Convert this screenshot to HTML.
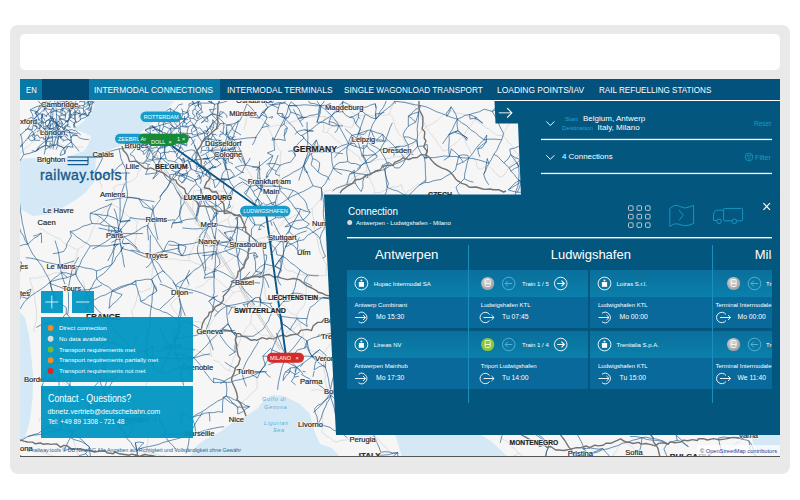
<!DOCTYPE html>
<html><head><meta charset="utf-8">
<style>
*{margin:0;padding:0;box-sizing:border-box}
html,body{width:800px;height:500px;overflow:hidden;background:#fff;font-family:"Liberation Sans",sans-serif}
.a{position:absolute}
.frame{left:10px;top:25px;width:780px;height:449px;background:#e9e9ea;border-radius:8px}
.topbox{left:20px;top:34px;width:760px;height:36px;background:#fff;border-radius:5px}
.map{left:20px;top:79px;width:760px;height:378px;overflow:hidden;background:#f6f6f5}
.pg{position:absolute;left:-20px;top:-79px;width:800px;height:500px}
.nv{position:absolute;top:79px;height:21px;color:#fff;font-size:9.9px;line-height:22.6px;white-space:nowrap}
.nv span{display:inline-block;transform-origin:0 50%;transform:scaleX(.855)}
.t{position:absolute;white-space:nowrap;line-height:1}
.sx{display:inline-block;transform-origin:0 50%}
</style></head><body>
<div class="a frame"></div>
<div class="a topbox"></div>
<div class="a map"><div class="pg">
<svg class="a" style="left:0;top:0" width="800" height="500" viewBox="0 0 800 500">
<rect x="20" y="79" width="760" height="378" fill="#f6f6f6"/>
<path d="M95 79L95 100L92 112L84 121L74 129L82 132L91 136L88 145L84 151L67 157L48 161.6L34 158L20 159L20 209L33 216L53 214L64 207L75 200.6L86 192L94.8 181L96 156.6L100.7 153L121 145.6L140 133L155 120L168 108L175 100L180 79Z" fill="#d4e9f5"/>
<path d="M20 312L25 318L29 335L31 352L33 375L32.6 398L30 420L25 438L20 442Z" fill="#d4e9f5"/>
<path d="M190 457L196 446L206 439L220 432L232 423L246 416L258 408L264 400L272 395L284 396L300 404L310 414L314 430L320 444L332 448L340 457Z" fill="#d4e9f5"/>
<path d="M395 434L480 434L492 442L508 457L402 457Z" fill="#d4e9f5"/>
<path d="M750 434L780 434L780 457L758 457Z" fill="#d4e9f5"/>
<path d="M394.7 100.1L393.5 103.6L391.9 106.9L390.6 110.4L389.6 113.9M394.7 100.1L397.9 101.3L401.4 100.8L404.6 102.0L407.9 102.9L411.4 102.0M411.4 102.0L413.1 104.7L415.2 107.2L417.1 109.8L419.1 112.4L420.1 115.5L421.2 118.5L423.1 121.1L424.8 123.8L426.0 126.8M34.4 108.3L35.4 111.3L36.5 114.3L37.2 117.4L38.7 120.3L39.5 123.4L39.4 126.7M250.1 110.1L249.2 113.4L247.4 116.4L246.1 119.5L245.9 123.0L244.5 126.2L244.2 129.7M250.1 110.1L252.8 112.3L255.0 115.0L258.2 116.5L261.1 118.5L263.7 120.7L266.0 123.3M448.8 110.5L446.8 113.0L443.9 114.4L441.5 116.4L439.1 118.5L437.0 120.7L434.3 122.4L431.7 124.1L428.7 125.3L426.0 126.8M448.8 110.5L451.8 111.1L454.6 112.4L457.5 113.3L460.6 113.6L463.6 114.2L466.4 115.5L469.2 116.7L471.8 118.6L474.8 119.3M351.3 111.7L354.2 114.1L357.7 115.4M389.6 113.9L386.5 114.9L383.3 115.4L380.1 114.9L376.9 115.5L373.7 115.7L370.5 115.3L367.2 114.8L364.1 115.9L360.9 115.7L357.7 115.4M389.6 113.9L392.0 116.8L393.6 120.0L394.5 123.6M324.7 116.5L321.6 116.5L318.5 116.5L315.4 117.4L312.2 116.4L309.2 117.4L306.1 117.1L303.0 117.3M324.7 116.5L328.1 118.2L331.6 119.3L335.2 120.4L338.6 122.1M324.7 116.5L324.2 119.6L323.5 122.6L323.6 125.8L323.8 129.0L322.6 131.9M357.7 115.4L355.6 118.0L353.9 120.7L353.6 124.1L352.6 127.1M303.0 117.3L300.0 118.2L297.3 119.7L294.5 121.1L291.6 122.2L288.7 123.3L285.5 123.3L282.5 124.0L279.8 125.5L276.5 125.2L273.6 126.2L270.5 126.8L267.7 128.0M474.8 119.3L472.9 122.3L470.9 125.2L468.8 128.0L466.4 130.5L464.9 133.8L462.7 136.5M474.8 119.3L477.3 121.7L480.3 123.5L483.2 125.4L485.7 127.8M512.7 119.4L510.6 121.9L509.0 124.8L506.8 127.2L505.4 130.2L503.1 132.6L501.7 135.6M168.8 123.0L169.7 126.8L171.2 130.4L172.7 134.0M214.9 122.6L213.9 125.8L212.4 128.8L210.9 131.8L209.9 135.0L208.3 138.0M214.9 122.6L217.8 123.7L220.5 125.1L223.4 126.3L225.7 128.5L228.4 129.9L231.1 131.4L233.6 133.1M338.6 122.1L336.1 124.0L333.7 125.9L331.0 127.5L328.4 129.3L327.3 132.6M338.6 122.1L341.0 124.2L343.6 125.7L346.4 126.9L349.6 127.2M266.0 123.3L267.7 128.0M394.5 123.6L395.1 126.8L396.6 129.4L398.0 132.2L399.6 134.8L401.8 137.2L403.8 139.6L405.0 142.4L405.1 145.8M39.4 126.7L38.2 130.0L37.1 133.4L36.3 136.9M267.7 128.0L269.7 130.3L270.9 133.1L272.1 136.0L274.4 138.2L275.1 141.3L276.1 144.3L277.5 147.0L278.9 149.8L281.3 151.9M349.6 127.2L352.6 127.1M426.0 126.8L423.9 129.1L421.5 131.0L419.7 133.5L417.9 135.9L416.4 138.6L415.1 141.5L413.5 144.2L411.1 146.1L408.4 147.8M426.0 126.8L427.9 129.4L429.2 132.5L431.8 134.7L433.5 137.4L436.0 139.6L437.2 142.7L439.1 145.4L441.4 147.7L442.8 150.7M485.7 127.8L489.1 129.0L491.8 131.5L494.7 133.7L497.8 135.4L501.7 135.6M322.6 131.9L327.3 132.6M172.7 134.0L169.0 134.3L165.8 135.8L162.5 137.5L159.0 138.0M172.7 134.0L173.9 136.9L175.1 139.9L177.3 142.4L178.8 145.3L180.6 147.9L181.6 151.1L183.6 153.6L185.1 156.5L185.8 159.7L187.3 162.5M233.6 133.1L235.0 136.0L235.8 139.0L235.7 142.1L235.5 145.2M327.3 132.6L330.0 134.1L332.3 136.2L334.1 138.8M36.3 136.9L34.4 139.6L32.5 142.2L30.2 144.5L27.7 146.5L24.8 148.1L22.9 150.8L20.3 152.8L17.8 154.8L15.8 157.4L12.7 158.8M159.0 138.0L158.4 140.1M208.3 138.0L208.8 141.1L209.4 144.2L208.9 147.3L208.7 150.5M462.7 136.5L460.4 138.6L458.3 140.8L456.1 143.0L453.6 144.8L450.8 146.1L448.7 148.4L446.5 150.5L442.8 150.7M462.7 136.5L464.7 139.1L465.5 142.4L466.8 145.4L468.8 148.0L470.0 151.0L471.3 154.0L472.6 157.0L474.5 159.7L476.6 162.3L476.9 165.8L478.3 168.7M501.7 135.6L504.5 137.4L506.7 139.7L508.3 142.6L510.9 144.6L512.9 147.1L514.5 150.1L516.2 152.9L519.3 154.4M48.2 138.3L44.7 140.5L41.0 142.2M48.2 138.3L51.4 138.7L54.5 139.4L57.0 141.7L59.6 143.6L62.3 145.3L65.2 146.4L68.4 147.0L71.4 148.1M158.4 140.1L156.9 142.9L155.7 145.9L153.1 148.1L151.1 150.5L148.8 152.9L148.0 156.1L146.5 158.9L144.5 161.4L143.3 164.4L141.4 167.0L140.0 169.8L138.0 172.3L137.2 175.5L135.5 178.2M334.1 138.8L336.6 140.6L339.3 142.1L341.5 144.2L343.6 146.5L346.5 147.8L349.0 149.4L351.7 151.0L353.6 153.5L356.4 154.8L358.9 156.5L360.1 159.9M235.5 145.2L232.7 146.7L229.8 147.6L226.8 148.0L223.7 148.0L220.8 149.1L217.7 148.7L214.7 149.4L211.9 150.8L208.7 150.5M235.5 145.2L237.2 147.9L239.1 150.4L240.2 153.4L241.4 156.3L242.5 159.2L243.6 162.2L244.4 165.3L246.8 167.6L247.8 170.6L249.5 173.2L251.3 175.8L252.7 178.6M405.1 145.8L408.4 147.8M71.4 148.1L74.5 147.2L77.6 147.6L80.7 147.0L83.9 147.1M408.4 147.8L407.7 152.1L405.3 155.7M208.7 150.5L208.2 153.6L208.3 156.6L208.1 159.7L209.4 162.6L210.0 165.6L210.6 168.6L211.2 171.7L211.5 174.7L211.4 177.8M281.3 151.9L280.4 155.1L280.2 158.4L280.4 161.8L280.4 165.1L279.9 168.4L278.8 171.7L279.6 175.1L279.9 178.5L279.0 181.7M405.3 155.7L402.2 156.0L399.2 156.6L396.0 156.4L393.0 157.3L390.0 158.1L387.0 158.5L384.0 159.2L380.8 159.3L377.7 159.6L374.8 160.5L371.8 161.5L368.8 162.0L366.0 163.9M519.3 154.4L517.2 156.9L515.3 159.6L513.5 162.4L511.2 164.8L508.9 167.2L507.2 170.1L505.4 173.0L503.5 175.7L500.1 177.1M12.7 158.8L13.0 161.8L12.8 164.9L13.0 167.9L14.0 170.9L14.3 173.9L14.5 176.9L13.9 180.0L14.7 183.0L14.9 186.0L15.4 189.0L14.9 192.1L16.3 195.0L15.8 198.1L16.4 201.1L16.8 204.2L17.3 207.2M360.1 159.9L362.9 162.2L366.0 163.9M366.0 163.9L366.5 167.5L366.8 171.1M487.1 165.3L484.5 167.2L481.7 168.9L478.3 168.7M487.1 165.3L490.1 167.2L492.8 169.5L494.7 172.5L497.4 174.8L500.1 177.1M99.1 173.3L100.3 176.2L100.2 179.3L100.1 182.4L101.6 185.2L101.7 188.3M366.8 171.1L363.6 172.3L360.6 174.0L357.7 175.6L354.6 176.9L351.9 179.0L349.6 181.8L346.5 183.1L343.7 185.1M366.8 171.1L368.0 174.2L369.4 177.2L370.2 180.4L371.9 183.4L373.4 186.4L374.7 189.4L373.6 193.2M135.5 178.2L132.6 180.2L129.6 181.9L126.1 182.4L123.2 184.2L119.6 184.6L116.3 185.6L113.4 187.5M211.4 177.8L210.6 181.7L209.0 185.4L208.9 189.4M252.7 178.6L250.6 180.9L248.0 182.5L245.2 183.8L242.2 184.7L239.4 186.1L237.1 188.1L234.4 189.6L231.6 190.8L229.9 193.8M279.0 181.7L278.0 184.8L277.3 187.8L276.8 190.9L277.7 194.1L277.6 197.2L277.2 200.3L277.2 203.4L276.7 206.5M343.7 185.1L340.6 185.8L337.8 187.1L335.2 189.2L332.1 189.8L328.9 190.2L326.0 191.3L323.4 193.2M401.5 184.6L398.6 186.3L395.4 187.0L392.0 187.0L389.2 188.8L386.1 189.8L383.1 191.1L380.2 192.6L376.8 192.5L373.6 193.2M401.5 184.6L402.1 188.0L404.1 190.8L405.6 193.9M418.4 183.0L416.3 185.7L413.3 187.4L410.8 189.6L407.7 191.1L405.6 193.9M113.4 187.5L114.7 191.7M114.7 191.7L115.0 196.1M193.9 190.7L193.1 194.0L193.1 197.2L193.1 200.4L192.9 203.7L193.0 206.9L192.6 210.1L194.1 213.3L194.6 216.5L195.4 219.7L195.0 223.0M193.9 190.7L196.9 190.7L199.9 190.3L202.9 189.5L205.9 188.9L208.9 189.4M208.9 189.4L211.9 190.3L214.9 190.6L218.1 190.6L221.1 191.1L224.2 191.3L227.0 192.7L229.9 193.8M323.4 193.2L322.3 196.2L321.1 199.2L318.6 201.2L316.9 203.8L314.5 205.9L312.5 208.3M115.0 196.1L113.4 200.2L110.6 203.6M110.6 203.6L108.1 205.7L106.2 208.3L104.2 210.9L102.3 213.5L100.4 216.1L98.2 218.5M110.6 203.6L113.5 204.7L116.0 206.4L118.8 207.7L120.6 210.4L123.5 211.5L125.6 213.7L127.7 216.1L130.5 217.4L132.9 219.2L135.6 220.6L138.2 222.1M233.8 205.0L231.9 208.2L231.3 212.0L230.2 215.6L227.9 218.6M276.7 206.5L278.4 209.3L281.1 211.2L283.3 213.6L284.4 216.8L286.6 219.2M312.5 208.3L309.6 209.3L306.5 210.1L303.6 211.3L300.6 212.2L298.2 214.5L295.2 215.4L292.5 217.0L289.7 218.6L286.6 219.2M312.5 208.3L312.2 211.7L312.8 214.9L313.4 218.2L313.9 221.5L314.9 224.7L314.3 228.1M98.2 218.5L97.7 221.9L95.6 224.5L93.8 227.3L92.3 230.2L91.1 233.3L90.3 236.5L88.8 239.4L87.0 242.2M227.9 218.6L225.3 220.4L222.2 221.2L219.6 222.9L216.7 224.0L213.7 225.0L210.9 226.3L208.4 228.3L205.4 229.0L202.4 230.0M227.9 218.6L228.3 222.0L230.1 225.1L230.7 228.5L231.6 231.8L232.5 235.1L232.4 238.6L234.1 241.7M286.6 219.2L283.5 220.6L281.9 223.6L279.8 226.1L277.5 228.4L274.9 230.4L272.4 232.3L270.4 235.0L267.1 236.2M138.2 222.1L136.6 225.0M195.0 223.0L197.7 225.0L200.8 226.8L202.4 230.0M136.6 225.0L136.1 228.1L136.9 231.3L136.4 234.4L136.3 237.6L135.4 240.7L134.8 243.8L136.0 247.0L136.3 250.1M39.4 228.5L42.5 229.3L45.2 231.0L47.4 233.4L50.6 234.3L53.2 236.0L55.9 237.6L59.1 238.4L61.5 240.5L63.8 242.9L66.2 245.1L69.5 245.6L72.2 247.2L74.9 248.8L77.9 249.9M202.4 230.0L201.6 233.0L199.8 235.5L197.7 237.9L196.2 240.5L195.1 243.3L193.9 246.1L192.6 248.9L191.0 251.5L189.4 254.1L188.9 257.1L189.0 260.5M314.3 228.1L314.5 231.4L315.5 234.4L317.2 237.2L317.3 240.5L318.3 243.6L318.5 246.8L319.4 249.9L320.4 252.9L322.3 255.7L323.4 258.7L324.4 261.8L326.2 264.5L326.4 267.8M267.1 236.2L264.3 237.8L261.2 238.0L258.3 239.2L255.4 240.5L252.5 241.7L249.0 240.9M87.0 242.2L84.8 244.2L82.8 246.5L80.0 247.8L77.9 249.9M234.1 241.7L237.1 242.2L240.0 241.4L243.1 241.6L246.1 241.7L249.0 240.9M77.9 249.9L77.1 253.0L76.6 256.1L75.5 258.9L73.1 261.3L71.7 264.0L70.5 266.8M136.3 250.1L139.0 251.9L142.2 252.5L145.1 253.9M145.1 253.9L148.3 256.1L152.0 257.4M152.0 257.4L152.2 260.6L153.2 263.8L153.0 267.1L152.8 270.3L152.1 273.6L151.9 276.9L152.7 280.1M152.0 257.4L155.0 258.5L158.1 258.2L161.2 259.2L164.3 259.2L167.4 258.7L170.5 259.0L173.6 258.8L176.7 259.2L179.7 260.2L182.8 260.4L185.9 260.5L189.0 260.5M236.4 255.4L233.7 256.9L231.5 259.3L228.9 261.0L226.5 263.1L224.3 265.3L221.4 266.6L218.6 268.1L216.0 269.8L213.3 271.3M236.4 255.4L237.8 258.3L237.8 261.5L237.9 264.6L239.1 267.5L239.5 270.6L239.3 273.8L239.1 277.0L239.9 280.0L241.2 283.0M189.0 260.5L192.2 261.6L195.0 263.4L198.4 264.1L201.6 265.0L204.3 267.1L207.6 267.7L210.4 269.5L213.3 271.3M282.3 261.1L279.5 262.6L277.0 264.8L274.4 266.8L271.2 267.8L268.4 269.6L266.0 271.9L263.1 273.3M282.3 261.1L283.2 264.0L284.6 266.7L285.7 269.4M70.5 266.8L68.1 269.0L65.0 270.1L62.2 271.4L59.3 272.8M70.5 266.8L72.1 269.7L74.1 272.3L76.2 275.0L78.2 277.5M285.7 269.4L288.7 271.1L292.3 271.1L295.3 272.7L298.2 274.4L301.8 274.5L304.9 275.6L308.0 276.9M326.4 267.8L325.8 271.6L327.0 275.3M59.3 272.8L56.3 272.8L53.3 273.3L50.4 274.6L47.6 275.5L44.6 276.2L41.7 276.9L38.7 277.3L35.8 278.4L32.6 277.8L29.6 278.2M213.3 271.3L213.7 276.4M263.1 273.3L260.0 274.8L256.5 275.2L253.5 277.0L250.1 277.8L247.0 279.1L243.9 280.6L241.2 283.0M263.1 273.3L263.2 276.6L263.3 279.9L264.1 283.1L264.3 286.3L265.2 289.5L264.9 292.9L265.5 296.1L266.6 299.2M327.0 275.3L323.8 275.3L320.7 275.9L317.4 275.2L314.2 275.0L311.1 274.9L308.0 276.9M29.6 278.2L30.5 281.3L31.3 284.3L32.6 287.3L32.8 290.5L33.6 293.5L34.7 296.5L34.7 299.7L35.2 302.9L36.0 305.9L36.2 309.1L36.6 312.2M213.7 276.4L211.3 278.4L208.3 279.6L206.2 282.2L203.9 284.5L201.0 285.9L198.1 287.1L195.2 288.6M213.7 276.4L215.8 278.9L218.6 280.5L220.9 282.8L223.4 284.8L225.7 287.1L228.5 288.8L231.5 290.2L233.4 293.0M308.0 276.9L307.4 280.1L306.3 283.2L306.5 286.5L306.1 289.7L306.2 293.0L305.9 296.3L305.8 299.6L304.9 302.7L304.0 305.9M82.3 280.3L83.9 283.0L84.6 286.0L84.5 289.2M152.7 280.1L151.8 283.1L151.8 286.3L150.0 289.0M190.3 284.9L187.0 287.1L184.4 290.1L182.3 293.5M241.2 283.0L241.7 286.9L241.0 290.8M84.5 289.2L87.2 291.8L88.3 295.4L89.6 298.9L92.4 301.3M150.0 289.0L147.0 289.5L144.2 291.0L141.2 292.0L138.0 291.7M241.0 290.8L237.0 291.4L233.4 293.0M241.0 290.8L242.4 293.8L244.1 296.5L245.6 299.4L247.2 302.2L248.7 305.1L251.4 307.2L253.8 309.4M138.0 291.7L137.7 294.7L136.9 297.8L136.5 300.8M182.3 293.5L179.6 295.3L177.6 297.8L174.7 299.4L172.8 302.0L170.8 304.6M233.4 293.0L231.1 295.2L229.6 297.9L227.2 300.0L225.5 302.6L223.5 305.0L222.0 307.7M266.6 299.2L263.8 301.0L261.3 303.2L259.3 305.9L256.0 307.1L253.8 309.4M266.6 299.2L271.5 299.1M271.5 299.1L274.3 300.3L276.9 301.7L279.6 303.1L281.9 305.1L284.8 306.2L286.9 308.4L288.8 311.0L290.9 313.3L293.9 314.1L296.4 315.9M92.4 301.3L91.6 304.4L91.5 307.6L91.2 310.7L90.5 313.8L89.2 316.8L89.3 320.0L88.1 322.9M136.5 300.8L135.3 304.0L134.3 307.4L131.6 309.7M170.8 304.6L172.1 307.5L173.8 310.1L175.5 312.7L177.6 315.0L179.1 317.7L181.6 319.8L183.8 322.0M304.0 305.9L301.5 307.9L299.7 310.5L297.7 312.9L296.4 315.9M222.0 307.7L220.1 310.5L218.1 313.1L215.5 315.3L214.2 318.5L212.1 321.0L210.3 323.8L208.7 326.8M131.6 309.7L132.4 313.7L133.2 317.6L131.9 321.6M253.8 309.4L252.9 312.8L251.5 316.0M36.6 312.2L36.3 315.5L36.5 318.9L36.1 322.2L34.8 325.4L33.7 328.7L34.6 332.1M251.5 316.0L251.1 319.5L250.4 323.0M296.4 315.9L297.4 318.9L298.0 322.1L300.4 324.5M88.1 322.9L84.9 323.2L82.2 325.2L79.3 326.3L76.1 326.8L73.2 328.0L70.2 328.9L67.0 329.2L63.9 329.8L60.9 331.0L58.0 332.1L54.9 332.8L52.2 334.7L49.5 336.5L46.2 336.5L43.2 337.7M131.9 321.6L133.5 324.9L133.8 328.6L134.7 332.1M183.8 322.0L181.4 324.4L178.6 325.8L175.4 326.7L172.6 328.2M183.8 322.0L187.0 321.3L190.3 321.8L193.5 321.9L196.8 321.3L200.1 322.3L203.3 321.9M203.3 321.9L205.9 324.5L208.7 326.8M250.4 323.0L248.3 325.7L246.1 328.2L244.7 331.2L243.1 334.1L241.4 336.9L240.3 340.1L239.2 343.2L238.1 346.4M250.4 323.0L253.0 325.2L255.1 328.0L257.0 331.0L259.2 333.5L262.4 335.3M208.7 326.8L209.5 329.7L210.3 332.7L209.8 335.7L209.5 338.8L209.6 341.8L210.3 344.8L209.9 347.8L210.5 350.8L211.1 353.8L211.8 356.7M300.4 324.5L297.2 325.4L295.1 328.0L292.2 329.3L289.1 330.5L286.6 332.3L284.4 334.8L281.3 335.9L278.7 337.6M300.4 324.5L300.5 327.7L302.0 330.5L303.3 333.4L302.9 336.6L303.9 339.6L304.6 342.6L305.8 345.5L305.2 348.8M172.6 328.2L169.4 327.7L166.3 328.6L163.1 328.4L160.0 329.4L156.9 330.4L153.7 330.5L150.5 331.0L147.3 330.8L144.2 331.7L141.1 332.8L137.9 332.8L134.7 332.1M172.6 328.2L174.7 330.7L176.2 333.6L176.6 336.9L177.4 340.0L179.3 342.6L180.3 345.7M134.7 332.1L134.7 335.2L133.8 338.3M104.7 334.9L107.0 337.2L110.0 338.5L112.9 340.1L115.9 341.3L118.0 344.0L120.3 346.4L123.6 347.4L126.3 349.2M262.4 335.3L265.8 334.9L268.9 336.2L272.2 336.1L275.4 337.5L278.7 337.6M43.2 337.7L43.6 341.0L44.1 344.2L44.9 347.3M133.8 338.3L131.6 340.8L129.7 343.5L128.0 346.4L126.3 349.2M330.4 343.4L328.7 346.4L326.5 349.2L324.6 352.1L322.0 354.5M44.9 347.3L46.4 350.4L46.6 353.8L46.7 357.3L47.4 360.6L49.3 363.5L50.5 366.7L51.6 369.9L52.3 373.2M180.3 345.7L177.3 346.9L174.4 348.3L172.2 350.6L170.0 353.1L167.6 355.2L165.3 357.5L162.1 358.4L159.0 359.4L156.9 361.9L153.7 362.8L151.6 365.4L148.5 366.5M180.3 345.7L183.2 346.6L186.4 346.7L189.1 348.2L192.2 348.6L195.1 349.3L197.7 351.0L200.4 352.5L203.2 353.9L206.1 354.6L209.2 354.9L211.8 356.7M238.1 346.4L237.0 349.4L235.9 352.4L235.3 355.6L233.5 358.4L232.3 361.4L231.7 364.6L230.0 367.5L228.7 370.4M305.2 348.8L308.6 350.0L311.9 351.0L315.3 352.1L318.9 352.4L322.0 354.5M322.0 354.5L322.7 357.5L323.2 360.5L323.5 363.6L323.3 366.8L324.2 369.8L324.4 372.9L325.5 375.8L325.1 379.0L325.0 382.2L326.2 385.1L327.2 388.1L328.2 391.0M212.9 359.9L216.0 360.9L219.0 362.1L221.1 364.7L223.4 366.9L225.6 369.3L228.7 370.4M141.8 366.8L145.1 365.8L148.5 366.5M148.5 366.5L148.2 370.4L149.4 374.2L150.1 378.1M228.7 370.4L231.6 371.4L234.7 370.9L237.8 370.3L240.7 371.6L243.7 371.3L246.7 372.3L249.8 371.8L252.8 372.1L255.7 372.9M17.7 373.4L20.0 378.0M52.3 373.2L50.6 376.3L48.3 378.7L45.3 380.7M52.3 373.2L54.7 375.6L57.2 377.8L59.7 380.1L62.4 382.0L65.1 384.1L67.8 386.1L70.6 388.0M255.7 372.9L256.5 376.6L257.1 380.2L257.2 383.9L257.2 387.6M20.0 378.0L17.7 380.1L15.0 381.7L11.8 382.3L9.1 383.6L6.7 385.6M150.1 378.1L148.0 380.7L146.3 383.6L145.7 387.1L143.9 389.9L142.2 392.8M70.6 388.0L74.5 388.7L78.4 387.7M78.4 387.7L79.2 390.6L79.6 393.7L80.6 396.6L82.7 399.0L83.7 401.9M132.0 389.4L135.3 390.7L138.6 392.2L142.2 392.8M257.2 387.6L255.2 390.3L252.8 392.4L250.3 394.6L248.5 397.4L245.7 399.3L243.1 401.3L240.8 403.6L239.2 406.6L236.2 408.2M142.2 392.8L139.9 395.2L137.5 397.7L136.1 400.8L134.3 403.6L132.5 406.5M310.8 390.5L314.3 390.0L317.8 389.5L321.2 390.6L324.7 389.9L328.2 391.0M328.2 391.0L327.4 394.2L327.1 397.4L326.0 400.4L326.4 403.8L325.2 406.8L324.1 409.9L323.1 413.0L322.7 416.2L322.5 419.4L322.9 422.7L322.9 426.0L322.4 429.1L321.6 432.3M83.7 401.9L81.1 403.9L78.0 405.0L74.6 405.5L72.2 407.9L69.5 409.9L66.2 410.6L63.2 411.9M83.7 401.9L87.0 401.7L90.4 401.6L93.7 401.1L96.8 399.5M96.8 399.5L99.8 399.5L102.8 400.5L105.7 401.3L108.6 402.0L111.6 402.8L114.6 403.0L117.7 403.3L120.6 404.1L123.6 404.9L126.7 404.7L129.7 405.0L132.5 406.5M132.5 406.5L135.2 408.5L137.6 410.8L140.0 413.2L141.8 416.0L144.4 418.0L146.7 420.4L148.4 423.3L149.5 426.7M54.6 408.8L50.9 409.5L47.5 410.7L44.3 412.8L40.8 413.8M54.6 408.8L57.6 409.4L60.4 410.9L63.2 411.9M63.2 411.9L62.6 415.9L63.1 419.9L64.2 423.8M40.6 417.5L39.0 421.4M64.2 423.8L66.3 423.9M66.3 423.9L67.8 427.9M151.7 425.2L149.5 426.7M67.8 427.9L69.6 430.6L70.9 433.5L72.5 436.3L73.0 439.5L74.2 442.4L75.0 445.5L75.9 448.5L76.9 451.5L78.1 454.5M149.5 426.7L149.2 429.8L148.2 432.9L148.6 436.2L147.9 439.3L148.0 442.5L146.9 445.6L147.3 448.8L146.7 452.0M321.6 432.3L324.4 433.9L326.5 436.5L329.8 437.5L332.0 439.9L334.7 441.7M498.0 434.8L500.4 436.8L502.6 439.1L505.4 440.6L508.1 442.4L509.9 445.1L512.4 447.0L515.0 448.9L516.8 451.6L519.4 453.4M374.5 435.4L371.6 436.8L368.4 436.2L365.2 435.8L362.1 436.4L359.1 436.9L356.1 437.9L352.9 437.5L350.0 438.8L347.0 440.0L343.9 440.1L340.8 440.4L337.9 441.8L334.7 441.7M374.5 435.4L376.7 437.8L378.7 440.4L381.0 442.6L383.0 445.2L385.8 447.0L387.5 449.8L390.2 451.7L391.9 454.5L394.0 457.0L396.9 458.7L398.7 461.5L400.9 463.8M624.8 440.6L622.4 442.8L620.1 445.2L617.9 447.6L616.6 450.8L614.5 453.2L612.7 455.9M624.8 440.6L627.4 442.5L629.2 445.2L632.1 446.7L634.0 449.4L636.6 451.2L639.4 452.9L642.2 454.6L645.0 456.2L647.2 458.5L648.8 461.5M739.5 441.7L736.7 442.9L734.4 444.9L732.2 447.3L729.1 448.0M729.1 448.0L728.8 451.6L726.9 454.5L725.6 457.6M36.8 450.8L40.2 451.5L43.4 453.1L46.7 454.2L50.2 454.7L53.4 456.1L56.9 456.7M146.7 452.0L144.0 453.5L141.3 455.1L138.6 456.6L136.3 458.8L133.6 460.3L131.1 462.2L128.4 463.7L125.7 465.2L122.8 466.4L120.3 468.2L118.0 470.5M146.7 452.0L149.6 452.6L152.5 453.5L155.4 454.4L158.4 455.0L161.3 455.7L164.5 455.5L167.2 456.9L170.1 457.9L173.3 457.6L176.4 457.4L179.5 457.7L182.3 458.7L185.4 458.9L188.0 461.1M78.1 454.5L75.5 457.1L72.6 459.5L69.5 461.6L67.1 464.5M78.1 454.5L80.9 456.6L83.9 458.4L86.1 461.2M519.4 453.4L516.5 454.6L513.7 455.9L511.1 457.4L509.3 460.1L506.4 461.2L503.6 462.5L501.4 464.6L499.6 467.2L497.5 469.6L495.0 471.1M519.4 453.4L522.9 456.3M612.7 455.9L610.8 458.9L608.0 460.9L605.5 463.2L603.6 466.1L600.6 468.0L598.4 470.6L596.7 473.6M612.7 455.9L615.7 457.3L618.6 458.8L621.6 460.3L624.3 462.1L626.3 465.0L628.8 467.0L631.5 468.9L634.5 470.4L636.8 472.8L639.5 474.6M56.9 456.7L55.9 460.2L55.3 463.9L54.0 467.3L52.8 470.7M725.6 457.6L722.6 458.5L719.5 458.9L716.5 459.6L713.3 458.8L710.3 459.9L707.3 460.1L704.3 461.2L701.1 460.5L697.9 459.9L694.8 459.7L691.7 459.7L688.8 460.9L685.7 460.8L682.6 461.6L679.6 462.1L676.7 463.5L673.5 462.8L670.5 463.8L667.4 464.0M86.1 461.2L90.1 460.2M90.1 460.2L93.4 460.9L96.7 460.9L100.0 460.4L103.3 459.4L106.6 459.6L109.9 458.5L113.2 459.3M188.0 461.1L190.8 463.1L192.9 466.0L195.2 468.4L198.2 470.4L199.8 473.5M429.5 461.2L426.4 462.2L423.2 462.8L420.0 462.7L416.9 463.5L413.7 463.5L410.5 463.4L407.3 463.6L404.0 462.9L400.9 463.8M648.8 461.5L646.2 463.6L644.3 466.2L642.8 469.0L641.2 471.8L639.5 474.6M648.8 461.5L652.0 461.6L654.7 463.1L657.8 463.4L660.5 465.0M67.1 464.5L65.0 467.0L63.3 469.7L62.3 472.7L61.9 475.9M400.9 463.8L398.0 465.2L395.1 466.6L392.6 468.7L389.4 469.3L386.6 471.0L383.9 472.8L380.7 473.4L377.7 474.5M536.5 464.5L539.3 465.7L542.2 466.3L545.2 466.7L548.4 466.4L551.4 466.6L554.1 468.3L557.3 468.1L560.2 468.6L563.0 470.1L565.7 471.7L568.9 471.3L571.9 471.4L574.7 472.9M667.4 464.0L663.9 464.0L660.5 465.0M52.8 470.7L56.1 472.0L59.1 473.8L61.9 475.9M245.7 469.8L242.5 470.8L239.2 471.2L235.8 471.0L232.7 472.7L229.5 473.8L226.4 474.9L222.9 474.4L219.6 475.0M199.8 473.5L203.2 473.4L206.4 474.2L209.7 475.1L213.0 475.0L216.3 475.0L219.6 475.0M574.7 472.9L577.8 473.1L581.0 472.6L584.1 472.0L587.3 472.9L590.4 472.4L593.6 472.8L596.7 473.6" stroke="#d2d2d2" stroke-width=".7" fill="none"/>
<path d="M288.1 87.7L286.4 92.7L286.0 97.9L284.7 102.9M185.1 92.2L189.8 97.6L193.9 103.6M57.1 100.9L58.7 102.1M66.8 101.5L58.7 102.1M66.8 101.5L67.8 106.6M342.9 101.7L338.8 106.0L335.5 111.0L331.7 115.5M342.9 101.7L347.7 104.0L352.7 106.0L357.4 108.5L361.9 111.4L366.3 114.5L370.8 117.3L376.0 119.0M395.0 101.1L391.6 105.1L387.5 108.4L383.2 111.5L379.8 115.4L376.0 119.0M395.0 101.1L400.1 101.9L405.2 102.5L410.3 103.8L415.3 104.8L420.5 105.5M48.2 102.7L44.9 108.5M48.2 102.7L53.1 108.4M58.7 102.1L53.1 108.4M58.7 102.1L62.2 108.7M193.9 103.6L197.7 102.7M193.9 103.6L189.3 106.3M197.7 102.7L204.8 103.2L212.0 103.0M212.0 103.0L214.7 104.3M247.0 103.7L244.6 109.6L242.4 115.6L239.5 121.3M247.0 103.7L251.5 108.2L255.5 113.1L259.2 118.2M284.7 102.9L278.5 104.1L272.2 105.0M284.7 102.9L288.8 105.7M89.5 105.4L90.9 110.7M214.7 104.3L213.8 109.3L212.4 114.1M272.2 105.0L267.8 107.3M288.8 105.7L287.2 112.1L284.7 118.1M288.8 105.7L294.0 105.5L299.3 105.3L304.5 104.8L309.7 105.1L314.9 105.8L320.1 105.8M320.1 105.8L324.3 108.6L327.8 112.3L331.7 115.5M420.5 105.5L418.5 112.0M420.5 105.5L426.0 106.8L431.1 109.0L436.2 111.6L441.5 113.4L446.7 115.5L451.9 117.6L457.3 119.1M67.8 106.6L62.2 108.7M67.8 106.6L70.0 110.3M72.8 107.3L70.0 110.3M72.8 107.3L76.1 112.1M189.3 106.3L186.7 112.6M267.8 107.3L263.7 113.0L259.2 118.2M44.9 108.5L41.1 112.4L37.0 115.9L33.5 120.0M53.1 108.4L52.9 113.5L52.5 118.6M70.0 110.3L69.7 116.9M90.9 110.7L87.7 115.7M492.2 111.4L495.4 116.7L498.2 122.3L500.5 128.0L503.7 133.4M76.1 112.1L78.0 113.0M76.1 112.1L74.2 118.9M78.0 113.0L87.7 115.7M175.1 112.0L179.4 113.8M175.1 112.0L171.5 115.7L167.2 118.6M179.4 113.8L183.0 113.9M179.4 113.8L179.3 120.1L180.1 126.3M183.0 113.9L184.2 114.1M186.7 112.6L184.2 114.1M418.5 112.0L418.6 117.7L417.8 123.4L417.1 129.1L417.6 134.9L417.2 140.6L417.6 146.3M212.4 114.1L219.1 115.7M212.4 114.1L205.5 117.7M219.1 115.7L218.8 118.1M331.7 115.5L327.0 118.4L322.3 121.4L317.5 124.3L313.2 127.9L308.7 131.3M331.7 115.5L335.1 119.8L338.3 124.3L340.7 129.2L343.4 133.9L345.9 138.8L348.5 143.6M671.8 114.2L668.3 118.1L664.9 122.1L662.3 126.7L659.1 130.8L656.7 135.6L653.2 139.5L650.0 143.6L647.6 148.3L644.6 152.6M671.8 114.2L674.4 118.7L677.7 122.6L680.9 126.6L683.9 130.7L686.8 135.0L690.2 138.8M69.7 116.9L74.2 118.9M69.7 116.9L67.6 121.8M164.8 117.8L167.2 118.6M164.8 117.8L162.8 120.7M33.5 120.0L30.2 124.2L27.6 128.8M33.5 120.0L39.1 124.5L44.6 129.4M52.5 118.6L56.7 124.6M52.5 118.6L46.9 126.6M218.8 118.1L214.2 122.0M218.8 118.1L224.1 123.1M284.7 118.1L282.0 123.4L279.3 128.8L276.6 134.2L274.0 139.6M284.7 118.1L289.0 122.7L293.5 127.0L297.1 132.2M376.0 119.0L372.6 124.4L370.5 130.4M457.3 119.1L454.6 124.3L452.3 129.7L448.9 134.6M457.3 119.1L461.6 122.8L466.5 125.6L470.5 129.7L475.3 132.6L479.4 136.5L484.1 139.6M67.6 121.8L68.1 124.4M162.8 120.7L163.8 126.1M239.5 121.3L233.3 123.8L226.8 125.0M212.8 122.7L214.2 122.0M212.8 122.7L209.7 127.1L206.6 131.5M224.1 123.1L223.1 124.1M224.1 123.1L226.8 125.0M56.7 124.6L64.7 128.4M68.1 124.4L64.7 128.4M226.8 125.0L226.2 134.7M46.9 126.6L44.6 129.4M46.9 126.6L53.6 131.4M163.8 126.1L170.4 129.0M163.8 126.1L161.6 131.4M180.1 126.3L186.5 127.2M180.1 126.3L180.7 133.9M27.6 128.8L20.7 134.6M44.6 129.4L49.0 135.2M55.3 129.9L53.6 131.4M55.3 129.9L60.1 135.0M64.7 128.4L69.3 131.2M64.7 128.4L60.1 135.0M53.6 131.4L49.0 135.2M69.3 131.2L71.0 138.4M161.6 131.4L163.4 134.8M206.6 131.5L203.8 132.8M299.0 131.0L297.1 132.2M308.7 131.3L302.0 135.5M370.5 130.4L369.0 135.5L367.9 140.8L366.9 146.0M370.5 130.4L376.5 132.6L382.6 134.3M180.7 133.9L176.6 137.6L172.3 141.0M180.7 133.9L184.7 136.9M203.8 132.8L197.6 135.5L191.2 137.7M297.1 132.2L300.1 135.2M503.7 133.4L501.7 139.8M11.0 136.0L20.7 134.6M20.7 134.6L21.9 139.5L22.2 144.6L22.7 149.6L23.8 154.6M49.0 135.2L46.7 140.0L45.8 145.2M60.1 135.0L57.8 139.5L56.7 144.4M163.4 134.8L156.3 136.6M163.4 134.8L167.2 143.8M300.1 135.2L302.0 135.5M302.0 135.5L306.5 141.1L312.0 145.7M382.6 134.3L386.1 138.7L390.5 142.4L394.5 146.3L398.2 150.6L402.1 154.7L405.3 159.4M448.9 134.6L449.3 140.0L448.8 145.5L448.8 150.9L449.4 156.4M135.9 136.8L135.2 142.2L135.9 147.6M156.3 136.6L153.8 142.5M184.7 136.9L181.4 141.7L177.5 146.0M184.7 136.9L191.2 137.7M191.2 137.7L194.1 143.6L196.4 149.8M228.8 137.0L231.0 136.6M231.0 136.6L237.4 144.1M71.0 138.4L71.3 141.8M274.0 139.6L274.1 144.9L274.7 150.1M484.1 139.6L479.8 143.8L475.9 148.5L472.6 153.5L468.8 158.1M484.1 139.6L489.9 139.1L495.8 139.2L501.7 139.8M501.7 139.8L499.2 144.7L497.1 149.9L493.8 154.4M71.3 141.8L63.8 148.0M172.3 141.0L167.2 143.8M172.3 141.0L173.3 142.8M153.8 142.5L148.8 147.8M167.2 143.8L165.0 146.8M173.3 142.8L177.5 146.0M348.5 143.6L342.6 145.4L337.1 148.1L331.1 149.6M348.5 143.6L353.4 145.9L358.6 147.4L363.9 148.6M45.8 145.2L40.7 148.2L35.7 151.3M45.8 145.2L49.8 146.4M56.7 144.4L49.8 146.4M56.7 144.4L63.8 148.0M237.4 144.1L233.1 147.1L228.6 149.8M237.4 144.1L239.9 149.6L242.2 155.1M312.0 145.7L313.9 146.4M312.0 145.7L310.4 150.9L308.8 156.2L306.7 161.2L303.8 165.9M135.9 147.6L130.3 148.6L124.7 148.6L119.1 148.8M135.9 147.6L142.9 151.6M148.8 147.8L142.9 151.6M148.8 147.8L151.0 151.3M177.5 146.0L180.2 147.8M180.2 147.8L176.2 156.4M313.9 146.4L319.5 148.0L325.4 148.4L331.1 149.6M366.9 146.0L363.9 148.6M417.6 146.3L413.7 150.8L409.4 155.0L405.3 159.4M417.6 146.3L420.4 152.2L424.3 157.5M119.1 148.8L112.3 150.7L105.5 152.4M119.1 148.8L120.1 153.7L121.0 158.6L122.9 163.3M196.4 149.8L196.0 154.9L195.8 160.0M224.7 149.9L228.6 149.8M224.7 149.9L220.5 152.2M331.1 149.6L331.6 155.8L332.0 162.1L333.3 168.2M363.9 148.6L362.8 154.9M509.8 149.1L510.7 154.6M35.7 151.3L29.8 153.2L23.8 154.6M151.0 151.3L153.0 150.6M151.0 151.3L154.1 157.5M105.5 152.4L103.0 157.0L100.9 161.8L98.4 166.5L95.7 171.0M220.5 152.2L219.1 155.7M644.6 152.6L640.7 156.3L636.3 159.4L632.0 162.6L627.9 166.2L623.2 168.9L619.3 172.6L614.7 175.6L610.8 179.3L606.7 182.8L602.5 186.1L597.8 188.8M219.1 155.7L213.5 157.0L208.0 158.7M219.1 155.7L225.1 160.9M242.2 155.1L244.1 160.0L245.6 165.0M272.8 155.7L267.9 159.4L263.2 163.3L258.4 167.2M362.8 154.9L364.4 159.7L366.8 164.1L368.5 168.8L370.5 173.4M493.8 154.4L491.6 159.1L488.9 163.5M510.7 154.6L515.1 160.4L518.7 166.7M154.1 157.5L159.8 159.0M176.2 156.4L184.6 161.6M424.3 157.5L425.2 163.1L425.3 168.8L425.5 174.5L425.9 180.1M424.3 157.5L429.4 157.5L434.4 157.6L439.4 156.8L444.3 156.0L449.4 156.4M449.4 156.4L455.9 156.5L462.3 157.8L468.8 158.1M159.8 159.0L157.7 165.0M208.0 158.7L201.9 159.1L195.8 160.0M208.0 158.7L213.1 165.8M405.3 159.4L400.3 162.1L394.9 164.1L389.5 166.1L384.8 169.4M468.8 158.1L467.0 163.1L466.1 168.3L464.8 173.4L464.3 178.7M468.8 158.1L474.0 158.8L479.0 160.0L484.0 161.5L488.9 163.5M184.6 161.6L181.8 167.3L178.2 172.5M184.6 161.6L187.9 160.3M187.9 160.3L189.6 161.8M189.6 161.8L195.8 160.0M195.8 160.0L199.6 166.5L203.0 173.1M225.1 160.9L226.2 167.1L227.6 173.1L228.7 179.3M122.9 163.3L125.2 167.9L126.2 172.9M157.7 165.0L160.8 169.5M213.1 165.8L207.5 172.1M245.6 165.0L252.0 166.4L258.4 167.2M245.6 165.0L242.0 172.3M303.8 165.9L299.0 169.4L293.7 172.0L288.8 175.2L283.5 177.8L278.8 181.4M303.8 165.9L307.4 173.2M258.4 167.2L258.0 173.2L257.6 179.2L256.0 185.1M518.7 166.7L519.1 173.6L518.7 180.6M160.8 169.5L163.5 173.9L166.2 178.3L170.1 181.8M333.3 168.2L330.8 173.5L327.9 178.4L325.3 183.5L321.3 187.9M333.3 168.2L338.4 169.3L343.7 170.0L348.9 170.9L353.9 172.9M384.8 169.4L377.6 171.3L370.5 173.4M384.8 169.4L385.7 175.3L386.3 181.3L387.1 187.2M126.2 172.9L126.2 179.1L126.1 185.3L127.3 191.4L127.4 197.6M178.2 172.5L174.6 177.5L170.1 181.8M178.2 172.5L183.8 175.0L189.7 176.9L195.1 179.9M203.0 173.1L205.5 174.9M203.0 173.1L200.8 178.3M207.5 172.1L205.5 174.9M242.0 172.3L235.6 176.3L228.7 179.3M307.4 173.2L310.1 179.6L313.1 185.8M353.9 172.9L360.7 173.9L367.4 174.9M370.5 173.4L367.4 174.9M205.5 174.9L213.3 180.0M195.1 179.9L196.4 183.8M195.1 179.9L200.8 178.3M228.7 179.3L223.6 179.0L218.4 179.2L213.3 180.0M775.8 178.5L774.1 183.5L772.8 188.6L771.2 193.7L769.8 198.8L767.7 203.6L766.0 208.6L764.0 213.5L761.9 218.3L759.5 223.0M170.1 181.8L167.2 187.2L163.3 191.9L160.0 197.0M170.1 181.8L173.6 184.3M278.8 181.4L273.4 182.8M278.8 181.4L279.7 190.3M425.9 180.1L421.1 183.7L416.6 187.6L412.4 191.9L408.1 196.0M518.7 180.6L518.0 186.0L516.0 190.9L515.1 196.2L513.6 201.4L512.3 206.5L510.7 211.7L509.9 217.0L508.6 222.2L506.9 227.2M518.7 180.6L523.6 182.1L528.7 183.0L533.7 184.4L538.7 185.6L543.4 188.0L548.4 189.4L553.2 191.2L557.9 193.4L562.9 194.5L567.6 196.8L572.6 198.1L577.6 199.4M196.4 183.8L192.3 187.7L189.1 192.4M196.4 183.8L200.7 188.6M273.4 182.8L267.6 183.2L261.8 184.4L256.0 185.1M173.6 184.3L175.7 189.0L178.2 193.6L181.2 197.9M256.0 185.1L249.8 186.5M313.1 185.8L308.3 188.8L303.3 191.4L298.0 193.6L292.8 195.9L287.9 198.7M313.1 185.8L321.3 187.9M249.8 186.5L245.7 194.6M321.3 187.9L322.2 193.0L323.0 198.2L323.8 203.4L323.5 208.6L323.3 213.9L324.0 219.1L325.1 224.2M387.1 187.2L392.3 189.6L397.8 191.1L402.7 194.0L408.1 196.0M200.7 188.6L203.2 197.2M597.8 188.8L592.6 191.2L587.8 194.2L583.0 197.4L577.6 199.4M279.7 190.3L284.1 194.2L287.9 198.7M189.1 192.4L184.9 198.8M245.7 194.6L250.4 198.6L254.3 203.3L259.0 207.2M408.1 196.0L408.8 201.2M127.4 197.6L133.1 197.8L138.8 198.4M127.4 197.6L125.3 203.5L123.6 209.4L122.4 215.5L120.4 221.4M160.0 197.0L160.4 199.4M181.2 197.9L184.9 198.8M203.2 197.2L204.0 202.3L205.8 207.2L207.4 212.2L209.1 217.1L210.7 222.1L211.6 227.3M138.8 198.4L143.5 202.2L148.2 206.0L152.7 210.1M160.4 199.4L156.4 204.7L152.7 210.1M287.9 198.7L282.2 202.8L275.9 206.0M19.3 200.3L19.9 205.9L20.5 211.5L21.5 217.0L22.2 222.5L23.6 228.0L24.7 233.5L26.1 238.9L27.8 244.3M408.8 201.2L405.3 205.1L401.4 208.8L397.3 212.1L393.8 216.1L389.4 219.3L385.9 223.3L381.9 226.8L378.3 230.7M275.9 206.0L271.0 207.4L266.1 208.2L261.1 209.1M259.0 207.2L254.0 212.4M259.0 207.2L261.1 209.1M152.7 210.1L151.7 215.4L150.2 220.6L147.7 225.3M254.0 212.4L251.4 215.9M107.6 215.5L114.2 217.9L120.4 221.4M251.4 215.9L248.1 216.2M248.1 216.2L245.9 220.8L244.2 225.6L242.2 230.2M120.4 221.4L118.8 227.3L117.9 233.4M759.5 223.0L755.0 225.6L750.1 227.0L745.5 229.2L740.6 230.7L736.0 233.0L731.6 235.7L727.1 238.2L722.3 239.9L717.6 242.0L712.8 243.8L708.2 245.8M147.7 225.3L142.7 227.3L138.3 230.3L133.7 233.1L128.9 235.2L123.8 236.9M147.7 225.3L150.0 229.9L152.4 234.4L155.5 238.4L157.9 243.0L160.7 247.2L163.6 251.4M325.1 224.2L320.9 227.4L316.3 230.1L311.9 232.8L307.3 235.5L303.9 239.7M325.1 224.2L330.3 225.5L335.8 225.4L341.1 225.6L346.5 226.2L351.7 227.5L357.1 227.6L362.3 228.9L367.7 229.0L373.1 229.3L378.3 230.7M211.6 227.3L212.9 233.1L214.9 238.6L217.4 244.1M236.3 227.7L233.6 234.5L229.9 240.8M236.3 227.7L242.2 230.2M506.9 227.2L502.8 230.8L498.8 234.5L494.8 238.2L490.4 241.5L486.3 245.2L482.0 248.5L477.8 252.0L474.2 256.1L470.2 259.9L465.8 263.2M242.2 230.2L246.7 233.3L251.2 236.4M378.3 230.7L382.0 234.5L386.0 237.9L389.9 241.6L393.3 245.7L397.5 248.9L401.5 252.4L405.5 255.9L409.6 259.3L413.4 263.0L417.2 266.7L420.3 271.0L423.9 274.9L427.9 278.5M117.9 233.4L123.8 236.9M682.7 235.5L687.8 237.5L692.9 239.5L698.0 241.7L703.0 243.8L708.2 245.8M123.8 236.9L122.1 243.1M251.2 236.4L252.1 237.4M252.1 237.4L256.8 241.0L261.3 245.0M293.7 236.2L297.2 241.2M293.7 236.2L287.5 242.6M303.9 239.7L297.2 241.2M229.9 240.8L223.6 242.3L217.4 244.1M272.0 240.1L266.9 243.0L261.3 245.0M272.0 240.1L277.2 240.8L282.3 241.8L287.5 242.6M120.2 243.6L118.4 244.1M120.2 243.6L122.1 248.5M287.5 242.6L284.7 249.2L282.5 256.1M27.8 244.3L30.2 249.2L32.7 254.0L36.0 258.4L39.4 262.8L42.6 267.2L45.0 272.2L47.8 276.8L50.2 281.8M90.5 245.9L87.5 250.4L84.8 255.0L81.9 259.5L80.0 264.5L77.4 269.1L75.7 274.2M90.5 245.9L96.1 245.7L101.7 246.0L107.3 246.0L112.8 244.9L118.4 244.1M217.4 244.1L216.4 251.6M261.3 245.0L263.1 249.7L263.9 254.7M708.2 245.8L708.1 250.8L708.3 255.9L707.4 260.8L706.6 265.8L706.2 270.8L706.2 275.8L705.3 280.8L705.2 285.8L704.7 290.8L704.1 295.7L704.0 300.7L704.3 305.8M122.1 248.5L127.6 250.0L133.1 251.5L138.2 254.1L143.4 256.3L148.8 258.3L154.4 259.2M163.6 251.4L158.9 255.2L154.4 259.2M163.6 251.4L169.9 252.2L176.1 253.8L182.1 255.8M216.4 251.6L210.2 251.8L204.0 252.9L197.8 253.4M216.4 251.6L215.4 256.7L215.4 261.8L215.0 267.0L214.5 272.1L214.2 277.2L213.9 282.3L214.0 287.5L214.2 292.7L212.7 297.7M197.8 253.4L192.5 253.8L187.3 254.9L182.1 255.8M263.9 254.7L264.7 263.9M282.5 256.1L278.7 261.2L275.0 266.3M282.5 256.1L286.8 258.8L290.3 262.5L294.6 265.3M154.4 259.2L159.2 264.6L162.9 270.8M264.7 263.9L269.8 265.3L275.0 266.3M264.7 263.9L264.3 269.4L263.1 274.8L263.1 280.4L262.6 285.9L261.4 291.3L260.3 296.7L260.6 302.3M465.8 263.2L461.0 264.9L456.3 266.9L451.3 268.3L446.8 270.8L442.3 273.2L437.5 275.0L432.6 276.5L427.9 278.5M294.6 265.3L300.2 270.0M300.2 270.0L297.9 275.6L296.1 281.4L295.0 287.4L292.9 293.1M162.9 270.8L156.9 274.7L151.5 279.3M162.9 270.8L167.7 275.3L172.3 279.9L175.6 285.6M75.7 274.2L70.7 276.3L65.7 278.0L60.4 278.9L55.3 280.3L50.2 281.8M75.7 274.2L77.8 279.0L80.7 283.3L83.6 287.6L86.0 292.2L88.0 296.9L90.4 301.5M151.5 279.3L146.2 279.2L141.0 280.3L135.7 280.8M151.5 279.3L154.0 285.5M427.9 278.5L425.5 283.0L424.4 287.9L422.8 292.6L420.8 297.2M50.2 281.8L46.0 285.7L41.5 289.0L36.7 292.0L32.0 295.1L27.6 298.7M135.7 280.8L131.0 283.7L125.9 286.0L120.7 287.9L115.7 290.3L110.4 292.1L105.6 294.8L100.3 296.4L95.5 299.3L90.4 301.5M154.0 285.5L153.6 290.6L152.2 295.6L152.1 300.7L151.5 305.8L150.6 310.9L150.1 316.0L149.9 321.2L149.5 326.3L148.0 331.2L147.2 336.3L147.1 341.5L146.1 346.5L145.1 351.6M175.6 285.6L180.8 287.6L186.3 288.9L191.8 290.0L197.1 291.6L202.4 293.3L207.5 295.6L212.7 297.7M292.9 293.1L288.8 296.1L285.4 299.8L281.8 303.4L278.5 307.3L274.5 310.3M292.9 293.1L298.2 293.3L303.3 294.4L308.3 295.9L313.5 296.2L318.6 297.8L323.8 298.2L329.0 298.4L334.1 299.8M212.7 297.7L217.2 300.8L222.0 303.3L226.8 305.8M420.8 297.2L421.2 302.6L422.3 307.8M334.1 299.8L337.5 304.1L340.3 308.8L343.0 313.6L345.6 318.4L348.9 322.9L351.3 327.8M90.4 301.5L93.8 305.5L97.3 309.6L101.0 313.3L104.2 317.5L107.8 321.4L111.4 325.3L114.3 329.7L118.0 333.5L121.4 337.6L125.2 341.3L128.6 345.3L132.3 349.1M252.0 300.8L246.9 301.9L241.9 303.0L236.9 304.2L231.9 305.2L226.8 305.8M252.0 300.8L260.6 302.3M260.6 302.3L265.4 304.7L269.8 307.8L274.5 310.3M226.8 305.8L226.7 311.8L227.2 317.8L228.1 323.7M704.3 305.8L699.3 306.5L694.6 308.5L689.7 309.5L685.0 311.4L680.1 312.6L675.3 314.2L670.6 315.8L665.6 316.6L660.5 317.1L655.6 318.2L650.8 319.5M704.3 305.8L709.5 306.2L714.7 306.5L719.9 306.4L725.2 307.2L730.4 307.0L735.6 306.6L740.9 307.2L746.1 307.9L751.3 307.9L756.5 307.6L761.8 307.6L767.0 308.4M767.0 308.4L767.7 313.6L768.3 318.8L767.6 324.1L768.2 329.3L768.0 334.5L767.7 339.8L767.9 345.0L768.5 350.2M274.5 310.3L277.4 314.7L280.5 319.0L282.4 323.9M228.1 323.7L224.2 327.4L220.9 331.7L216.6 335.0L212.6 338.6L209.0 342.5L205.5 346.7L201.7 350.4L197.6 354.0L193.7 357.7M282.4 323.9L280.5 329.2L277.7 334.0L276.4 339.5L274.0 344.5L272.0 349.7M282.4 323.9L287.5 327.1L292.1 330.9L296.8 334.6L302.1 337.5L307.0 340.9M351.3 327.8L346.6 329.7L341.8 331.2L337.0 332.9L331.9 333.2L326.9 334.1L322.0 335.3L317.1 336.8M317.1 336.8L311.8 338.3L307.0 340.9M307.0 340.9L308.1 346.3L309.5 351.6L312.0 356.5M132.3 349.1L129.6 353.5L126.7 357.9L124.6 362.6L122.1 367.2L119.5 371.7L116.5 376.0L113.3 380.1L110.6 384.6L108.0 389.0L105.0 393.3L102.6 397.9L100.7 402.8L98.0 407.3M132.3 349.1L138.6 351.0L145.1 351.6M272.0 349.7L270.6 356.2M145.1 351.6L151.5 358.9M193.7 357.7L188.4 358.3L183.2 358.5L177.9 358.3L172.6 358.6L167.3 358.1L162.0 357.9L156.7 357.6L151.5 358.9M193.7 357.7L197.3 361.6L200.9 365.6L203.6 370.2L206.9 374.5L210.1 378.7L213.7 382.7M270.6 356.2L266.8 361.4L263.6 366.9L260.0 372.2M270.6 356.2L275.8 358.4L281.1 360.5L286.6 362.1L291.7 364.6L296.8 367.3M312.0 356.5L304.9 361.9M312.0 356.5L316.1 360.7L320.8 364.1L325.5 367.7M499.8 359.9L501.2 364.8L501.1 369.9L501.3 374.9L502.1 379.8L502.9 384.8L503.2 389.8L504.7 394.6L505.2 399.6L506.0 404.5L506.4 409.5L506.7 414.5L508.2 419.4M499.8 359.9L505.1 360.9L510.5 362.2L515.9 362.4L521.2 363.4L526.6 363.7L532.0 364.3L537.4 365.3L542.8 365.2L548.2 365.7L553.6 366.6M304.9 361.9L296.8 367.3M325.5 367.7L327.1 373.1L328.4 378.6L329.3 384.2L330.5 389.7L331.1 395.4M553.6 366.6L554.8 371.7L555.6 376.8L555.9 382.0L555.9 387.2L556.2 392.4L556.2 397.6L557.3 402.7M260.0 372.2L255.2 374.5L250.4 376.7L245.4 378.1L240.4 379.6L235.2 380.5L230.3 382.3M213.7 382.7L219.9 382.3L226.1 382.4M226.1 382.4L230.3 382.3M226.1 382.4L226.9 389.2L226.4 396.1M70.0 385.5L64.6 387.9L58.9 389.9M58.9 389.9L58.8 395.6L59.8 401.3L60.0 407.0L59.6 412.7L60.3 418.4L61.0 424.1L60.6 429.8M331.1 395.4L335.3 398.8L339.4 402.3L342.7 406.5L346.4 410.5L350.4 414.0L354.8 417.2L358.4 421.2L362.5 424.7L366.8 427.9L370.4 431.9M226.4 396.1L222.2 399.0L217.6 401.1L213.4 404.0L209.1 406.7L205.1 409.8L200.7 412.4L196.1 414.5L192.1 417.7M557.3 402.7L552.7 405.8L548.2 408.9L544.0 412.6L539.3 415.4L534.9 418.6L530.2 421.5L525.8 424.9L521.1 427.8M557.3 402.7L559.8 407.1L562.9 411.1L565.1 415.7L568.1 419.7L570.8 424.0L573.8 428.0L575.8 432.8L578.7 436.9L581.0 441.3L583.2 445.9L585.3 450.5L588.4 454.5M98.0 407.3L94.5 410.9L91.2 414.9L87.1 417.9L83.9 421.9L80.2 425.3L76.8 429.2L72.9 432.4M98.0 407.3L102.2 410.9L106.4 414.6L110.4 418.4L114.7 421.9L118.6 425.8M192.1 417.7L194.6 424.7L195.8 432.1M508.2 419.4L505.7 425.1L503.9 431.0L501.7 436.8L500.2 442.9M508.2 419.4L512.3 422.5L517.0 424.7L521.1 427.8M118.6 425.8L121.6 430.1L124.5 434.4L127.2 438.8L130.9 442.5L133.6 446.9L137.0 450.8M60.6 429.8L55.1 430.8L49.6 432.0L44.3 433.7L38.8 434.7L33.2 435.2L27.8 436.5M60.6 429.8L66.7 431.1L72.9 432.4M72.9 432.4L70.7 437.0L68.3 441.4L66.1 446.0L64.1 450.6M195.8 432.1L190.2 433.5L184.9 436.1L179.6 438.2L173.9 439.6L168.3 441.1M676.1 434.9L677.2 440.3M27.8 436.5L22.1 439.8L16.3 442.8L11.1 447.0M641.9 437.7L637.0 439.3L632.0 440.4L627.3 442.5L622.3 443.3L617.7 445.7L612.8 447.1L608.0 448.8L602.9 449.6L598.2 451.8L593.3 453.2L588.4 454.5M641.9 437.7L646.8 439.5L652.0 440.1L657.2 440.5L662.3 441.4L667.2 443.5M168.3 441.1L163.1 442.5L158.0 444.6L152.6 445.8L147.3 446.8L141.9 448.0L137.0 450.8M677.2 440.3L672.1 441.7L667.2 443.5M25.0 85.6L27.8 88.7L31.2 91.0L35.3 92.5L38.8 94.6L41.4 98.0L44.5 100.7L48.2 102.7M25.0 85.6L28.5 88.3L31.6 91.3L34.1 94.9L36.8 98.2L39.0 102.1L42.2 105.1L44.9 108.5M310.1 84.5L305.7 84.9L301.4 86.6L297.1 87.7L292.8 88.6L288.1 87.7M310.1 84.5L311.4 89.1L313.9 93.1L316.0 97.3L317.5 101.8L320.1 105.8M338.7 84.7L339.5 89.0L340.8 93.2L342.7 97.3L342.9 101.7M338.7 84.7L335.4 87.2L333.3 90.6L330.9 93.9L328.3 97.0L325.0 99.3L323.2 103.1L320.1 105.8M184.7 87.5L185.1 92.2M184.7 87.5L186.3 91.9L189.7 95.3L192.0 99.4L193.9 103.6M68.1 89.6L67.5 95.5L66.8 101.5M275.7 89.2L279.8 88.0L283.9 87.5L288.1 87.7M275.7 89.2L274.0 92.9L274.3 97.2L273.4 101.1L272.2 105.0M214.2 92.1L213.9 88.4M390.9 92.7L392.4 97.1L395.0 101.1M390.9 92.7L389.3 96.7L386.4 100.1L385.0 104.2L382.9 108.0L380.2 111.4L378.6 115.5L376.0 119.0M550.8 92.2L547.1 88.9L544.0 85.0M93.3 95.5L91.2 100.4L89.5 105.4M93.3 95.5L92.4 100.5L91.9 105.6L90.9 110.7M291.7 95.8L289.9 91.8L288.1 87.7M395.0 95.1L390.9 92.7M68.2 97.9L66.8 101.5M68.2 97.9L67.8 93.7L68.1 89.6M306.0 96.0L307.1 92.1L308.0 88.1L310.1 84.5M51.3 101.4L48.2 102.7M63.9 100.9L66.8 101.5M69.5 101.0L66.8 101.5M87.8 101.6L89.5 105.4M88.3 101.5L89.5 105.4M198.4 101.2L193.9 103.6M200.5 100.5L198.4 101.2M200.5 100.5L197.7 102.7M208.4 101.0L212.0 103.0M208.4 101.0L214.7 104.3M211.3 100.7L212.0 103.0M211.3 100.7L208.4 101.0M227.4 100.8L223.2 102.3L218.9 103.2L214.7 104.3M263.3 100.7L267.8 107.3M263.3 100.7L267.5 103.4L272.2 105.0M291.1 101.8L288.8 105.7M45.4 103.5L48.2 102.7M45.4 103.5L44.9 108.5M73.7 102.9L72.8 107.3M73.7 102.9L69.5 101.0M75.9 103.5L73.7 102.9M94.4 102.1L89.5 105.4M94.4 102.1L88.3 101.5M188.8 104.0L189.3 106.3M191.6 103.0L193.9 103.6M191.6 103.0L188.8 104.0M280.3 102.5L284.7 102.9M280.3 102.5L276.0 103.1L272.2 105.0M309.7 103.1L307.9 99.5L306.0 96.0M309.7 103.1L315.1 103.8L320.1 105.8M330.5 103.6L325.4 105.2L320.1 105.8M375.2 103.7L376.1 108.8L375.5 113.9L376.0 119.0M395.2 103.8L395.0 101.1M586.2 102.3L585.9 106.8L584.5 111.1M586.2 102.3L581.8 101.6L577.7 100.3L573.6 98.8L569.3 98.0L565.3 96.3L560.9 95.7L556.8 94.1L552.8 92.4M40.0 105.6L44.9 108.5M40.0 105.6L45.4 103.5M51.9 105.4L53.1 108.4M56.0 104.5L58.7 102.1M62.2 104.9L62.2 108.7M84.0 105.4L87.8 101.6M496.8 105.9L492.2 111.4M66.5 107.6L70.0 110.3M70.3 107.2L72.8 107.3M70.3 107.2L67.8 106.6M73.5 106.2L73.7 102.9M77.9 106.0L75.3 107.1M80.2 106.3L77.9 106.0M90.0 106.3L88.0 104.7M198.5 106.8L197.7 102.7M198.5 106.8L198.4 101.2M296.8 106.3L291.1 101.8M296.8 106.3L292.9 105.7L288.8 105.7M326.6 107.1L330.5 103.6M342.2 106.1L342.9 101.7M362.5 107.7L366.9 106.9L370.9 104.9L375.2 103.7M451.1 106.8L453.7 110.7L455.9 114.7L457.3 119.1M30.2 109.9L32.6 114.7L33.5 120.0M30.2 109.9L34.9 107.3L40.0 105.6M47.5 109.1L44.9 108.5M50.3 109.6L47.5 109.1M50.3 109.6L53.1 108.4M75.6 108.2L73.5 106.2M78.2 108.0L77.9 106.0M78.2 108.0L75.6 108.2M86.8 108.9L90.0 106.3M170.2 108.4L175.1 112.0M181.8 108.4L183.0 113.9M201.0 109.2L198.5 106.8M209.4 109.4L212.4 114.1M213.5 109.7L209.4 109.4M216.5 108.2L213.5 109.7M278.4 108.0L280.3 102.5M278.4 108.0L272.2 105.0M376.4 108.2L375.2 103.7M484.2 109.2L488.2 110.3L492.2 111.4M501.9 108.5L496.8 105.9M501.9 108.5L496.9 109.5L492.2 111.4M711.8 109.5L714.0 113.1L715.6 117.0L717.3 120.8L717.4 125.2M711.8 109.5L709.0 112.4L706.2 115.4L704.8 119.4L702.8 123.0L699.7 125.7L698.0 129.5L694.6 132.0L692.3 135.3L690.2 138.8M37.1 111.7L40.0 105.6M37.1 111.7L30.2 109.9M43.7 111.5L44.9 108.5M56.5 111.0L52.8 111.4M70.3 111.1L68.4 110.3M84.4 110.6L86.8 108.9M91.3 111.6L86.8 108.9M165.7 111.3L170.2 108.4M189.7 110.3L186.7 112.6M220.2 111.6L219.1 115.7M342.8 111.7L342.2 106.1M342.8 111.7L342.0 106.7L342.9 101.7M795.1 112.0L794.3 107.9L793.3 103.9L790.8 100.5M34.7 113.0L37.1 111.7M51.0 113.0L51.2 110.7M51.0 113.0L52.8 111.4M59.8 112.3L56.5 111.0M59.8 112.3L62.2 108.7M61.9 113.8L59.8 112.3M61.9 113.8L62.2 108.7M66.8 113.5L68.4 110.3M70.2 112.5L70.0 110.3M73.5 112.7L76.1 112.1M73.5 112.7L75.1 110.4M86.0 113.4L87.7 115.7M86.0 113.4L84.4 110.6M89.2 112.7L91.3 111.6M170.8 113.0L175.1 112.0M170.8 113.0L170.2 108.4M196.2 113.2L201.0 109.2M223.6 112.3L220.2 111.6M223.6 112.3L219.1 115.7M262.0 112.4L259.2 118.2M262.0 112.4L267.8 107.3M264.1 112.3L262.0 112.4M264.1 112.3L267.8 107.3M277.1 113.4L278.4 108.0M277.1 113.4L280.5 116.4L284.7 118.1M282.5 113.6L284.7 118.1M282.5 113.6L277.1 113.4M290.8 112.1L288.3 106.0M318.8 113.7L318.8 109.6L320.1 105.8M318.8 113.7L320.2 109.6L321.3 105.3M320.3 112.9L320.1 105.8M335.5 112.3L331.7 115.5M335.5 112.3L342.8 111.7M358.7 113.4L362.5 107.7M375.6 113.8L376.0 119.0M384.4 112.3L380.1 113.6L375.6 113.8M446.5 113.4L451.1 106.8M36.9 115.3L34.7 113.0M36.9 115.3L37.1 111.7M59.7 115.6L61.9 113.8M65.2 115.0L66.8 113.5M65.2 115.0L61.9 113.8M71.7 115.6L69.7 116.9M71.7 115.6L70.2 112.5M81.2 115.2L78.0 113.0M82.3 114.8L86.0 113.4M188.7 114.8L186.6 113.3M200.3 115.2L196.2 113.2M215.7 114.1L212.4 114.1M226.9 115.5L223.6 112.3M469.4 114.5L465.1 115.3L461.3 117.6L457.3 119.1M469.4 114.5L474.4 113.0L479.5 111.7L484.2 109.2M503.8 114.2L501.9 108.5M503.8 114.2L500.2 110.1L496.8 105.9M31.3 117.3L33.5 120.0M42.6 116.6L42.5 114.3M42.6 116.6L41.5 114.5M78.8 116.9L81.2 115.2M80.1 117.0L81.2 115.2M181.5 117.5L183.0 113.9M222.7 117.3L219.1 115.7M226.8 117.7L226.9 115.5M249.6 117.1L254.4 117.3L259.2 118.2M267.2 117.6L264.1 112.3M267.2 117.6L261.5 114.2M272.7 116.6L268.7 117.6M282.0 116.6L282.5 113.6M282.0 116.6L284.7 118.1M288.6 117.0L284.7 118.1M288.6 117.0L290.8 112.1M302.6 117.3L300.8 113.6L299.2 109.7L296.8 106.3M302.6 117.3L299.0 115.0L294.9 113.5L290.8 112.1M306.0 117.4L302.6 117.3M306.0 117.4L310.0 115.4L314.5 114.9L318.8 113.7M349.4 117.3L345.6 115.1L342.8 111.7M349.4 117.3L354.3 116.0L358.7 113.4M353.5 117.9L349.4 117.3M358.4 117.4L358.7 113.4M408.4 116.1L413.3 113.6L418.5 112.0M408.4 116.1L411.5 113.5L414.2 110.5L417.6 108.2L420.5 105.5M446.9 116.4L446.5 113.4M446.9 116.4L449.5 111.9L451.1 106.8M476.6 117.6L469.4 114.5M34.9 118.2L33.5 120.0M34.9 118.2L36.9 115.3M41.8 119.2L42.6 116.6M41.8 119.2L41.5 114.5M50.3 118.5L52.5 118.6M50.3 118.5L51.0 113.0M54.2 119.8L52.5 118.6M60.2 119.5L59.7 115.6M63.9 118.8L60.2 119.5M180.0 119.6L181.5 117.5M183.2 119.4L181.5 117.5M183.2 119.4L180.0 119.6M184.6 119.8L184.6 116.0M188.1 119.6L184.6 119.8M197.8 119.1L200.3 115.2M197.8 119.1L196.2 113.2M205.0 119.6L200.3 115.2M207.3 118.0L205.0 119.6M212.8 119.7L214.2 122.0M212.8 119.7L212.8 122.7M271.5 118.8L272.7 116.6M285.5 119.2L288.6 117.0M298.2 118.4L302.6 117.3M298.2 118.4L306.0 117.4M360.3 118.6L358.4 117.4M470.1 119.1L469.4 114.5M470.1 119.1L476.6 117.6M474.8 118.6L476.6 117.6M25.7 120.6L31.3 117.3M47.6 120.0L50.3 118.5M51.1 120.3L49.1 120.2M55.8 120.9L56.7 124.6M61.4 121.3L60.2 119.5M65.2 121.4L67.6 121.8M68.3 120.3L65.2 121.4M76.5 121.9L74.2 118.9M80.4 120.2L80.1 117.0M170.4 121.9L167.2 118.6M329.1 121.5L331.7 115.5M34.1 123.9L33.5 120.0M34.1 123.9L34.9 118.2M41.2 123.6L41.8 119.2M43.4 122.8L41.2 123.6M43.4 122.8L41.8 119.2M45.1 122.8L47.6 120.0M49.9 122.7L49.1 120.2M55.0 122.6L56.7 124.6M60.7 123.9L61.4 121.3M171.4 123.9L170.4 121.9M176.6 122.7L180.0 119.6M184.7 123.1L184.6 119.8M201.3 122.8L204.9 120.7M201.3 122.8L205.0 119.6M208.3 122.1L204.9 120.7M264.7 122.6L267.2 117.6M316.9 122.4L318.1 118.1L318.8 113.7M316.9 122.4L318.7 117.7L320.3 112.9M320.5 122.1L316.9 122.4M355.7 123.7L353.5 117.9M355.7 123.7L358.4 117.4M415.5 122.3L412.3 118.8L408.4 116.1M415.5 122.3L417.3 117.3L418.5 112.0M482.7 123.2L479.2 120.9L476.6 117.6M482.7 123.2L479.2 120.2L474.8 118.6M33.2 125.4L33.5 120.0M50.7 125.3L49.9 122.7M50.7 125.3L46.9 126.6M63.0 124.1L60.7 123.9M63.0 124.1L61.4 121.3M65.5 125.7L64.7 128.4M65.5 125.7L68.1 124.4M73.4 124.8L75.5 122.4M73.4 124.8L76.5 121.9M192.5 124.8L186.5 127.2M217.9 125.3L214.2 122.0M231.3 125.4L226.8 125.0M269.3 125.7L264.7 122.6M283.9 124.2L285.5 119.2M329.3 124.7L329.1 121.5M329.3 124.7L325.1 122.8L320.5 122.1M338.6 125.7L333.9 125.9L329.3 124.7M338.6 125.7L334.2 122.8L329.1 121.5M37.5 126.9L34.1 123.9M37.5 126.9L33.2 125.4M39.1 127.9L41.2 123.6M55.3 127.3L55.3 129.9M55.3 127.3L56.7 124.6M58.6 126.7L59.2 124.2M58.6 126.7L56.7 124.6M67.5 126.4L68.1 124.4M70.6 127.1L67.5 126.4M151.6 126.1L156.2 129.5L161.6 131.4M155.2 127.4L151.6 126.1M155.2 127.4L161.6 131.4M194.9 126.8L192.5 124.8M210.0 127.9L206.6 131.5M210.0 127.9L212.8 122.7M213.8 126.5L212.8 122.7M216.6 127.1L217.9 125.3M261.9 127.6L264.7 122.6M261.9 127.6L269.3 125.7M280.9 126.4L283.9 124.2M287.4 127.9L283.9 124.2M343.0 126.0L338.6 125.7M408.3 126.3L411.8 124.1L415.5 122.3M408.3 126.3L408.3 121.2L408.4 116.1M643.5 126.2L639.6 124.0L635.6 122.1L631.5 120.6L627.5 118.9L623.1 117.8M643.5 126.2L643.6 130.6L643.3 135.0L644.0 139.4L643.4 143.8L644.2 148.2L644.6 152.6M15.0 129.7L11.0 136.0M15.0 129.7L20.7 134.6M25.0 129.8L27.6 128.8M32.3 129.5L33.2 125.4M32.3 129.5L27.6 128.8M40.2 129.8L39.1 127.9M49.9 128.6L50.7 125.3M49.9 128.6L46.9 126.6M52.3 128.5L49.9 128.6M52.3 128.5L55.3 127.3M62.9 128.9L65.5 125.7M74.3 128.1L73.4 124.8M174.6 128.6L170.4 129.0M174.6 128.6L171.4 123.9M177.1 128.5L174.6 128.6M177.1 128.5L180.5 127.9M196.6 129.8L194.9 126.8M196.6 129.8L192.5 124.8M218.0 128.6L216.6 127.1M285.1 129.0L287.4 127.9M304.4 129.8L308.7 131.3M304.4 129.8L299.0 131.0M360.6 129.3L355.7 123.7M32.7 131.2L27.6 128.8M37.1 131.6L40.2 129.8M41.6 131.2L40.2 129.8M46.2 130.6L44.6 129.4M60.5 130.2L58.3 129.9M64.0 130.4L64.7 128.4M145.0 130.2L151.6 126.1M145.0 130.2L150.0 128.4L155.2 127.4M193.3 131.7L196.6 129.8M227.0 130.3L226.2 134.7M228.1 131.7L226.2 134.7M233.0 130.1L231.3 125.4M313.4 131.0L308.7 131.3M313.4 131.0L308.9 130.3L304.4 129.8M367.5 130.5L370.0 129.9M371.6 131.2L370.0 129.9M458.0 130.7L453.3 132.2L448.9 134.6M458.0 130.7L457.0 124.9L457.3 119.1M33.6 133.9L32.7 131.2M35.7 132.2L33.6 133.9M39.8 132.4L41.6 131.2M42.9 132.9L41.6 131.2M42.9 132.9L44.0 130.6M48.3 133.1L49.0 135.2M48.3 133.1L46.2 130.6M51.4 132.4L53.6 131.4M51.4 132.4L53.1 130.2M55.5 133.8L54.3 131.9M55.5 133.8L53.6 131.4M57.5 133.2L55.5 133.8M57.5 133.2L60.1 135.0M71.8 133.7L69.3 131.2M149.6 133.3L145.0 130.2M149.6 133.3L156.3 136.6M165.3 133.5L163.4 134.8M212.3 132.3L210.0 127.9M258.7 132.9L261.9 127.6M335.0 132.9L337.4 129.6L338.6 125.7M358.1 134.0L360.6 129.3M358.1 134.0L362.7 132.1L367.5 130.5M454.8 132.4L458.0 130.7M454.8 132.4L448.9 134.6M634.7 133.6L639.2 130.0L643.5 126.2M634.7 133.6L631.4 129.9L629.0 125.6L626.4 121.5L623.1 117.8M12.0 136.0L15.0 129.7M42.1 134.3L39.8 132.4M46.7 135.0L49.0 135.2M46.7 135.0L48.3 133.1M52.4 134.8L51.4 132.4M60.1 135.5L57.5 133.2M64.9 134.7L64.0 130.4M72.3 135.6L71.0 138.4M77.5 135.6L72.3 135.6M77.5 135.6L71.8 133.7M158.8 135.2L156.3 136.6M171.4 134.3L166.9 134.3M171.4 134.3L170.4 129.0M188.2 135.4L191.2 137.7M197.9 135.9L196.6 129.8M241.1 135.0L237.1 132.4L233.0 130.1M284.2 135.8L285.1 129.0M284.2 135.8L286.2 132.0L287.4 127.9M294.9 134.6L297.1 132.2M351.7 135.4L358.1 134.0M351.7 135.4L349.5 139.2L348.5 143.6M364.1 134.4L367.5 130.5M364.1 134.4L358.1 134.0M403.1 134.5L405.2 130.1L408.3 126.3M486.7 135.1L484.1 139.6M28.1 137.9L33.6 133.9M28.1 137.9L30.1 134.4L32.7 131.2M32.4 136.5L33.6 133.9M45.6 137.0L46.7 135.0M52.0 137.9L52.4 134.8M57.4 136.8L60.1 135.5M61.9 136.1L60.1 135.0M67.2 136.2L64.9 134.7M70.8 137.7L72.3 135.6M79.3 138.0L77.5 135.6M189.6 137.7L188.2 135.4M272.8 137.5L274.0 139.6M403.9 136.9L403.1 134.5M467.3 137.9L462.3 134.7L458.0 130.7M467.3 137.9L463.3 135.8L459.2 133.7L454.8 132.4M626.9 136.4L631.0 135.7L634.7 133.6M685.0 137.9L690.2 138.8M685.0 137.9L682.1 134.3L679.7 130.5L678.7 125.9L676.5 122.0L674.2 118.0L671.8 114.2M35.1 139.2L32.4 136.5M35.1 139.2L33.6 133.9M45.4 139.5L45.6 137.0M48.7 138.1L47.0 139.6M48.7 138.1L49.0 135.2M60.6 138.1L61.9 136.1M60.6 138.1L60.1 135.5M88.8 139.5L84.0 139.3L79.3 138.0M145.0 139.8L149.6 133.3M145.0 139.8L147.0 143.8L148.8 147.8M148.1 138.1L145.0 139.8M160.9 139.3L159.3 136.1M168.9 139.1L172.3 141.0M168.9 139.1L167.2 143.8M171.0 138.5L168.9 139.1M171.0 138.5L172.3 141.0M186.4 138.3L184.7 136.9M186.4 138.3L189.6 137.7M205.8 139.0L203.8 132.8M208.3 138.3L205.8 139.0M208.3 138.3L206.6 131.5M229.2 139.3L228.8 137.0M304.0 138.1L302.0 135.5M316.4 139.9L313.9 146.4M316.4 139.9L312.0 145.7M376.3 140.0L379.6 137.3L382.6 134.3M376.3 140.0L373.3 136.0L371.6 131.2M380.6 139.9L376.3 140.0M31.2 141.0L35.1 139.2M31.2 141.0L28.1 137.9M62.9 140.4L60.6 138.1M128.0 141.1L132.3 139.7L135.9 136.8M128.0 141.1L132.2 144.1L135.9 147.6M146.3 140.1L148.1 138.1M148.3 140.4L148.1 138.1M178.1 140.7L173.3 142.8M202.0 141.8L205.8 139.0M202.0 141.8L197.9 135.9M214.3 140.1L208.3 138.3M219.1 140.0L214.3 140.1M272.0 140.2L274.0 139.6M272.0 140.2L272.8 137.5M285.2 140.6L284.2 135.8M285.2 140.6L279.7 139.3L274.0 139.6M383.9 140.5L380.6 139.9M383.9 140.5L382.6 134.3M416.6 140.3L417.6 146.3M416.6 140.3L412.4 138.8L408.4 137.0L403.9 136.9M466.6 140.3L467.3 137.9M466.6 140.3L464.2 136.7L461.3 133.5L458.0 130.7M486.4 141.8L484.1 139.6M486.4 141.8L486.7 135.1M22.6 143.8L25.5 141.0L28.1 137.9M50.1 142.5L49.8 146.4M138.9 142.0L135.9 136.8M181.2 143.7L180.2 147.8M181.2 143.7L178.1 140.7M202.1 142.5L205.8 139.0M220.0 143.7L219.1 140.0M223.9 143.1L220.0 143.7M223.9 143.1L219.1 140.0M225.5 142.1L229.2 139.3M228.7 143.0L225.5 142.1M350.4 143.7L351.8 139.6L351.7 135.4M354.6 143.4L350.4 143.7M442.6 143.8L445.8 139.2L448.9 134.6M45.6 144.0L45.4 139.5M51.5 144.7L49.8 146.4M51.5 144.7L50.1 142.5M56.0 145.5L51.5 144.7M150.6 145.7L148.8 147.8M152.7 144.4L153.8 142.5M152.7 144.4L150.6 145.7M162.8 144.5L165.0 146.8M162.8 144.5L167.1 143.4M164.9 144.3L162.8 144.5M164.9 144.3L167.2 143.8M176.2 145.9L173.3 142.8M186.9 145.1L181.2 143.7M186.9 145.1L186.4 138.3M194.1 145.1L196.4 149.8M201.3 144.3L202.1 142.5M209.0 144.1L208.3 138.3M213.3 145.4L209.0 144.1M213.3 145.4L214.3 140.1M226.0 144.5L225.5 142.1M226.0 144.5L223.9 143.1M252.4 145.0L254.7 141.0L256.1 136.6L258.7 132.9M296.4 145.8L299.9 141.7L304.0 138.1M318.3 145.8L313.9 146.4M318.3 145.8L316.4 139.9M362.7 145.8L363.9 148.6M362.7 145.8L366.9 146.0M408.2 144.8L405.8 141.0L403.9 136.9M408.2 144.8L412.6 143.0L416.6 140.3M427.2 144.4L422.6 146.2L417.6 146.3M527.8 145.9L523.2 146.3L518.6 146.4L514.3 148.2L509.8 149.1M587.9 144.6L587.5 140.4L587.7 136.2L587.3 132.0L587.1 127.8L585.9 123.7L584.7 119.5L585.4 115.2L584.5 111.1M19.6 146.9L22.6 143.8M21.8 146.2L19.6 146.9M21.8 146.2L22.6 143.8M39.4 147.7L35.7 151.3M39.4 147.7L45.8 145.2M68.3 146.4L63.8 148.0M73.0 147.1L68.3 146.4M73.0 147.1L71.3 141.8M162.8 146.1L165.0 146.8M172.5 146.9L176.2 145.9M172.5 146.9L173.3 142.8M187.2 146.2L181.2 143.7M222.6 146.1L223.9 143.1M222.6 146.1L220.0 143.7M227.6 147.5L228.6 149.8M235.2 147.5L237.4 144.1M235.2 147.5L228.6 149.8M308.0 148.0L312.0 145.7M321.1 146.6L318.3 145.8M356.3 146.5L354.6 143.4M395.8 146.7L399.9 146.2L404.2 146.3L408.2 144.8M482.0 147.9L486.4 141.8M45.2 149.7L45.8 145.2M45.2 149.7L49.8 146.4M159.7 148.4L162.8 146.1M206.4 148.6L209.0 144.1M212.4 148.5L213.3 145.4M234.1 149.3L235.2 147.5M234.1 149.3L228.6 149.8M295.5 148.1L296.4 145.8M427.5 149.4L427.2 144.4M427.5 149.4L426.7 153.7L424.3 157.5M451.3 148.9L449.4 156.4M477.7 148.7L482.0 147.9M477.7 148.7L481.9 145.0L486.4 141.8M743.6 148.4L740.3 145.4L736.9 142.7L734.2 139.2L730.6 136.7L727.7 133.3L723.7 131.3L720.0 128.9L717.4 125.2M31.8 150.7L35.7 151.3M36.6 151.2L39.4 147.7M148.1 150.1L148.8 147.8M148.1 150.1L151.0 151.3M211.8 151.3L212.4 148.5M221.1 151.1L224.7 149.9M293.1 151.3L295.5 148.1M293.1 151.3L296.4 145.8M315.9 151.2L313.9 146.4M319.9 150.1L321.1 146.6M454.6 151.6L451.3 148.9M64.8 153.8L63.8 148.0M64.8 153.8L65.8 149.8L68.3 146.4M198.8 153.9L195.8 151.7M198.8 153.9L196.4 149.8M214.5 154.0L211.8 151.3M214.5 154.0L219.1 155.7M231.8 152.7L234.1 149.3M231.8 152.7L228.6 149.8M234.3 153.5L231.8 152.7M267.3 152.9L272.8 155.7M267.3 152.9L274.7 150.1M311.2 153.6L315.9 151.2M346.7 152.3L347.1 147.8L348.5 143.6M410.4 153.4L405.3 159.4M410.4 153.4L408.5 149.3L408.2 144.8M44.2 154.4L45.2 149.7M60.1 155.5L64.8 153.8M60.1 155.5L61.3 151.5L63.8 148.0M129.9 154.5L133.2 151.3L135.9 147.6M144.0 154.6L142.9 151.6M144.0 154.6L148.1 150.1M148.7 155.9L150.2 152.4M164.6 154.1L159.8 159.0M164.6 154.1L165.0 146.8M206.2 154.2L208.0 158.7M295.4 155.9L294.5 150.9M295.4 155.9L293.1 151.3M376.4 154.8L373.3 151.8L369.7 149.4L366.9 146.0M376.4 154.8L371.8 154.8L367.3 155.6L362.8 154.9M393.7 155.7L395.3 151.3L395.8 146.7M406.6 154.0L410.4 153.4M413.4 154.8L410.4 153.4M458.8 155.7L454.6 151.6M467.7 155.4L468.8 158.1M467.7 155.4L463.2 154.8L458.8 155.7M133.9 156.5L129.9 154.5M210.1 157.9L208.0 158.7M223.5 157.5L225.1 160.9M250.3 157.9L248.2 161.7L245.6 165.0M377.2 157.0L376.4 154.8M480.0 157.0L478.4 152.9L477.7 148.7M161.6 158.0L159.8 159.0M183.5 158.0L184.6 161.6M188.6 158.1L187.9 160.3M202.8 158.9L207.7 157.9M202.8 158.9L208.0 158.7M205.6 159.5L208.0 158.7M218.8 158.7L219.1 155.7M218.8 158.7L223.5 157.5M227.9 158.6L225.1 160.9M227.9 158.6L223.5 157.5M242.1 159.1L242.2 155.1M242.1 159.1L245.6 165.0M306.0 158.5L311.2 153.6M306.0 158.5L303.8 165.9M312.7 158.5L311.2 153.6M426.4 158.8L424.3 157.5M426.4 158.8L426.3 154.0L427.5 149.4M487.2 158.5L488.9 163.5M520.4 159.4L518.7 166.7M520.4 159.4L515.2 157.7L510.7 154.6M145.9 161.0L148.7 155.9M150.8 161.1L145.9 161.0M160.0 160.1L161.6 158.0M181.1 160.2L183.5 158.0M184.2 161.0L183.5 158.0M215.8 160.1L218.8 158.7M215.8 160.1L219.1 155.7M223.2 161.6L223.5 157.5M347.8 161.5L347.3 156.9L346.7 152.3M443.9 160.3L449.4 156.4M19.0 162.3L21.4 158.4L23.8 154.6M19.0 162.3L18.8 157.1L18.7 152.0L19.6 146.9M136.7 162.4L133.9 156.5M143.1 163.3L145.9 161.0M143.1 163.3L136.7 162.4M145.8 162.9L143.1 163.3M158.2 163.8L160.0 160.1M204.1 164.0L205.4 160.9M206.7 162.8L205.4 160.9M269.3 163.6L271.4 159.8L272.8 155.7M290.5 162.2L295.4 155.9M319.7 162.6L316.4 160.1L312.7 158.5M339.4 162.6L335.8 164.8L333.3 168.2M344.6 162.2L347.8 161.5M344.6 162.2L339.4 162.6M351.0 163.4L347.8 161.5M366.5 162.7L365.1 158.6L362.8 154.9M369.8 162.3L366.5 162.7M369.8 162.3L373.5 159.6L377.2 157.0M388.7 162.4L384.8 169.4M463.2 162.1L468.8 158.1M463.2 162.1L458.8 155.7M503.8 162.8L507.9 159.2L510.7 154.6M503.8 162.8L500.7 159.7L497.8 156.4L493.8 154.4M517.1 162.8L518.7 166.7M517.1 162.8L520.4 159.4M148.2 164.7L145.8 162.9M150.2 164.2L148.2 164.7M169.1 164.2L165.1 161.4L161.6 158.0M169.1 164.2L164.4 166.1L160.8 169.5M266.4 164.0L269.3 163.6M268.9 165.8L269.3 163.6M280.0 165.3L274.8 163.6L269.3 163.6M280.0 165.3L285.2 163.3L290.5 162.2M311.0 164.8L312.7 158.5M360.0 165.5L366.5 162.7M360.0 165.5L355.7 163.6L351.0 163.4M381.9 165.6L384.8 169.4M381.9 165.6L388.7 162.4M456.6 164.9L463.2 162.1M456.6 164.9L457.8 160.3L458.8 155.7M531.1 165.2L527.6 163.2L523.9 161.6L520.4 159.4M618.8 165.3L622.5 163.5L626.2 161.8L629.8 159.8L633.4 157.8L637.5 156.7L641.3 155.2L644.6 152.6M618.8 165.3L620.7 161.4L621.8 157.3L623.0 153.1L623.1 148.7L623.6 144.4L625.8 140.5L626.9 136.4M156.4 166.7L157.7 165.0M166.0 166.8L169.1 164.2M166.0 166.8L160.8 169.5M181.5 167.4L178.2 172.5M181.5 167.4L184.6 161.6M211.7 167.4L213.1 165.8M211.7 167.4L207.5 172.1M216.0 167.3L213.1 165.8M216.0 167.3L211.7 167.4M235.3 167.4L238.6 169.9L242.0 172.3M235.3 167.4L240.4 165.7L245.6 165.0M252.3 167.2L258.4 167.2M394.9 167.9L392.3 164.6L388.7 162.4M399.5 167.9L394.9 167.9M399.5 167.9L403.0 164.0L405.3 159.4M509.3 167.8L503.8 162.8M509.3 167.8L513.1 165.3L517.1 162.8M191.2 169.2L189.6 161.8M191.2 169.2L189.7 164.7L187.9 160.3M225.9 169.2L225.2 165.2L223.2 161.6M225.9 169.2L224.7 165.1L225.1 160.9M230.4 169.8L225.9 169.2M260.6 169.3L258.4 167.2M271.4 168.2L268.9 165.8M360.2 168.2L360.0 165.5M360.2 168.2L353.9 172.9M455.5 169.9L456.6 164.9M195.4 171.0L191.2 169.2M195.4 171.0L203.0 173.1M207.3 170.8L205.5 174.9M256.1 170.5L258.4 167.2M267.5 172.0L271.4 168.2M276.3 171.3L271.4 168.2M276.3 171.3L280.0 165.3M304.5 170.3L307.4 173.2M304.5 170.3L303.8 165.9M306.6 171.1L307.4 173.2M354.4 170.2L353.9 172.9M510.9 171.1L509.3 167.8M510.9 171.1L514.6 168.5L518.7 166.7M112.0 172.9L116.7 172.5L121.4 173.2L126.2 172.9M112.0 172.9L115.7 169.8L118.9 166.1L122.9 163.3M129.8 173.1L126.2 172.9M156.5 172.9L160.8 169.5M156.5 172.9L156.4 166.7M174.3 174.0L178.2 172.5M174.3 174.0L172.3 177.9L170.1 181.8M187.7 172.5L191.2 169.2M222.4 173.9L225.9 169.2M244.1 172.7L242.0 172.3M275.4 174.0L276.3 171.3M318.0 172.1L319.3 167.4L319.7 162.6M318.0 172.1L314.8 168.2L311.0 164.8M145.6 174.4L147.5 169.7L148.2 164.7M145.6 174.4L151.1 173.6L156.5 172.9M169.6 174.9L174.3 174.0M169.6 174.9L170.1 181.8M181.8 176.0L178.2 172.5M181.8 176.0L187.7 172.5M182.6 174.1L181.8 176.0M199.6 175.4L200.8 178.3M207.5 174.8L205.5 174.9M234.4 175.5L228.7 179.3M234.4 175.5L230.4 169.8M279.8 175.9L275.4 174.0M342.0 174.4L337.3 171.8L333.3 168.2M349.5 174.3L353.9 172.9M349.5 174.3L354.4 170.2M483.7 174.4L485.5 170.8L486.9 167.0L488.9 163.5M483.7 174.4L485.3 170.5L485.9 166.5L486.7 162.5L487.2 158.5M789.1 175.2L784.8 176.8L780.5 178.5L775.8 178.5M179.0 176.2L181.8 176.0M196.9 176.6L199.6 175.4M266.1 177.4L267.5 172.0M268.4 176.4L266.1 177.4M327.2 176.5L322.4 174.8L318.0 172.1M364.4 176.5L367.4 174.9M367.9 177.5L367.4 174.9M367.9 177.5L364.4 176.5M445.9 176.3L451.0 173.5L455.5 169.9M152.8 179.0L156.5 172.9M152.8 179.0L155.8 176.2L158.5 173.1M169.8 178.1L169.6 174.9M185.4 178.3L181.8 176.0M185.4 178.3L182.6 174.1M221.4 178.8L222.4 173.9M221.4 178.8L228.7 179.3M225.7 179.8L228.7 179.3M225.7 179.8L221.4 178.8M255.3 179.6L256.0 185.1M255.3 179.6L252.0 182.6L249.8 186.5M441.0 179.5L445.9 176.3M96.7 180.4L96.2 175.7L95.7 171.0M96.7 180.4L100.2 178.0L104.2 176.4L107.8 174.2L112.0 172.9M125.4 180.2L126.2 172.9M178.6 180.0L179.0 176.2M201.3 181.1L200.8 178.3M223.8 181.0L225.7 179.8M223.8 181.0L221.4 178.8M242.6 181.8L246.1 184.3L249.8 186.5M329.6 180.2L327.2 176.5M521.3 181.8L518.7 180.6M521.3 181.8L517.3 178.8L514.4 174.7L510.9 171.1M10.7 183.1L12.4 187.6L15.5 191.4L17.1 196.0L19.3 200.3M182.1 182.7L178.6 180.0M182.1 182.7L185.4 178.3M200.1 183.9L201.3 181.1M355.2 183.0L355.2 177.8L353.9 172.9M388.5 183.7L387.1 187.2M388.5 183.7L386.8 179.1L385.5 174.3L384.8 169.4M424.8 182.6L425.9 180.1M424.8 182.6L429.0 182.5L432.9 180.9L436.9 180.1L441.0 179.5M473.5 182.2L468.7 180.9L464.3 178.7M270.9 184.1L273.4 182.8M272.4 185.0L273.4 182.8M346.8 184.7L351.0 183.6L355.2 183.0M346.8 184.7L348.0 179.4L349.5 174.3M419.2 185.1L424.8 182.6M488.7 184.8L485.6 179.9L483.7 174.4M215.0 187.8L213.3 180.0M215.0 187.8L218.6 183.6L221.4 178.8M233.9 187.5L231.1 183.5L228.7 179.3M233.9 187.5L238.0 184.2L242.6 181.8M275.8 186.7L272.4 185.0M275.8 186.7L273.4 182.8M280.9 187.9L279.7 190.3M340.6 186.8L346.8 184.7M456.0 187.1L460.1 182.9L464.3 178.7M165.8 190.0L162.7 193.4L160.0 197.0M165.8 190.0L168.3 186.0L170.1 181.8M223.6 188.0L223.8 181.0M258.9 188.2L256.0 185.1M508.3 189.9L511.5 186.5L514.8 183.3L518.7 180.6M508.3 189.9L512.6 187.1L517.0 184.5L521.3 181.8M177.7 191.7L181.2 197.9M253.0 191.6L249.8 186.5M253.0 191.6L258.9 188.2M262.5 190.0L258.9 188.2M262.5 190.0L259.1 187.8L256.0 185.1M293.5 190.5L290.4 194.4L287.9 198.7M293.5 190.5L289.3 189.5L285.2 188.3L280.9 187.9M332.5 191.2L336.2 188.3L340.6 186.8M361.2 191.6L357.9 187.5L355.2 183.0M361.2 191.6L363.0 186.7L362.8 181.5L364.4 176.5M386.4 191.8L387.1 187.2M568.4 190.9L571.8 193.5L575.1 196.0L577.6 199.4M200.8 193.9L203.2 197.2M200.8 193.9L200.7 188.6M244.3 192.5L245.7 194.6M244.3 192.5L247.3 189.8L249.8 186.5M517.3 192.3L512.8 191.3L508.3 189.9M517.3 192.3L519.6 187.1L521.3 181.8M536.2 195.5L531.5 194.4L526.8 193.5L522.2 192.2L517.3 192.3M228.3 197.0L226.0 192.5L223.6 188.0M228.3 197.0L230.9 192.1L233.9 187.5M741.4 197.3L743.8 201.2L746.5 204.8L748.4 208.9L751.0 212.6L753.5 216.3L755.9 220.1L759.5 223.0M188.3 198.7L184.9 198.8M201.7 199.4L203.2 197.2M205.0 199.9L203.2 197.2M230.0 198.8L228.3 197.0M230.0 198.8L231.9 195.2L232.7 191.3L233.9 187.5M258.2 199.1L259.2 203.1L259.0 207.2M258.2 199.1L255.0 195.7L253.0 191.6M304.0 199.4L300.5 196.4L297.6 192.8L293.5 190.5M770.7 199.8L772.4 195.8L773.8 191.6L773.5 187.0L775.0 182.8L775.8 178.5M770.7 199.8L768.4 203.5L766.6 207.4L765.2 211.5L763.3 215.3L762.1 219.5L759.5 223.0M254.9 200.7L258.2 199.1M275.3 201.9L275.9 206.0M275.3 201.9L276.4 197.9L277.3 193.8L279.7 190.3M321.1 200.5L321.4 196.3L321.7 192.1L321.3 187.9M382.7 200.8L384.4 196.2L386.4 191.8M388.4 201.1L382.7 200.8M111.5 203.7L109.6 207.5L107.9 211.3L107.6 215.5M199.1 202.5L201.7 199.4M261.8 203.1L259.0 207.2M261.8 203.1L258.2 199.1M263.4 203.0L259.0 207.2M270.5 203.5L275.3 201.9M270.5 203.5L275.9 206.0M273.7 203.5L275.3 201.9M217.4 205.9L213.4 203.5L209.5 201.0L205.0 199.9M217.4 205.9L221.1 203.0L224.9 200.2L228.3 197.0M229.2 204.1L230.0 198.8M265.6 205.1L263.4 203.0M267.9 204.6L265.6 205.1M267.9 204.6L270.5 203.5M272.4 205.2L273.7 203.5M464.5 204.7L462.1 200.5L460.3 195.9L457.6 191.8L456.0 187.1M714.6 205.3L719.0 204.0L723.6 202.9L728.2 201.9L732.7 200.8L736.9 198.6L741.4 197.3M714.6 205.3L713.4 201.2L713.1 197.1L712.9 193.0L712.4 188.9L712.5 184.8L711.5 180.7L710.8 176.7L711.7 172.4M143.4 207.0L148.2 208.2L152.7 210.1M143.4 207.0L141.0 202.8L138.8 198.4M198.9 207.9L199.1 202.5M198.9 207.9L200.9 203.8L201.7 199.4M210.3 206.4L217.4 205.9M210.3 206.4L207.1 203.6L205.0 199.9M230.7 206.8L229.2 204.1M247.5 206.5L251.2 209.0L254.0 212.4M9.7 208.8L12.6 205.6L16.3 203.4L19.3 200.3M227.7 208.4L230.7 206.8M227.7 208.4L229.2 204.1M249.3 209.4L247.5 206.5M249.3 209.4L254.0 212.4M294.9 208.1L291.6 203.3L287.9 198.7M222.9 211.8L227.7 208.4M222.9 211.8L220.6 208.4L217.4 205.9M262.4 211.2L261.1 209.1M600.2 210.5L599.5 206.2L599.4 201.8L598.0 197.6L598.4 193.1L597.8 188.8M90.2 213.2L94.5 214.3L98.9 214.3L103.2 215.3L107.6 215.5M90.2 213.2L94.6 211.5L98.7 209.3L103.0 207.5L107.4 205.9L111.5 203.7M214.6 212.9L211.4 208.0M218.3 213.3L214.6 212.9M310.2 212.3L307.4 208.3L306.5 203.5L304.0 199.4M310.2 212.3L305.1 211.0L300.2 208.9L294.9 208.1M179.7 214.7L180.7 210.6L181.7 206.5L184.1 202.9L184.9 198.8M179.7 214.7L179.7 210.5L181.1 206.4L180.7 202.1L181.2 197.9M237.3 217.0L237.7 222.4L236.3 227.7M237.3 217.0L242.6 215.8L248.1 216.2M249.5 217.9L248.1 216.2M275.5 217.8L274.8 212.1L273.8 206.4M284.0 216.7L279.8 217.8L275.5 217.8M284.0 216.7L281.2 213.2L278.6 209.5L275.9 206.0M407.1 216.3L407.6 211.3L407.9 206.2L408.8 201.2M195.7 218.6L197.2 213.2L198.9 207.9M195.7 218.6L196.7 214.6L197.2 210.5L198.0 206.5L199.1 202.5M213.0 218.4L214.6 212.9M213.0 218.4L218.3 213.3M234.9 219.3L237.3 217.0M303.1 219.9L307.0 216.4L310.2 212.3M303.1 219.9L300.4 215.9L298.0 211.8L294.9 208.1M122.8 221.9L120.4 221.4M130.4 220.6L122.8 221.9M130.4 220.6L125.4 220.7L120.4 221.4M197.0 221.4L195.7 218.6M197.0 221.4L196.8 216.8L198.3 212.4L198.9 207.9M270.5 220.7L275.5 217.8M297.9 220.4L303.1 219.9M439.8 221.9L443.7 219.9L446.9 217.0L450.8 215.1L453.9 212.0L457.5 209.6L461.0 207.2L464.5 204.7M439.8 221.9L435.8 220.7L431.8 219.5L427.5 220.2L423.5 219.0L419.3 218.7L415.3 217.4L411.3 216.3L407.1 216.3M608.6 221.8L606.5 217.5L603.3 214.1L600.2 210.5M722.8 221.3L720.7 217.3L718.6 213.3L716.1 209.5L714.6 205.3M92.0 223.5L90.2 218.5L90.2 213.2M99.8 223.9L92.0 223.5M99.8 223.9L104.3 220.3L107.6 215.5M172.6 223.0L176.5 219.2L179.7 214.7M172.6 223.0L177.3 222.8L181.8 221.0L186.3 219.6L191.0 219.0L195.7 218.6M182.2 222.8L180.4 218.9L179.7 214.7M182.2 222.8L177.4 222.4L172.6 223.0M289.0 223.7L286.4 220.2L284.0 216.7M289.0 223.7L293.2 221.6L297.9 220.4M309.4 224.0L303.1 219.9M509.8 223.2L506.9 227.2M108.9 225.9L104.2 225.7L99.8 223.9M255.0 224.9L251.5 221.9L249.5 217.9M255.0 224.9L253.6 220.2L251.4 215.9M260.5 225.0L255.0 224.9M260.5 225.0L265.3 222.4L270.5 220.7M272.2 225.8L270.5 220.7M290.7 225.7L289.0 223.7M114.2 227.1L108.9 225.9M207.7 227.1L211.6 227.3M207.7 227.1L210.3 222.8L213.0 218.4M264.7 227.1L260.5 225.0M285.0 226.9L289.0 223.7M285.0 226.9L290.7 225.7M305.5 227.2L309.4 224.0M19.5 228.0L21.0 232.4L23.6 236.2L25.2 240.5L27.8 244.3M120.8 229.2L117.9 233.4M120.8 229.2L114.2 227.1M171.3 228.1L172.6 223.0M251.5 229.0L255.0 224.9M251.5 229.0L251.2 236.4M258.6 229.9L260.5 225.0M261.4 229.1L258.6 229.9M298.2 229.2L305.5 227.2M298.2 229.2L294.2 227.9L290.7 225.7M309.5 228.8L305.5 227.2M70.1 231.5L74.7 230.6L79.0 228.7L83.0 226.2L87.6 225.0L92.0 223.5M70.1 231.5L73.7 233.7L76.6 236.8L80.1 239.0L83.4 241.6L87.1 243.5L90.5 245.9M233.8 231.0L236.3 227.7M289.3 231.6L290.7 225.7M289.3 231.6L293.7 236.2M41.2 233.0L38.1 236.2L34.1 238.2L31.0 241.3L27.8 244.3M115.7 233.1L117.9 233.4M115.7 233.1L114.2 227.1M117.7 233.6L115.7 233.1M121.4 232.4L120.8 229.2M224.1 232.6L228.9 231.5L233.8 231.0M224.1 232.6L227.2 236.6L229.9 240.8M226.4 233.8L224.1 232.6M235.5 232.9L233.8 231.0M287.5 234.0L289.3 231.6M461.0 232.6L456.4 231.2L452.7 227.9L448.1 226.6L444.2 223.8L439.8 221.9M461.0 232.6L461.0 228.6L461.2 224.5L462.4 220.6L462.9 216.6L463.6 212.7L463.3 208.6L464.5 204.7M108.3 235.2L115.7 233.1M108.3 235.2L108.9 230.6L108.9 225.9M200.2 235.3L203.7 231.1L207.7 227.1M272.0 236.0L272.0 240.1M459.0 234.8L461.0 232.6M33.3 236.1L37.4 234.9L41.2 233.0M71.4 236.1L70.1 231.5M213.5 236.5L216.2 239.9L217.4 244.1M230.1 236.7L229.9 240.8M267.3 236.8L272.0 236.0M267.3 236.8L272.0 240.1M299.6 237.4L297.2 241.2M434.5 237.0L435.8 233.2L436.7 229.3L437.5 225.3L439.8 221.9M233.2 239.6L229.9 240.8M233.2 239.6L230.1 236.7M285.4 239.3L287.5 242.6M319.9 238.5L316.9 234.7L312.9 232.1L309.5 228.8M319.9 238.5L321.4 233.6L323.9 229.2L325.1 224.2M148.4 240.3L148.2 235.3L147.6 230.3L147.7 225.3M168.9 241.0L165.8 246.0L163.6 251.4M255.4 240.6L252.1 237.4M255.4 240.6L251.2 236.4M41.5 243.0L41.6 238.0L41.2 233.0M124.4 243.9L122.1 243.1M129.5 243.3L124.4 243.9M129.5 243.3L122.8 243.5M198.8 242.8L200.2 235.3M198.8 242.8L197.4 248.0L197.8 253.4M256.5 242.7L255.4 240.6M260.1 242.3L261.3 245.0M260.1 242.3L256.5 242.7M265.6 242.8L261.3 245.0M265.6 242.8L260.1 242.3M270.6 244.0L272.0 240.1M113.3 245.0L118.4 244.1M178.5 244.2L174.0 241.8L168.9 241.0M178.5 244.2L178.9 248.3L179.9 252.3L182.1 255.8M250.4 245.1L256.5 242.7M291.3 244.1L287.5 242.6M291.3 244.1L297.2 241.2M787.5 244.3L784.0 241.6L780.5 239.0L777.1 236.2L773.6 233.6L769.6 231.5L766.4 228.4L763.4 225.2L759.5 223.0M7.6 246.8L11.6 245.9L15.7 245.8L19.8 246.1L23.7 244.5L27.8 244.3M115.5 246.1L113.3 245.0M115.5 246.1L118.4 244.1M123.3 246.6L122.1 248.5M186.1 246.4L178.5 244.2M186.1 246.4L184.7 251.4L182.1 255.8M207.8 246.0L203.2 244.5L198.8 242.8M209.3 246.2L213.5 245.4L217.4 244.1M226.4 246.3L229.9 240.8M226.4 246.3L221.9 245.2L217.4 244.1M285.3 247.2L287.5 242.6M285.3 247.2L291.3 244.1M419.1 247.6L423.2 245.2L427.1 242.7L430.5 239.4L434.5 237.0M224.4 249.4L226.4 246.3M231.0 248.1L226.4 246.3M239.8 248.6L235.4 247.5L231.0 248.1M276.0 249.5L270.6 244.0M297.3 250.0L294.8 246.5L291.3 244.1M297.3 250.0L297.9 245.6L297.2 241.2M305.1 249.6L297.3 250.0M63.7 251.4L66.1 247.8L67.0 243.5L69.3 239.8L71.4 236.1M120.8 251.1L122.1 248.5M120.8 251.1L123.3 246.6M140.1 251.6L136.5 248.9L133.2 245.8L129.5 243.3M178.2 250.6L178.5 244.2M178.2 250.6L182.1 255.8M301.4 251.7L305.1 249.6M631.2 250.9L628.6 247.8L625.8 244.7L623.4 241.4L621.4 237.7L618.8 234.6L616.2 231.4L613.8 228.1L610.7 225.3L608.6 221.8M729.5 251.3L725.4 249.5L721.3 248.0L716.8 247.7L712.5 246.5L708.2 245.8M729.5 251.3L728.3 247.0L727.6 242.7L726.9 238.4L725.1 234.3L724.9 229.8L723.1 225.7L722.8 221.3M52.8 253.6L58.4 252.9L63.7 251.4M228.9 253.3L225.1 250.4M247.9 252.9L249.9 249.3L250.4 245.1M247.9 252.9L244.0 250.3L239.8 248.6M255.3 252.7L248.5 253.7M324.2 253.7L322.4 248.7L321.0 243.6L319.9 238.5M493.6 252.9L496.0 249.5L498.1 245.9L500.1 242.3L502.1 238.7L504.3 235.2L505.0 230.9L506.9 227.2M493.6 252.9L489.7 254.6L485.5 255.4L481.6 257.2L477.5 258.4L473.4 259.3L469.7 261.7L465.8 263.2M253.6 255.1L255.3 252.7M266.7 255.2L263.9 254.7M266.7 255.2L266.4 259.7L264.7 263.9M276.8 254.7L276.0 249.5M276.8 254.7L282.5 256.1M237.5 257.3L239.0 253.1L239.8 248.6M237.5 257.3L233.3 255.0L228.9 253.3M257.9 256.8L253.6 255.1M257.9 256.8L255.3 252.7M325.5 256.4L324.2 253.7M660.4 256.2L656.2 255.5L652.2 254.2L648.0 253.2L643.7 253.1L639.7 251.7L635.4 251.5L631.2 250.9M254.5 258.3L253.6 255.1M254.5 258.3L257.9 256.8M322.6 258.2L325.5 256.4M782.9 259.1L785.3 254.4L787.0 249.6L787.5 244.3M9.9 261.6L9.5 256.6L7.7 251.8L7.6 246.8M278.6 261.0L282.5 256.1M278.6 261.0L275.0 266.3M280.9 261.2L278.6 261.0M280.9 261.2L282.5 256.1M21.4 262.2L15.7 261.4L9.9 261.6M111.8 264.4L114.4 261.3L115.9 257.5L118.5 254.4L120.8 251.1M111.8 264.4L112.4 259.7L113.4 255.2L113.8 250.5L115.5 246.1M202.7 264.1L200.3 258.7L197.8 253.4M202.7 264.1L205.8 260.7L208.9 257.1L212.7 254.4L216.4 251.6M220.1 264.1L219.5 259.8L217.4 255.8L216.4 251.6M243.4 265.5L240.1 261.7L237.5 257.3M243.4 265.5L244.6 261.4L246.6 257.5L248.5 253.7M76.0 266.3L75.7 274.2M145.9 267.8L149.2 265.4L151.4 261.9L154.4 259.2M610.4 267.5L613.5 264.2L617.4 262.0L621.3 259.8L624.9 257.1L628.0 254.0L631.2 250.9M280.9 268.9L275.0 266.3M280.9 268.9L280.9 261.2M503.9 268.8L500.6 265.3L498.4 261.1L495.4 257.3L493.6 252.9M709.1 268.6L708.1 264.1L708.4 259.5L707.9 255.0L707.2 250.4L708.2 245.8M742.2 268.3L739.0 265.4L737.0 261.6L734.8 257.9L731.6 255.0L729.5 251.3M96.4 270.8L100.5 269.8L104.1 267.5L108.1 266.4L111.8 264.4M96.4 270.8L92.5 269.1L88.4 268.4L84.2 267.8L80.2 266.5L76.0 266.3M212.9 271.8L216.3 267.7L220.1 264.1M216.6 271.1L212.9 271.8M255.8 271.4L259.8 267.2L264.7 263.9M255.8 271.4L255.5 267.0L255.6 262.6L254.5 258.3M281.7 270.3L275.0 266.3M662.7 270.7L661.8 265.9L661.2 261.1L660.4 256.2M662.7 270.7L659.6 267.9L655.8 266.3L651.8 264.8L648.7 261.9L645.1 259.9L641.3 258.2L638.0 255.7L634.9 252.8L631.2 250.9M61.4 272.5L66.2 272.9L70.8 274.2L75.7 274.2M61.4 272.5L57.8 275.7L53.7 278.5L50.2 281.8M165.1 272.6L162.9 270.8M190.7 273.7L194.3 270.0L198.8 267.5L202.7 264.1M190.7 273.7L187.4 277.2L183.5 280.0L179.2 282.4L175.6 285.6M261.9 272.5L255.8 271.4M261.9 272.5L263.9 268.4L264.7 263.9M18.9 274.8L20.2 270.7L21.3 266.5L21.4 262.2M18.9 274.8L15.4 270.7L13.3 265.7L9.9 261.6M205.4 275.0L209.1 273.3L212.9 271.8M205.4 275.0L204.1 269.6L202.7 264.1M307.8 274.9L303.7 272.8L300.2 270.0M318.7 275.8L313.2 275.7L307.8 274.9M724.2 274.3L720.7 272.3L716.7 271.4L712.8 270.1L709.1 268.6M724.2 274.3L728.9 273.3L733.4 272.0L737.7 269.7L742.2 268.3M67.3 277.3L61.4 272.5M186.3 277.2L190.7 273.7M214.4 277.1L212.9 271.8M251.6 276.8L255.8 271.4M251.6 276.8L256.8 274.7L261.9 272.5M259.4 276.3L261.9 272.5M264.3 277.1L259.4 276.3M277.6 277.4L279.3 273.6L281.7 270.3M277.6 277.4L278.9 273.0L280.9 268.9M96.6 278.6L96.4 270.8M96.6 278.6L99.9 276.0L103.4 273.7L106.4 270.8L109.2 267.7L111.8 264.4M204.1 278.3L205.4 275.0M204.1 278.3L209.2 277.1L214.4 277.1M426.3 279.8L427.9 278.5M173.0 282.0L175.6 285.6M240.2 280.2L245.7 277.9L251.6 276.8M240.2 280.2L240.6 275.7L240.7 271.2L242.4 266.8M416.8 281.7L421.4 280.3L426.3 279.8M416.8 281.7L422.4 280.4L427.9 278.5M671.5 280.2L668.6 277.0L665.9 273.6L662.7 270.7M671.5 280.2L669.8 276.1L667.9 272.2L665.2 268.5L663.0 264.7L662.3 260.2L660.4 256.2M303.9 282.2L305.3 278.3L307.8 274.9M498.3 283.5L500.3 278.7L501.7 273.6L503.9 268.8M498.3 283.5L497.2 279.2L496.2 274.9L496.1 270.4L495.0 266.1L494.5 261.7L494.7 257.2L493.6 252.9M642.6 283.3L647.0 281.4L651.1 279.1L655.3 276.8L659.4 274.5L662.7 270.7M664.4 283.9L668.2 282.5L671.5 280.2M131.9 284.1L135.7 280.8M136.1 285.0L131.9 284.1M136.1 285.0L135.7 280.8M189.0 284.6L186.3 277.2M242.1 284.4L240.2 280.2M280.9 285.4L278.6 281.7L277.6 277.4M679.4 285.3L675.9 282.0L671.5 280.2M269.0 287.8L267.0 282.3L264.3 277.1M312.1 286.1L308.2 283.8L303.9 282.2M600.1 286.2L602.3 282.5L603.9 278.6L606.0 274.8L608.4 271.3L610.4 267.5M31.0 289.1L30.0 294.1L27.6 298.7M388.3 288.2L385.7 285.0L382.6 282.4L379.5 279.7L375.9 277.8L372.5 275.5L369.5 272.8M487.0 289.5L490.4 286.9L494.2 284.9L498.3 283.5M721.0 289.4L722.2 284.4L722.6 279.2L724.2 274.3M112.1 290.5L108.6 286.9L104.2 284.7L99.9 282.2L96.6 278.6M112.1 290.5L115.9 288.8L119.7 287.0L123.7 285.7L127.7 284.5L131.9 284.1M156.8 291.1L154.0 285.5M156.8 291.1L155.8 286.8L153.2 283.3L151.5 279.3M383.2 290.3L388.3 288.2M646.7 292.3L645.0 287.6L642.6 283.3M771.7 293.5L769.6 298.3L768.5 303.4L767.0 308.4M771.7 293.5L773.3 289.8L773.9 285.8L775.3 282.0L775.8 277.9L778.2 274.5L778.7 270.4L780.5 266.7L781.3 262.8L782.9 259.1M122.2 294.6L117.0 292.9L112.1 290.5M217.8 295.7L212.7 297.7M508.0 294.4L505.0 290.6L502.2 286.5L498.3 283.5M508.0 294.4L504.0 292.8L499.8 291.6L495.3 291.8L491.0 291.3L487.0 289.5M611.0 294.7L607.4 291.7L604.3 288.4L600.1 286.2M20.8 296.4L27.6 298.7M20.8 296.4L24.3 294.1L27.1 290.9L31.0 289.1M84.5 296.8L90.4 301.5M84.5 296.8L87.5 293.5L89.9 289.9L92.3 286.2L94.0 282.2L96.6 278.6M215.0 297.2L212.7 297.7M255.4 297.8L252.0 300.8M259.4 297.4L255.4 297.8M259.4 297.4L260.6 302.3M287.7 296.3L292.9 293.1M322.9 297.4L328.5 298.7L334.1 299.8M332.5 297.4L334.1 299.8M332.5 297.4L327.7 297.7L322.9 297.4M518.7 296.3L513.3 296.0L508.0 294.4M294.0 298.9L292.9 293.1M294.0 298.9L287.7 296.3M140.7 301.3L140.0 297.1L138.4 293.2L137.5 289.0L136.1 285.0M140.7 301.3L145.2 299.5L148.6 296.0L153.0 293.9L156.8 291.1M208.8 301.3L212.7 297.7M208.8 301.3L215.0 297.2M260.6 300.4L259.4 297.4M283.4 301.5L287.7 296.3M283.4 301.5L288.9 301.1L294.0 298.9M54.9 303.8L54.6 299.2L53.8 294.8L52.0 290.6L51.3 286.1L50.2 281.8M56.3 302.4L54.9 303.8M56.3 302.4L55.0 298.3L53.7 294.2L52.2 290.2L50.5 286.2L50.2 281.8M247.3 303.9L252.0 300.8M247.3 303.9L251.3 300.8L255.4 297.8M269.7 303.4L271.8 307.0L274.5 310.3M269.7 303.4L265.1 302.9L260.6 302.3M272.2 303.2L269.7 303.4M243.1 304.5L247.3 303.9M254.7 305.1L252.0 300.8M66.3 307.6L61.7 304.3L56.3 302.4M151.5 306.6L147.8 304.9L144.2 303.4L140.7 301.3M180.8 306.7L179.9 302.4L179.3 298.1L178.0 294.0L177.1 289.7L175.6 285.6M231.9 307.4L226.8 305.8M235.8 306.9L231.9 307.4M310.3 307.3L313.7 305.2L316.6 302.4L319.6 299.7L322.9 297.4M86.9 309.6L88.2 305.3L90.4 301.5M86.9 309.6L86.2 305.3L85.2 301.1L84.5 296.8M109.0 308.5L109.7 304.0L109.9 299.4L111.3 295.0L112.1 290.5M109.0 308.5L112.0 304.7L115.7 301.7L119.2 298.4L122.2 294.6M247.9 309.8L247.3 303.9M247.9 309.8L243.1 304.5M605.0 310.0L606.3 306.1L608.3 302.4L610.4 298.9L611.0 294.7M66.2 313.5L66.3 307.6M83.5 312.7L86.9 309.6M218.0 312.3L222.2 308.9L226.8 305.8M218.0 312.3L214.3 309.1L211.8 305.0L208.8 301.3M228.3 314.4L231.9 307.4M544.7 315.7L541.1 313.6L537.9 311.2L534.8 308.5L532.1 305.5L528.3 303.8L525.0 301.4L521.9 298.8L518.7 296.3M632.7 315.9L637.2 317.1L641.9 317.0L646.4 317.9L650.8 319.5M62.3 317.9L66.2 313.5M69.6 317.1L66.2 313.5M214.5 316.4L218.0 312.3M281.5 316.4L282.4 323.9M281.5 316.4L277.6 313.9L274.5 310.3M177.4 319.1L179.2 315.2L179.9 310.9L180.8 306.7M177.4 319.1L173.6 317.4L170.3 315.0L166.7 312.8L162.7 311.8L159.1 309.7L155.1 308.7L151.5 306.6M297.0 318.1L291.8 317.8L286.7 317.1L281.5 316.4M307.1 318.5L302.0 318.5L297.0 318.1M307.1 318.5L308.4 312.8L310.3 307.3M755.8 318.4L759.2 314.7L763.3 311.7L767.0 308.4M8.1 320.3L9.9 316.1L12.6 312.4L14.9 308.6L16.4 304.2L19.3 300.7L20.8 296.4M8.1 320.3L11.4 317.7L13.7 314.1L17.1 311.5L20.2 308.8L22.3 305.1L24.6 301.6L27.6 298.7M524.9 321.5L528.7 319.8L532.9 319.3L536.8 318.2L540.7 316.8L544.7 315.7M265.7 324.5L268.3 321.2L269.7 317.1L271.6 313.4L274.5 310.3M36.1 327.5L40.2 325.3L44.6 323.7L49.4 323.2L53.6 321.2L57.7 318.9L62.3 317.9M180.1 327.3L178.7 323.2L177.4 319.1M180.1 327.3L180.1 323.2L179.7 319.0L181.1 314.9L180.9 310.8L180.8 306.7M307.2 326.5L306.5 322.5L307.1 318.5M307.2 326.5L303.7 323.9L299.8 321.6L297.0 318.1M399.1 326.3L402.3 323.5L406.0 321.3L409.0 318.3L412.5 315.9L415.7 313.1L418.8 310.2L422.3 307.8M399.1 326.3L402.2 323.6L403.7 319.7L406.2 316.5L408.0 312.8L411.1 310.1L413.5 306.9L415.3 303.2L418.2 300.3L420.8 297.2M596.6 326.8L598.5 322.5L600.1 318.0L601.9 313.7L605.0 310.0M54.7 329.3L56.6 325.1L58.9 321.1L62.3 317.9M290.2 329.8L286.6 326.5L282.4 323.9M290.2 329.8L292.1 325.7L294.9 322.1L297.0 318.1M218.4 330.9L221.8 328.8L225.2 326.5L228.1 323.7M232.0 331.0L230.1 327.4L228.1 323.7M232.0 331.0L227.5 330.2L222.9 329.7L218.4 330.9M465.4 331.7L461.9 331.7M537.1 330.2L533.3 326.9L528.7 324.8L524.9 321.5M537.1 330.2L539.6 326.9L541.2 323.1L542.9 319.4L544.7 315.7M173.0 332.7L176.0 329.4L180.1 327.3M571.1 332.8L575.3 331.4L579.4 330.0L583.7 329.2L588.1 328.9L592.5 328.3L596.6 326.8M78.2 334.7L75.9 330.4L73.6 326.0L70.8 321.9L69.6 317.1M137.4 335.0L135.8 339.8L134.4 344.5L132.3 349.1M235.4 335.6L232.0 331.0M235.4 335.6L232.5 331.9L230.4 327.8L228.1 323.7M319.7 334.1L317.1 336.8M253.3 336.2L256.9 333.7L260.3 331.2L263.6 328.5L265.7 324.5M253.3 336.2L248.9 336.3L244.6 336.1L240.2 336.6L235.8 336.9M523.1 336.9L524.1 331.8L524.1 326.6L524.9 321.5M523.1 336.9L527.9 335.1L532.5 332.6L537.1 330.2M107.6 341.9L111.7 343.4L116.0 343.8L119.9 345.9L123.8 347.5L128.1 348.3L132.3 349.1M224.2 341.2L220.8 336.3L218.4 330.9M584.9 343.5L581.2 341.2L577.7 338.6L574.0 336.2L571.1 332.8M584.9 343.5L587.3 340.2L590.0 337.1L592.0 333.6L594.9 330.6L596.6 326.8M589.2 342.5L584.9 343.5M589.2 342.5L591.4 338.7L592.7 334.5L594.5 330.6L596.6 326.8M9.0 345.8L8.8 341.5L9.5 337.3L8.4 333.0L7.8 328.8L8.1 324.5L8.1 320.3M71.2 344.6L73.6 341.3L76.1 338.1L78.2 334.7M152.7 345.3L149.3 348.8L145.1 351.6M152.7 345.3L152.8 349.9L152.7 354.5L151.5 358.9M174.8 344.8L174.7 340.7L174.3 336.7L173.0 332.7M174.8 344.8L175.6 340.3L176.7 335.8L178.6 331.6L180.1 327.3M522.2 345.3L523.4 341.1L523.1 336.9M522.2 345.3L525.4 342.5L528.7 339.8L531.9 336.9L533.8 332.9L537.1 330.2M100.7 347.3L103.8 344.1L107.6 341.9M307.0 346.5L307.0 340.9M307.0 346.5L309.1 351.7L312.0 356.5M270.4 348.4L272.0 349.7M304.5 348.1L307.0 346.5M304.5 348.1L307.0 340.9M319.6 349.7L315.7 352.9L312.0 356.5M672.1 349.0L676.4 348.2L680.7 347.8L685.1 347.3L689.4 346.8L693.8 346.5L698.1 346.1M672.1 349.0L670.3 345.3L668.1 342.0L665.0 339.2L662.9 335.7L660.6 332.4L658.4 329.0L656.1 325.6L653.8 322.3L650.8 319.5M297.5 350.0L304.5 348.1M175.6 353.5L175.4 349.2L174.8 344.8M175.6 353.5L180.1 354.5L184.8 355.2L189.1 357.2L193.7 357.7M210.0 354.0L205.9 354.6L201.8 355.4L197.8 356.9L193.7 357.7M235.2 352.1L234.9 347.0L235.6 342.0L235.8 336.9M235.2 352.1L231.1 348.9L227.4 345.3L224.2 341.2M295.4 353.0L297.5 350.0M474.4 353.0L473.1 348.5L471.2 344.3L469.9 339.9L467.3 335.9L465.4 331.7M474.4 353.0L472.0 349.7L470.5 345.7L468.9 341.9L465.8 338.9L464.3 335.1L461.9 331.7M148.0 355.4L145.1 351.6M229.1 355.7L235.2 352.1M313.1 354.4L312.0 356.5M313.1 354.4L319.6 349.7M325.9 355.2L322.9 352.3L319.6 349.7M325.9 355.2L326.6 359.4L325.3 363.5L325.5 367.7M145.0 356.5L148.0 355.4M262.8 356.2L270.6 356.2M262.8 356.2L266.6 352.3L270.4 348.4M104.0 358.7L101.5 353.3L100.7 347.3M284.7 359.5L288.1 357.1L292.1 355.7L295.4 353.0M286.8 358.7L284.7 359.5M286.8 358.7L291.2 356.0L295.4 353.0M316.7 359.5L312.0 356.5M152.4 361.9L151.5 358.9M286.0 361.1L284.7 359.5M286.0 361.1L286.8 358.7M291.4 361.2L286.8 358.7M52.1 363.1L55.3 360.1L58.2 356.6L61.8 354.0L65.5 351.5L68.2 347.9L71.2 344.6M61.8 363.4L57.0 363.0L52.1 363.1M724.3 364.0L720.5 361.6L716.9 358.8L713.5 355.7L709.4 353.7L705.7 351.0L701.9 348.7L698.1 346.1M265.5 365.5L262.2 368.4L260.0 372.2M265.5 365.5L264.0 360.9L262.8 356.2M323.9 365.2L325.5 367.7M797.3 365.6L793.9 363.2L790.0 361.8L786.3 360.2L782.6 358.5L779.2 356.2L775.5 354.4L772.3 351.8L768.5 350.2M180.0 367.5L178.0 363.0L177.4 358.1L175.6 353.5M180.0 367.5L183.5 365.0L186.6 362.1L189.7 359.3L193.7 357.7M290.5 367.9L296.8 367.3M71.9 369.7L67.3 365.9L61.8 363.4M71.9 369.7L72.0 375.0L70.1 380.1L70.0 385.5M154.3 369.3L152.4 361.9M154.3 369.3L152.6 364.2L151.5 358.9M314.1 370.0L314.9 364.6L316.7 359.5M314.1 370.0L318.7 366.9L323.9 365.2M504.2 369.2L501.9 364.6L499.8 359.9M46.0 371.5L49.2 367.5L52.1 363.1M264.5 371.4L260.0 372.2M285.5 371.8L290.5 367.9M300.6 370.7L296.8 367.3M305.7 371.9L302.4 371.2M623.2 371.4L627.4 369.3L631.7 367.5L636.5 367.1M165.7 374.0L161.8 372.6L158.1 371.1L154.3 369.3M165.7 374.0L170.2 371.2L174.9 368.9L180.0 367.5M289.5 372.5L285.5 371.8M289.5 372.5L290.5 367.9M295.4 372.3L295.2 368.1M295.4 372.3L296.8 367.3M250.9 374.1L255.3 372.5L260.0 372.2M616.7 375.0L623.2 371.4M58.9 376.7L59.0 381.1L59.1 385.5L58.9 389.9M58.9 376.7L60.7 372.4L60.5 367.8L61.8 363.4M270.5 377.4L267.2 374.7L264.5 371.4M294.2 377.1L295.4 372.3M298.9 376.2L294.2 377.1M312.9 376.8L314.2 371.0M63.3 379.3L58.9 376.7M63.3 379.3L66.7 382.3L70.0 385.5M213.6 378.2L213.7 382.7M213.6 378.2L217.9 379.3L222.1 380.4L226.1 382.4M257.5 378.0L260.0 372.2M257.5 378.0L250.9 374.1M106.9 380.4L106.4 376.1L105.0 371.8L104.8 367.4L104.9 363.0L104.0 358.7M283.1 380.5L283.6 375.9L285.5 371.8M283.1 380.5L285.9 376.2L289.5 372.5M291.3 381.4L294.2 377.1M183.6 385.6L182.7 381.1L180.9 376.7L181.1 371.9L180.0 367.5M295.6 384.8L291.3 381.4M42.2 389.7L46.4 389.7L50.5 390.4L54.7 391.0L58.9 389.9M42.2 389.7L42.3 385.0L44.4 380.7L44.6 376.0L46.0 371.5M50.0 389.4L42.2 389.7M497.8 389.7L499.8 385.9L501.6 381.9L502.7 377.8L504.0 373.6L504.2 369.2M497.8 389.7L497.7 385.5L497.4 381.2L497.7 376.9L498.5 372.7L499.5 368.5L500.4 364.3L499.8 359.9M72.5 390.0L70.0 385.5M72.5 390.0L68.0 389.6L63.5 389.7L58.9 389.9M78.2 392.6L72.5 390.0M78.2 392.6L73.7 389.5L70.0 385.5M103.2 392.3L104.5 388.4L105.8 384.4L106.9 380.4M701.0 393.0L703.0 389.3L705.7 386.2L708.1 382.8L710.7 379.6L713.7 376.7L716.8 373.8L718.8 370.2L721.2 366.8L724.3 364.0M7.7 396.7L8.5 390.7M223.2 397.2L226.4 396.1M509.7 396.0L506.1 393.2L502.0 391.5L497.8 389.7M42.1 399.6L42.4 394.7L42.2 389.7M71.1 400.2L72.3 395.2L72.5 390.0M71.1 400.2L74.9 396.6L78.2 392.6M114.7 400.2L110.4 398.2L106.3 396.0L103.2 392.3M114.7 400.2L110.2 401.3L105.9 402.8L101.8 404.6L98.0 407.3M88.7 405.0L93.5 405.4L98.0 407.3M88.7 405.0L85.5 402.4L83.1 399.1L80.5 396.0L78.2 392.6M237.7 407.1L233.3 404.1L230.2 399.7L226.4 396.1M237.7 407.1L234.4 404.0L230.2 402.5L226.7 399.8L223.2 397.2M249.7 406.6L245.7 407.1L241.7 407.2L237.7 407.1M249.7 406.6L245.5 405.5L242.0 402.9L238.2 401.0L234.1 399.7L230.4 397.6L226.4 396.1M314.6 408.8L317.4 405.6L321.4 403.7L324.4 400.7L327.9 398.2L331.1 395.4M140.8 413.4L136.9 415.1L133.4 417.5L129.5 419.2L125.5 420.8L121.7 422.6L118.6 425.8M156.4 412.8L151.2 413.4L146.0 413.8L140.8 413.4M156.4 412.8L158.9 416.5L160.2 420.7L162.1 424.7L164.0 428.6L164.8 433.0L165.9 437.3L168.3 441.1M181.5 413.5L186.8 415.6L192.1 417.7M209.1 412.6L204.6 413.2L200.6 415.0L196.2 415.9L192.1 417.7M222.6 412.3L218.1 411.6L213.6 412.7L209.1 412.6M222.6 412.3L222.5 407.2L222.7 402.2L223.2 397.2M237.7 414.0L237.7 407.1M237.7 414.0L242.1 412.1L245.7 409.1L249.7 406.6M79.8 415.0L83.0 411.9L86.1 408.7L88.7 405.0M90.1 414.8L88.6 410.0L88.7 405.0M688.5 417.5L685.5 420.6L683.2 424.3L680.8 427.7L678.5 431.4L676.1 434.9M61.0 418.4L61.0 424.1L60.6 429.8M61.0 418.4L63.6 422.2L67.3 425.1L69.8 429.0L72.9 432.4M88.4 419.0L90.1 414.8M88.4 419.0L84.0 417.2L79.8 415.0M156.0 420.8L155.9 416.8L156.4 412.8M156.0 420.8L152.5 418.3L148.3 417.4L144.6 415.3L140.8 413.4M209.8 421.5L209.8 417.0L209.1 412.6M674.4 420.1L679.2 419.7L683.9 419.1L688.5 417.5M129.8 423.6L124.3 425.1L118.6 425.8M141.0 422.4L140.6 417.9L140.8 413.4M141.0 422.4L135.4 423.0L129.8 423.6M181.0 423.4L181.9 418.5L181.5 413.5M369.3 423.1L370.1 427.5L370.4 431.9M317.4 425.3L317.5 421.0L317.1 416.9L315.2 412.9L314.6 408.8M317.4 425.3L319.3 421.6L321.2 418.0L322.3 413.9L323.7 410.1L325.7 406.4L327.2 402.6L329.5 399.1L331.1 395.4M524.8 424.9L521.1 427.8M47.5 426.9L51.9 427.7L56.1 429.2L60.6 429.8M330.1 427.4L325.9 426.2L321.8 425.0L317.4 425.3M132.3 428.7L129.8 423.6M123.9 431.2L118.6 425.8M38.2 433.5L33.0 434.8L27.8 436.5M38.2 433.5L42.8 430.1L47.5 426.9M70.1 437.3L72.9 432.4M128.0 437.0L123.9 431.2M128.0 437.0L130.5 433.0L132.3 428.7M347.3 437.9L344.2 435.2L340.9 432.8L337.1 431.4L333.3 430.0L330.1 427.4M630.0 436.5L636.0 436.6L641.9 437.7M723.4 437.0L727.6 437.5L731.9 437.6L736.2 437.8L740.4 438.7L744.5 439.7L748.7 440.6M658.6 439.6L663.1 441.0L667.2 443.5M658.6 439.6L654.5 438.6L650.3 438.2L646.2 437.1L641.9 437.7M718.4 438.1L723.4 437.0M14.9 442.4L11.1 447.0M135.3 442.6L135.9 446.8L137.0 450.8M143.9 442.9L139.6 442.0L135.3 442.6M143.9 442.9L140.1 446.5L137.0 450.8M549.1 443.0L545.4 440.7L542.4 437.6L539.0 434.8L535.8 431.9L531.7 430.1L528.1 427.7L524.8 424.9M549.1 443.0L545.0 441.1L541.2 438.5L537.5 435.7L533.7 433.3L529.7 431.0L525.4 429.5L521.1 427.8M89.5 447.1L86.0 444.3L82.3 442.1L78.1 440.7L73.8 439.5L70.1 437.3M89.5 447.1L86.1 444.2L83.1 440.9L79.7 438.1L75.8 435.8L72.9 432.4M688.4 446.6L684.8 444.3L681.3 441.6L677.2 440.3M688.4 446.6L685.1 444.0L682.3 440.7L679.1 438.0L676.1 434.9M76.0 448.6L72.0 449.0L68.0 449.5L64.1 450.6M176.3 449.5L172.4 445.2L168.3 441.1M582.5 448.5L585.7 451.4L588.4 454.5M602.7 448.5L598.0 450.5L593.2 452.4L588.4 454.5M602.7 448.5L598.7 449.2L594.7 448.6L590.6 448.0L586.6 448.6L582.5 448.5M663.9 449.1L667.2 443.5M750.2 449.8L749.9 445.2L748.7 440.6M792.5 451.2L791.5 446.5L789.3 442.1L787.7 437.5L787.5 432.5M16.8 452.4L11.1 447.0M16.8 452.4L16.3 447.3L14.9 442.4M85.7 453.8L89.5 447.1M380.8 452.3L379.3 447.9L377.4 443.8L375.7 439.5L373.8 435.3L370.4 431.9M397.9 452.7L393.6 453.3L389.4 452.1L385.1 451.7L380.8 452.3M79.1 455.7L85.7 453.8M137.4 454.3L137.0 450.8M137.4 454.3L136.7 448.4L135.3 442.6M638.9 454.8L639.7 450.6L640.9 446.3L641.5 442.0L641.9 437.7M376.3 456.3L380.8 452.3M376.3 456.3L380.6 455.2L385.0 455.0L389.4 454.6L393.5 453.0L397.9 452.7M397.7 457.4L397.9 452.7M90.8 458.6L85.7 453.8M90.8 458.6L89.9 452.8L89.5 447.1M391.6 458.5L397.7 457.4M391.6 458.5L394.4 455.2L397.9 452.7M612.1 459.5L609.2 455.6L605.7 452.3L602.7 448.5M24.8 460.7L21.2 456.2L16.8 452.4M398.4 460.7L397.7 457.4M398.4 460.7L391.6 458.5M484.6 460.9L490.2 460.0L495.5 457.9M725.3 460.1L723.3 455.9L722.3 451.4L720.5 447.1L719.3 442.7L718.4 438.1M233.2 463.7L229.0 464.4L225.0 465.9L221.2 467.8L217.3 469.5L213.4 471.2L209.6 473.0L205.6 474.5L201.5 475.4M296.7 463.0L291.6 460.3M310.5 462.6L305.9 462.9L301.3 463.0L296.7 463.0M310.5 462.6L305.8 461.4L301.2 460.3L296.5 459.6L291.6 460.3M719.0 462.9L725.3 460.1M758.2 462.0L756.2 457.5L753.0 453.8L750.2 449.8M758.2 462.0L756.8 457.6L754.7 453.4L753.2 448.9L751.5 444.5L748.7 440.6M145.2 464.8L142.7 461.3L140.0 457.9L137.4 454.3M311.8 465.6L310.5 462.6M544.8 465.6L545.1 461.0L546.1 456.5L546.5 451.9L548.5 447.6L549.1 443.0M602.6 465.1L607.1 462.0L612.1 459.5M400.9 466.7L398.4 460.7M540.4 466.5L544.8 465.6M540.4 466.5L541.1 462.3L543.6 458.8L545.7 455.1L546.6 451.0L548.4 447.2L549.1 443.0M550.6 466.1L544.8 465.6M779.2 467.8L781.2 463.9L783.7 460.5L787.2 457.9L790.1 454.7L792.5 451.2M779.2 467.8L774.9 466.9L770.9 465.4L766.5 465.0L762.2 464.1L758.2 462.0M99.8 468.5L96.5 465.4L93.9 461.7L90.8 458.6M214.7 469.2L210.4 471.4L206.2 474.0L201.5 475.4M214.7 469.2L219.5 468.2L223.9 466.2L228.7 465.3L233.2 463.7M583.0 470.0L584.0 466.0L585.4 462.2L587.4 458.5L588.4 454.5M674.6 469.9L671.9 466.1L670.6 461.5L667.6 457.7L665.8 453.4L663.9 449.1M240.3 470.4L237.3 466.5L233.2 463.7M24.4 473.8L24.0 469.4L24.3 465.1L24.8 460.7M46.4 473.0L42.0 473.1L37.6 473.8L33.2 473.1L28.8 473.7L24.4 473.8M46.4 473.0L42.8 471.0L38.8 469.5L35.6 466.8L31.9 464.9L28.8 462.1L24.8 460.7M206.9 472.7L201.5 475.4M314.1 473.3L311.8 465.6M314.1 473.3L312.0 468.0L310.5 462.6M536.1 472.9L540.4 466.5M536.1 472.9L540.4 469.2L544.8 465.6M580.1 473.6L583.0 470.0M116.4 476.0L112.4 473.6L107.9 472.6L103.9 470.4L99.8 468.5M116.4 476.0L120.0 473.5L123.3 470.7L125.8 467.1L129.2 464.4L131.3 460.5L133.8 456.8L137.4 454.3M555.0 475.7L553.2 470.7L550.6 466.1M555.0 475.7L551.3 472.6L547.7 469.5L544.8 465.6M602.1 474.6L602.5 469.9L602.6 465.1M602.1 474.6L605.3 471.3L607.1 467.1L610.3 463.8L612.1 459.5M681.6 475.1L677.6 473.2L674.6 469.9M82.8 92.3L82.1 94.8M71.2 95.3L71.2 98.7M79.2 95.6L81.3 97.1M82.1 94.8L81.3 97.1M81.3 97.1L79.9 101.2M81.3 97.1L85.2 99.3M89.0 96.1L88.4 101.0M62.9 98.7L59.9 99.8L57.0 101.2M62.9 98.7L65.1 104.1M71.2 98.7L75.6 98.5M75.6 98.5L75.9 100.4M85.2 99.3L88.4 101.0M85.2 99.3L84.9 102.1M57.0 101.2L56.9 103.7M71.6 101.8L71.3 102.8M75.9 100.4L75.3 103.7M79.9 101.2L79.6 102.5M79.9 101.2L84.9 102.1M88.4 101.0L87.2 103.2M56.9 103.7L55.8 104.7M56.9 103.7L58.0 105.4M67.8 103.4L65.1 104.1M67.8 103.4L69.3 105.5M71.3 102.8L73.2 102.7M71.3 102.8L70.8 105.4M73.2 102.7L75.3 103.7M75.3 103.7L75.0 105.4M75.3 103.7L77.9 104.9M84.9 102.1L83.9 105.5M87.2 103.2L87.2 105.7M182.8 103.9L178.7 104.9M200.7 103.7L195.5 106.0M200.7 103.7L201.5 107.4M42.6 104.5L41.0 107.1L39.4 109.7L37.2 111.8M42.6 104.5L45.3 105.4M45.3 105.4L46.9 105.8M46.9 105.8L49.4 105.8M46.9 105.8L46.5 108.4M58.0 105.4L56.5 106.9M58.0 105.4L60.1 104.8M65.1 104.1L63.9 108.0M69.3 105.5L70.8 105.4M70.8 105.4L70.7 108.4M75.0 105.4L73.7 106.1M77.9 104.9L78.8 105.7M78.8 105.7L78.6 107.8M78.8 105.7L80.4 105.8M80.4 105.8L83.9 105.5M87.2 105.7L85.2 107.2M178.7 104.9L176.3 108.2L173.5 111.2M191.6 104.8L193.4 104.2M193.4 104.2L195.5 106.0M63.9 108.0L64.9 108.4M74.9 107.6L78.6 107.8M74.9 107.6L72.2 109.3M78.6 107.8L80.8 108.0M80.8 108.0L83.3 108.2M83.9 106.4L85.2 107.2M83.9 106.4L83.3 108.2M91.5 107.6L90.0 109.4M195.5 106.0L195.0 109.2M201.5 107.4L201.1 109.6M51.5 109.3L50.6 112.2M52.7 108.5L54.5 109.7M54.5 109.7L54.7 110.8M57.7 109.9L59.3 109.3M57.7 109.9L56.6 110.5M59.3 109.3L61.6 109.8M61.6 109.8L62.7 110.5M63.7 108.2L62.7 110.5M64.9 108.4L67.3 109.7M67.3 109.7L69.8 112.2M70.7 108.4L72.2 109.3M72.2 109.3L69.8 112.2M78.9 110.0L80.2 112.7M83.3 108.2L83.6 110.7M87.8 108.1L90.0 109.4M195.0 109.2L192.8 110.3M195.0 109.2L197.1 111.4L199.3 113.5M201.1 109.6L202.6 112.4M293.5 109.3L294.9 112.3L296.6 115.2L298.0 118.3M37.2 111.8L35.4 113.0M37.2 111.8L39.2 114.1M54.7 110.8L56.6 110.5M62.7 110.5L65.1 111.6M65.1 111.6L65.6 115.9M83.6 110.7L83.9 113.0M88.9 111.8L89.0 115.2M173.5 111.2L173.2 113.1M182.7 111.2L185.5 112.2L188.5 112.8M192.8 110.3L192.8 114.2M35.4 113.0L37.6 115.6M42.7 113.8L40.6 114.1M42.7 113.8L45.4 115.4M42.7 113.8L42.4 116.9M49.5 112.6L50.6 112.2M49.5 112.6L46.8 115.2M69.8 112.2L70.4 115.0M73.5 113.7L70.4 115.0M73.5 113.7L74.3 114.8M80.2 112.7L77.0 114.2M83.9 113.0L81.5 114.5M83.9 113.0L87.6 115.9M164.9 113.9L162.2 115.9L159.5 117.9M164.9 113.9L167.4 116.8M173.2 113.1L175.0 115.6M188.5 112.8L188.3 115.8M199.3 113.5L202.6 112.4M37.6 115.6L39.2 114.1M37.6 115.6L38.9 119.7M39.2 114.1L40.6 114.1M45.4 115.4L46.8 115.2M45.4 115.4L45.0 116.6M46.8 115.2L46.6 117.1M51.2 115.9L51.9 117.0M56.1 114.1L59.2 116.5M60.6 115.8L62.3 115.2M62.3 115.2L65.6 115.9M65.6 115.9L64.7 120.3M68.4 115.2L70.4 115.0M70.4 115.0L70.4 116.9M74.3 114.8L77.0 114.2M74.3 114.8L75.0 116.4M81.5 114.5L78.6 116.1M87.6 115.9L89.0 115.2M87.6 115.9L85.0 117.6M175.0 115.6L172.0 117.2M175.0 115.6L178.1 118.1M188.3 115.8L187.6 116.9M192.8 114.2L195.2 115.6M195.2 115.6L193.6 118.6M211.1 114.1L207.1 117.3M211.1 114.1L215.2 117.9M42.4 116.9L38.9 119.7M42.4 116.9L43.8 118.2M51.9 117.0L50.8 119.5M51.9 117.0L53.5 118.9M59.2 116.5L59.4 118.5M68.8 117.6L70.4 116.9M68.8 117.6L69.2 119.5M75.0 116.4L75.7 119.8M85.0 117.6L81.2 118.7M159.5 117.9L160.0 120.2M172.0 117.2L170.0 118.9M187.6 116.9L190.1 118.0M190.1 118.0L193.6 118.6M190.1 118.0L190.3 121.0M203.3 117.0L200.1 118.9L197.1 120.8M203.3 117.0L207.1 117.3M207.1 117.3L208.2 121.1M215.2 117.9L217.7 120.8L220.1 123.8M38.9 119.7L36.1 120.3M38.9 119.7L41.3 121.7M43.8 118.2L45.1 120.6M49.9 119.6L46.0 120.9M53.5 118.9L54.5 118.4M53.5 118.9L53.2 121.2M54.5 118.4L56.1 120.0M59.4 118.5L59.0 121.2M59.4 118.5L62.0 119.0M62.0 119.0L64.7 120.3M69.2 119.5L71.6 121.3M69.2 119.5L68.0 122.2M75.7 119.8L75.2 121.3M81.2 118.7L79.1 121.1M170.0 118.9L172.1 120.0M172.1 120.0L173.8 121.7M178.1 118.1L176.9 120.4M178.1 118.1L180.2 118.4M180.2 118.4L182.2 118.4M182.2 118.4L184.5 118.5M184.5 118.5L187.2 118.2M184.5 118.5L183.4 121.7M193.6 118.6L197.1 120.8M298.0 118.3L299.9 121.3M304.2 118.2L299.9 121.3M31.9 120.5L34.0 120.1M36.1 120.3L37.8 123.8M41.3 121.7L37.8 123.8M41.3 121.7L43.1 122.0M46.0 120.9L45.4 122.8M50.9 120.5L53.2 121.2M50.9 120.5L49.5 123.1M53.2 121.2L52.7 123.9M53.2 121.2L55.2 122.3M56.1 120.0L55.2 122.3M59.0 121.2L56.9 122.5M59.0 121.2L59.4 124.0M64.7 120.3L66.6 121.0M66.6 121.0L68.0 122.2M71.6 121.3L74.3 123.4M75.2 121.3L74.3 123.4M75.2 121.3L76.4 122.4M79.1 121.1L76.4 122.4M160.0 120.2L158.4 124.1M160.0 120.2L163.1 121.4L165.8 123.3M173.8 121.7L175.1 121.1M173.8 121.7L175.3 123.8M175.1 121.1L176.9 120.4M183.4 121.7L186.8 123.7M183.4 121.7L182.3 126.0M190.3 121.0L186.8 123.7M190.3 121.0L192.5 123.2L194.2 125.7M197.1 120.8L194.2 125.7M299.9 121.3L301.6 123.9L302.9 126.8M37.8 123.8L41.2 126.3M43.1 122.0L45.4 122.8M43.1 122.0L43.2 125.1M45.4 122.8L45.4 124.3M49.5 123.1L48.7 125.6M51.4 123.8L52.7 123.9M51.4 123.8L50.3 126.4M52.7 123.9L53.2 125.7M55.2 122.3L56.9 122.5M56.9 122.5L56.7 124.6M59.4 124.0L56.7 124.6M61.8 123.7L62.1 126.4M74.3 123.4L74.6 126.6M169.8 123.5L172.1 126.4M175.3 123.8L177.5 126.2M186.8 123.7L185.6 126.1M220.1 123.8L218.2 126.7L216.7 129.8M220.1 123.8L223.4 123.1M223.4 123.1L224.0 125.8M34.9 125.3L37.3 124.0M34.9 125.3L36.9 127.9M41.9 124.9L41.2 126.3M43.2 125.1L43.7 126.7M45.4 124.3L46.1 125.4M46.1 125.4L46.0 127.0M46.1 125.4L47.7 126.1M48.7 125.6L47.7 126.1M53.2 125.7L53.0 128.0M56.7 124.6L56.3 126.9M149.7 125.5L150.5 126.8M158.4 124.1L159.9 126.5M194.2 125.7L191.4 129.8M194.2 125.7L197.4 128.0M206.3 125.9L207.7 128.5M224.0 125.8L223.3 129.8L223.2 133.9M36.9 127.9L39.7 128.8M36.9 127.9L35.2 130.1M41.2 126.3L39.7 128.8M43.7 126.7L46.0 127.0M43.7 126.7L42.8 128.3M49.3 127.8L50.3 126.4M49.3 127.8L49.7 129.3M53.0 128.0L53.5 129.9M56.3 126.9L57.9 128.4M58.5 126.6L57.9 128.4M58.5 126.6L61.2 126.5M62.1 126.4L62.7 128.7M74.6 126.6L76.2 127.1M159.9 126.5L159.5 130.9M172.1 126.4L175.3 127.7M172.1 126.4L170.4 129.0L168.3 131.3M175.3 127.7L177.5 126.2M177.5 126.2L179.3 128.1M182.3 126.0L185.6 126.1M185.6 126.1L188.3 127.2M188.3 127.2L187.1 131.7M199.9 127.7L198.7 128.2M209.7 126.4L213.7 127.4M213.7 127.4L212.1 130.1M44.9 129.5L46.4 131.3M49.7 129.3L46.4 131.3M55.9 129.3L57.9 128.4M55.9 129.3L54.1 130.3M55.9 129.3L57.2 131.4M57.9 128.4L59.2 130.7M62.7 128.7L64.0 130.0M69.8 129.9L72.6 129.6M69.8 129.9L67.7 130.4M154.6 128.9L154.0 130.4M154.6 128.9L159.5 130.9M179.3 128.1L178.5 131.9M191.4 129.8L192.2 133.7M197.4 128.0L198.7 128.2M200.3 128.2L203.1 131.9M207.7 128.5L207.4 131.1M34.0 131.4L35.2 130.1M42.3 131.1L42.8 132.7M44.2 131.9L45.2 133.9M46.4 131.3L46.3 132.9M53.7 131.0L53.3 132.5M57.2 131.4L59.2 130.7M57.2 131.4L55.7 132.9M64.0 130.0L65.8 130.7M65.8 130.7L67.7 130.4M65.8 130.7L64.5 132.5M72.7 130.4L75.6 130.5M75.6 130.5L78.0 132.8L80.7 134.8M152.1 130.9L154.0 130.4M159.5 130.9L159.0 133.7M159.5 130.9L163.3 132.4L167.2 133.6M168.3 131.3L167.2 133.6M178.5 131.9L180.2 132.7M187.1 131.7L187.1 133.6M203.1 131.9L204.8 130.6M203.1 131.9L204.2 133.4M204.8 130.6L207.4 131.1M207.4 131.1L209.2 132.2M45.2 133.9L45.2 136.3M46.3 132.9L46.1 134.0M49.2 133.2L51.6 132.5M51.6 132.5L53.3 132.5M51.6 132.5L52.2 134.9M53.3 132.5L55.7 132.9M60.8 132.4L58.5 135.6M60.8 132.4L62.2 132.1M62.2 132.1L64.5 132.5M159.0 133.7L157.6 136.2M167.2 133.6L170.1 137.8M177.1 132.6L174.8 135.8M180.2 132.7L179.0 135.5M180.2 132.7L183.6 133.2L187.1 133.6M187.1 133.6L192.2 133.7M187.1 133.6L187.8 138.6M192.2 133.7L192.5 134.9M199.4 132.8L197.1 134.8M199.4 132.8L202.5 134.0M204.2 133.4L207.0 134.0M209.2 132.2L207.0 134.0M212.5 132.8L212.9 134.7M223.2 133.9L220.1 134.4M34.5 134.4L35.5 136.3M36.9 134.9L38.4 135.6M36.9 134.9L35.5 136.3M38.4 135.6L39.5 138.0M52.2 134.9L52.3 137.8M56.4 135.3L58.5 135.6M56.4 135.3L54.5 136.8M58.5 135.6L58.4 138.2M58.5 135.6L60.9 136.9M65.4 134.5L66.9 134.4M65.4 134.5L62.6 136.4M66.9 134.4L67.6 136.3M139.7 134.9L142.8 136.9L145.7 139.2M174.8 135.8L170.1 137.8M179.0 135.5L175.3 136.5M192.5 134.9L197.1 134.8M212.9 134.7L215.5 134.2M212.9 134.7L210.9 139.0M215.5 134.2L216.4 135.6M220.1 134.4L219.7 137.0M225.4 134.2L227.5 134.3M227.5 134.3L229.5 139.3M43.6 137.6L39.5 138.0M43.6 137.6L43.7 139.6M45.2 136.3L46.2 137.5M46.2 137.5L45.4 138.6M52.3 137.8L54.5 136.8M52.3 137.8L46.8 138.3M52.3 137.8L52.8 141.1M54.5 136.8L56.8 137.9M56.8 137.9L58.4 138.2M60.9 136.9L62.6 136.4M60.9 136.9L61.5 138.5M146.6 137.7L145.7 139.2M153.2 136.5L157.6 136.2M153.2 136.5L154.1 139.5M170.1 137.8L168.2 143.2M180.4 137.9L178.0 142.2M234.7 136.5L229.5 139.3M33.8 140.0L38.5 140.4M43.7 139.6L45.4 138.6M45.4 138.6L45.9 140.2M58.4 138.2L57.8 140.6M62.5 139.0L64.4 140.4M67.2 139.6L64.4 140.4M67.2 139.6L71.8 140.2M145.7 139.2L149.4 141.6M145.7 139.2L143.9 144.5M154.1 139.5L150.7 140.5M154.1 139.5L157.1 141.2M184.4 139.4L187.8 138.6M184.4 139.4L183.8 140.7M194.8 139.4L193.1 142.3L191.2 145.2M210.9 139.0L205.1 140.2M210.9 139.0L211.8 141.2M221.4 139.9L218.4 141.8M38.5 140.4L40.2 140.3M45.9 140.2L47.0 141.4M47.0 141.4L52.8 141.1M47.0 141.4L45.8 144.6M52.8 141.1L52.9 145.2M57.8 140.6L57.7 145.5M62.6 141.4L64.4 140.4M149.4 141.6L150.7 140.5M157.1 141.2L158.9 141.0M157.1 141.2L158.3 143.8M158.9 141.0L161.1 141.1M161.1 141.1L163.9 140.2M163.9 140.2L163.5 143.1M205.1 140.2L206.3 145.5M211.8 141.2L214.1 141.6M214.1 141.6L212.9 144.7M218.4 141.8L217.3 147.0M228.8 141.6L226.2 144.8M140.4 142.8L143.9 144.5M158.3 143.8L156.4 147.4M158.3 143.8L161.4 145.0M163.5 143.1L164.1 143.9M163.5 143.1L161.4 145.0M164.1 143.9L168.2 143.2M164.1 143.9L164.6 147.8M168.2 143.2L168.1 145.5M45.8 144.6L50.4 148.4M52.9 145.2L50.4 148.4M57.7 145.5L56.0 149.6M57.7 145.5L60.8 146.4L63.7 147.7M143.9 144.5L146.8 146.5L149.5 148.8M161.4 145.0L162.5 147.7M168.1 145.5L164.6 147.8M206.3 145.5L208.9 145.4M206.3 145.5L201.6 147.3M208.9 145.4L212.9 144.7M208.9 145.4L208.6 147.0M212.9 144.7L215.6 146.5M226.2 144.8L225.2 147.9L224.9 151.1M156.4 147.4L153.0 148.3L149.5 148.8M156.4 147.4L158.7 148.4M162.5 147.7L158.7 148.4M162.5 147.7L164.6 147.8M164.6 147.8L164.2 152.3M181.3 147.0L178.4 149.5L175.3 151.8M181.3 147.0L183.4 150.5M201.6 147.3L201.4 150.4L200.7 153.5M208.6 147.0L208.7 150.3M215.6 146.5L217.3 147.0M149.5 148.8L147.8 152.7M158.7 148.4L157.6 150.4M191.4 149.8L186.7 150.8M191.4 149.8L194.5 150.6M157.6 150.4L155.1 152.1L152.5 153.8M157.6 150.4L159.2 152.2M169.2 151.0L172.2 151.7L175.3 151.8M169.2 151.0L168.7 152.3M184.4 151.5L181.8 154.3L179.3 157.1M184.4 151.5L186.7 150.8M194.5 150.6L195.2 152.4M210.4 151.2L212.4 151.0M212.4 151.0L214.8 152.6M215.5 151.6L214.8 152.6M224.9 151.1L225.4 155.0M235.2 151.6L232.0 154.0L228.8 156.4M147.8 152.7L146.4 157.0M159.2 152.2L160.5 153.4M160.5 153.4L164.2 152.3M160.5 153.4L160.6 158.8M164.2 152.3L168.7 152.3M164.2 152.3L165.2 155.5L166.2 158.7M195.2 152.4L197.5 154.9M195.2 152.4L192.0 156.9M214.8 152.6L216.7 154.1M221.5 153.6L216.7 154.1M221.5 153.6L222.5 155.1M152.9 155.8L152.7 160.1M197.5 154.9L195.7 159.4M216.7 154.1L214.1 158.9M222.5 155.1L225.4 155.0M146.4 157.0L148.7 159.3M179.3 157.1L176.8 159.2L174.9 161.8M179.3 157.1L181.3 160.2L183.3 163.4M192.0 156.9L192.6 160.5M228.8 156.4L228.3 161.7M148.7 159.3L152.7 160.1M160.6 158.8L156.7 159.6L152.7 160.1M160.6 158.8L166.2 158.7M166.2 158.7L168.0 160.8M195.7 159.4L192.6 160.5M195.7 159.4L198.0 162.6M214.1 158.9L216.7 159.8M216.7 159.8L218.9 161.9L221.2 164.0M152.7 160.1L155.2 163.3L157.7 166.4M168.0 160.8L171.4 161.0L174.9 161.8M174.9 161.8L178.5 164.0L182.3 165.9M228.3 161.7L233.1 164.0M183.3 163.4L182.3 165.9M198.0 162.6L196.2 165.4M198.0 162.6L200.2 165.6M221.2 164.0L216.5 166.8M182.3 165.9L182.7 168.7M196.2 165.4L197.1 167.3M200.2 165.6L197.1 167.3M200.2 165.6L202.2 165.8M202.2 165.8L204.6 170.8M186.3 166.9L189.2 167.9M186.3 166.9L186.3 170.3M197.1 167.3L195.6 172.0M216.5 166.8L213.3 167.8L209.9 168.3M182.7 168.7L179.4 170.5L176.0 172.0M209.9 168.3L204.6 170.8M171.3 170.1L176.0 172.0M176.0 172.0L175.2 174.9M186.3 170.3L187.6 173.6M202.7 171.7L204.6 170.8M202.7 171.7L202.5 174.0M183.6 173.9L179.9 175.7M183.6 173.9L187.6 173.6M187.6 173.6L186.2 178.2M195.9 172.9L198.4 173.7M198.4 173.7L200.0 177.1M175.2 174.9L179.9 175.7M204.1 174.6L203.1 176.9M200.0 177.1L196.8 179.2L193.7 181.5M258.8 177.7L259.9 181.2L260.4 184.8L260.9 188.4L261.9 191.9M186.2 178.2L189.8 180.1L193.7 181.5M186.2 178.2L183.3 182.4M181.5 183.0L183.3 182.4M111.3 230.0L113.7 230.6M111.3 230.0L111.2 232.7M113.7 230.6L117.8 230.8L121.9 231.7M121.9 231.7L121.0 235.4L120.7 239.3M111.2 232.7L113.4 236.6M114.1 236.5L117.0 239.3M117.0 239.3L114.0 241.2M117.0 239.3L120.7 239.3M114.0 241.2L111.3 242.5M261.1 299.2L260.5 302.9L260.2 306.5M303.2 363.7L300.0 367.0M288.4 370.3L291.9 372.3L295.1 374.7M299.6 371.9L295.1 374.7M58.0 130.0L62.9 131.1L67.8 132.2L72.7 132.7L77.6 133.8M58.0 130.0L61.8 133.3L65.4 136.7L69.3 139.9L72.8 143.5L76.0 147.3L79.0 151.3M58.0 130.0L56.9 134.9L55.3 139.6L54.1 144.5L53.0 149.3M58.0 130.0L54.2 133.3L50.7 136.9L46.9 140.1L42.9 143.1L39.1 146.3L36.2 150.4M58.0 130.0L53.1 128.9L48.1 128.9L43.1 128.5M58.0 130.0L55.7 125.6L53.0 121.4L50.3 117.2L47.5 113.0L44.8 108.8M58.0 130.0L57.5 125.0L56.9 120.1L56.4 115.1L56.4 110.1L55.5 105.2L54.5 100.3M58.0 130.0L61.5 126.5L65.2 123.1L68.7 119.5L72.4 116.1L75.6 112.3L78.8 108.5M118.0 233.0L123.0 233.4L128.0 233.5L133.0 233.7L138.0 233.6L143.0 233.6M118.0 233.0L122.4 235.4L126.3 238.5L130.3 241.6L133.9 245.0L137.5 248.4M118.0 233.0L119.3 237.8L120.3 242.7L121.1 247.7L121.8 252.6L122.9 257.5L123.5 262.5L124.6 267.3M118.0 233.0L116.5 237.8L115.1 242.6L113.9 247.4L112.5 252.2L110.1 256.6L107.7 261.0M118.0 233.0L114.0 236.0L109.9 238.8L105.8 241.7L101.5 244.3L97.2 246.8L92.6 248.9M118.0 233.0L113.2 231.5L108.4 230.2L103.6 229.0L98.6 228.1M118.0 233.0L114.5 229.4L110.8 226.0L107.0 222.8L103.2 219.6L99.3 216.5L95.1 213.8M118.0 233.0L118.5 228.0L117.9 223.1L117.0 218.1L115.9 213.3L114.1 208.6M118.0 233.0L121.1 229.1L124.4 225.3L127.6 221.5L130.8 217.7M165.0 140.0L169.8 138.4L174.4 136.7L179.2 135.0L183.9 133.5M165.0 140.0L168.2 143.9L171.7 147.4L174.7 151.4L177.4 155.6M165.0 140.0L162.2 144.1L159.3 148.2L156.8 152.5L154.3 156.9L151.5 161.0M165.0 140.0L160.1 140.8L155.1 141.6L150.1 141.9L145.1 142.1M165.0 140.0L161.5 136.4L158.2 132.7L155.0 128.8L151.9 124.9M165.0 140.0L167.9 136.0L171.4 132.3L174.9 128.8L178.5 125.3L182.2 122.0L186.0 118.7L189.5 115.2M150.0 128.0L154.9 126.9L159.7 125.5L164.5 124.1L169.3 122.7L173.8 120.5M150.0 128.0L150.3 133.0L149.8 138.0L150.0 143.0L150.8 147.9M222.0 150.0L226.9 150.8L231.9 151.5L236.9 151.5L241.9 151.2M222.0 150.0L223.5 154.8L225.2 159.5L227.2 164.1M222.0 150.0L218.7 153.7L215.1 157.2L211.3 160.5L207.3 163.5L203.1 166.2L198.9 168.9M222.0 150.0L217.0 150.1L212.0 150.3L207.0 150.3L202.0 150.5M222.0 150.0L219.4 145.7L217.0 141.4L214.2 137.2L211.3 133.2M222.0 150.0L223.8 145.3L225.7 140.7L227.6 136.1L230.0 131.7L232.7 127.5L235.7 123.5L239.0 119.7M232.0 140.0L236.9 139.3L241.9 138.8L246.9 138.0L251.9 137.7L256.8 137.3M232.0 140.0L233.6 144.7L235.1 149.5L236.9 154.2L239.2 158.6L241.9 162.8M232.0 140.0L227.4 141.9L222.8 143.9L218.2 145.9L213.8 148.3L209.7 151.1L205.4 153.7L200.9 155.9M232.0 140.0L227.8 137.3L223.9 134.1L220.0 131.0M232.0 140.0L233.7 135.3L235.5 130.6L237.1 125.9L238.5 121.1M262.0 186.0L267.0 186.2L272.0 186.1L277.0 186.4L282.0 186.4M262.0 186.0L264.0 190.6L266.6 194.8L269.2 199.1L271.7 203.4M262.0 186.0L260.6 190.8L258.9 195.5L256.7 200.0L254.7 204.6L252.6 209.1L250.0 213.4L247.2 217.5M262.0 186.0L257.2 184.7L252.4 183.1L247.7 181.6L243.1 179.5L238.8 177.0M262.0 186.0L260.8 181.2L259.7 176.3L259.6 171.3L259.4 166.3L259.5 161.3M262.0 186.0L264.1 181.5L266.8 177.2L269.5 173.1L272.1 168.8L274.5 164.4L276.4 159.8L278.2 155.1M283.0 239.0L287.8 237.7L292.6 236.2L297.2 234.3L301.8 232.4L306.6 230.9M283.0 239.0L283.2 244.0L283.5 249.0L283.5 254.0L282.9 259.0L281.9 263.9L280.7 268.7L279.2 273.5M283.0 239.0L279.7 242.8L276.4 246.5L273.6 250.7L270.5 254.5M283.0 239.0L280.1 234.9L277.5 230.6L275.4 226.1L273.2 221.6M283.0 239.0L285.9 235.0L288.8 230.8L291.2 226.5L293.8 222.2L296.2 217.8L298.7 213.5L300.7 208.9M217.0 225.0L222.0 225.5L226.8 226.8L231.8 227.2L236.8 227.3L241.8 227.5L246.8 227.4M217.0 225.0L216.1 229.9L215.4 234.9L215.2 239.9L214.5 244.8L213.8 249.8L212.7 254.7L211.8 259.6M217.0 225.0L212.1 226.0L207.2 227.1L202.3 228.2L197.4 228.9L192.4 228.9L187.4 228.4L182.4 227.9M217.0 225.0L216.8 220.0L216.4 215.0L216.1 210.0L215.8 205.0L215.4 200.1L215.4 195.1M203.0 241.0L208.0 240.9L213.0 241.1L218.0 241.6L222.9 242.2L227.9 242.3M203.0 241.0L203.5 246.0L203.9 251.0L204.4 255.9L204.9 260.9L205.5 265.9L205.7 270.9M203.0 241.0L198.1 241.9L193.3 243.4L188.4 244.2L183.4 244.7L178.4 245.3L173.4 245.4L168.5 244.8M203.0 241.0L204.5 236.2L206.1 231.5L208.2 227.0L211.1 222.9L213.9 218.7L216.1 214.2L217.8 209.5M236.0 247.0L240.8 245.8L245.7 244.5L250.6 243.8M236.0 247.0L236.8 251.9L237.7 256.9L238.3 261.8L239.2 266.7L240.1 271.7M236.0 247.0L231.4 248.9L226.6 250.5L221.9 252.1L217.2 253.7L212.3 254.7L207.3 255.3L202.3 255.6M236.0 247.0L232.6 243.3L229.0 239.9L225.2 236.6L221.7 233.1L218.3 229.4M236.0 247.0L236.4 242.0L236.6 237.0L237.5 232.1L237.7 227.1L237.4 222.1L236.6 217.2M308.0 152.0L313.0 152.2L318.0 152.2L323.0 152.0L328.0 152.1L333.0 152.5L337.9 153.1L342.9 153.7M308.0 152.0L306.7 156.8L304.9 161.5L303.3 166.2L301.9 171.0L300.3 175.8L298.8 180.5M308.0 152.0L303.1 151.1L298.1 150.5L293.1 150.7L288.2 151.3M308.0 152.0L307.7 147.0L307.7 142.0L307.9 137.0L307.5 132.0L307.0 127.0L307.2 122.0M380.0 150.0L384.9 149.1L389.8 148.1L394.8 147.6L399.7 146.9M380.0 150.0L382.6 154.3L385.2 158.6L387.1 163.2M380.0 150.0L376.1 153.1L372.0 155.9L368.1 159.1L364.5 162.6L360.9 166.1L357.1 169.2M380.0 150.0L375.9 147.2L371.4 145.0L367.4 141.9L363.7 138.5L359.7 135.6M380.0 150.0L382.4 145.6L384.9 141.3L386.9 136.7L388.6 132.0L390.2 127.3L392.4 122.8M357.0 138.0L362.0 138.2L366.9 138.9L371.9 139.7L376.7 141.0L381.7 141.4L386.7 141.0M357.0 138.0L358.4 142.8L359.8 147.6L361.2 152.4L362.3 157.3M357.0 138.0L353.1 141.2L349.7 144.8L345.6 147.7L341.5 150.5L337.7 153.7L334.5 157.6M357.0 138.0L352.6 135.7L348.9 132.3L345.2 128.9M357.0 138.0L358.5 133.2L360.2 128.5L361.8 123.8L363.4 119.0L365.2 114.4M240.0 283.0L245.0 282.9L250.0 283.1L255.0 282.7L260.0 283.0M240.0 283.0L242.6 287.3L245.5 291.3L249.1 294.8L252.6 298.4M240.0 283.0L235.6 285.3L231.0 287.4L226.7 289.9L222.2 292.1M240.0 283.0L235.8 280.2L231.5 277.7L227.3 275.1L222.9 272.6L218.3 270.7L213.6 269.1M240.0 283.0L243.3 279.2L246.7 275.6L250.0 271.8M205.0 332.0L210.0 331.8L215.0 331.6L220.0 331.4L225.0 331.2L230.0 331.0L234.9 330.3M205.0 332.0L207.6 336.3L209.8 340.8L211.7 345.4L213.2 350.2M205.0 332.0L200.4 334.0L195.6 335.5L190.7 336.4L185.8 337.3L180.8 337.8L175.9 338.3M205.0 332.0L200.8 329.2L196.6 326.6L192.2 324.3L187.6 322.2L182.9 320.5M205.0 332.0L207.0 327.4L208.8 322.7L210.5 318.1L211.6 313.2L212.8 308.3L213.8 303.4L214.8 298.5M286.0 356.0L291.0 356.3L296.0 356.5L301.0 356.5L306.0 356.1L311.0 356.4L316.0 356.6M286.0 356.0L289.4 359.7L292.8 363.3L296.3 366.9L299.8 370.5L303.2 374.1M286.0 356.0L284.5 360.8L282.6 365.4L281.2 370.2L280.2 375.1L279.0 380.0L278.1 384.9L277.6 389.8M286.0 356.0L282.1 359.1L277.6 361.3L273.0 363.2L268.3 364.8M286.0 356.0L281.5 353.9L276.9 351.8L272.2 350.1M286.0 356.0L283.8 351.5L281.9 346.9L280.2 342.2L278.1 337.6L276.3 333.0M286.0 356.0L289.3 352.2L292.8 348.6L295.9 344.8L298.9 340.7L301.9 336.7M242.0 372.0L247.0 371.4L252.0 371.3L257.0 371.5L262.0 371.8L267.0 371.8M242.0 372.0L243.0 376.9L244.5 381.7L246.4 386.3M242.0 372.0L237.6 374.4L233.0 376.4L228.5 378.6L224.2 381.1L220.1 383.9M242.0 372.0L237.4 370.0L233.1 367.4L228.8 364.9L224.7 362.1M242.0 372.0L243.9 367.4L245.8 362.8L248.3 358.4L251.1 354.3L253.5 349.9L256.2 345.7L258.7 341.4M120.0 198.0L125.0 197.4L130.0 197.2L134.9 198.1L139.8 199.2L144.7 200.0L149.6 200.8L154.5 201.7M120.0 198.0L120.1 203.0L120.2 208.0L120.0 213.0L119.9 218.0L120.7 222.9M120.0 198.0L115.1 199.1L110.2 199.8L105.2 200.6M120.0 198.0L121.6 193.3L123.0 188.5L124.6 183.7M155.0 220.0L160.0 220.1L165.0 220.2L170.0 220.2L175.0 219.8M155.0 220.0L154.9 225.0L155.8 229.9L156.8 234.8L158.1 239.7M155.0 220.0L150.0 219.6L145.0 219.3L140.0 219.1L135.1 218.5L130.1 217.6M155.0 220.0L153.9 215.1L153.2 210.2L152.8 205.2M150.0 255.0L154.8 253.6L159.6 252.2L164.4 250.9L169.4 250.1L174.3 249.1L179.1 247.8M150.0 255.0L151.6 259.7L153.4 264.4L155.4 269.0L157.4 273.6L159.2 278.3L161.4 282.7M150.0 255.0L145.1 253.8L140.4 252.3L135.6 250.9L130.7 249.9M150.0 255.0L150.2 250.0L150.2 245.0L150.3 240.0L150.4 235.0M178.0 292.0L183.0 292.4L188.0 292.7L193.0 292.9M178.0 292.0L179.0 296.9L180.4 301.7L181.7 306.5L183.5 311.2L185.3 315.8M178.0 292.0L174.5 295.6L170.8 298.9L167.2 302.4L163.4 305.7L159.9 309.2M178.0 292.0L173.6 289.6L169.0 287.6L164.5 285.5L159.7 284.1M178.0 292.0L180.3 287.6L182.6 283.1L185.3 278.9L187.6 274.5L189.7 270.0M68.0 290.0L73.0 290.3L78.0 290.5L83.0 290.1L88.0 289.7L92.8 288.5L97.6 287.0L102.1 284.9M68.0 290.0L68.5 295.0L68.5 300.0L68.7 305.0L68.3 310.0L67.5 314.9M68.0 290.0L63.3 288.4L58.6 286.6L53.9 284.9L49.3 283.0M68.0 290.0L68.9 285.1L69.9 280.2L71.0 275.3L71.9 270.4L73.6 265.7L76.1 261.3L78.6 257.0M60.0 265.0L64.9 263.9L69.7 262.4L74.4 260.8M60.0 265.0L60.7 270.0L61.8 274.8L63.3 279.6L65.0 284.3M60.0 265.0L55.1 264.2L50.2 263.1L45.3 262.0L40.6 260.4L35.7 259.2L30.8 258.2L25.8 257.7M60.0 265.0L59.6 260.0L58.9 255.1L58.0 250.2L56.5 245.4L55.1 240.6M100.0 380.0L105.0 379.4L110.0 379.2L114.9 378.9M100.0 380.0L101.1 384.9L103.3 389.4L105.2 394.0L107.2 398.6L109.3 403.1M100.0 380.0L96.8 383.8L93.6 387.6L90.2 391.3L86.6 394.8L83.5 398.8M100.0 380.0L96.6 376.3L93.3 372.5L90.4 368.5L86.9 364.9L83.1 361.7L79.5 358.2M100.0 380.0L101.0 375.1L102.0 370.2L103.6 365.5L104.8 360.6L106.5 355.9L107.7 351.1L109.0 346.2M170.0 348.0L175.0 348.4L180.0 348.2L185.0 348.3L189.9 349.1L194.8 350.0M170.0 348.0L173.3 351.7L176.6 355.5L179.9 359.3L183.0 363.2L185.7 367.4L188.6 371.5L191.5 375.5M170.0 348.0L169.0 352.9L167.3 357.6L165.1 362.1L163.1 366.7L161.4 371.4M170.0 348.0L165.1 349.2L160.3 350.4L155.5 351.8M170.0 348.0L167.7 343.5L165.1 339.3L162.9 334.8L160.7 330.3L159.0 325.6M170.0 348.0L172.5 343.7L174.9 339.3L177.4 335.0L179.5 330.4M190.0 434.0L194.9 433.0L199.8 432.0L204.6 430.6L209.4 429.2L214.3 428.2L219.2 427.2L224.2 426.7M190.0 434.0L189.1 438.9L188.5 443.9L187.4 448.8L185.9 453.5M190.0 434.0L185.0 433.8L180.0 433.9L175.0 434.2L170.0 434.4L165.0 434.7L160.0 435.1M190.0 434.0L192.2 429.5L194.5 425.1L196.9 420.7L199.9 416.7L202.3 412.3M330.0 394.0L335.0 394.2L340.0 394.5L345.0 394.7L350.0 394.7M330.0 394.0L331.3 398.8L332.8 403.6L334.3 408.4L335.1 413.3M330.0 394.0L327.2 398.1L324.0 402.0L320.7 405.7L317.0 409.1L313.3 412.5M330.0 394.0L326.2 390.7L322.4 387.5L318.4 384.5L314.4 381.5L310.0 379.1L305.6 376.8L301.2 374.3M330.0 394.0L330.7 389.0L331.5 384.1L332.7 379.3L334.0 374.4L335.6 369.7" stroke="#0a4a82" stroke-width=".6" fill="none" stroke-linejoin="round"/>
<path d="M220.0 79.0L220.2 82.6L218.7 86.2L219.2 91.6L218.1 95.3L219.5 100.9L217.7 104.7L218.0 107.2L217.7 113.2L217.1 116.8L217.7 119.9L217.9 123.4L216.4 128.8L212.8 131.7L208.3 136.1L205.0 137.7L202.1 142.2L200.7 146.0L196.8 150.7L198.0 153.7L199.9 157.0L201.2 160.5L201.1 166.3L204.3 167.0L207.5 171.8L210.3 175.7L208.8 180.3L206.6 182.1L204.2 187.7L209.5 188.8L212.1 192.0L216.4 191.8L219.1 196.0L219.7 200.0L223.6 203.6L224.3 208.1L224.3 213.5L231.0 212.6L234.8 215.6L240.0 215.0M122.0 146.0L123.2 150.2L126.4 153.5L127.9 156.4L129.5 161.6L136.6 161.1L139.7 164.3L144.3 167.8L147.5 169.1L150.5 167.9L156.6 170.3L158.5 171.4L163.3 172.8L166.1 175.3L171.6 179.2L175.8 180.1L177.0 183.2L180.6 186.4L184.7 189.2L185.8 193.4L189.3 195.7L193.2 199.1L196.8 201.7L199.0 206.3L204.4 205.9L206.8 206.7L211.2 206.5L214.8 209.4L218.7 211.5L222.8 211.1L227.1 210.9L233.0 213.8L235.9 215.1L240.0 215.0M240.0 215.0L242.1 219.9L243.3 222.4L244.9 226.0L246.2 232.3L249.6 235.2L249.2 239.6L249.4 243.2L249.0 246.9L248.0 252.5L248.2 257.9L245.8 260.8L244.0 266.2L243.9 267.4L238.2 271.6L237.3 276.6L234.4 280.2L231.4 281.7L236.9 283.2L239.8 280.4L242.9 279.5L250.1 277.7L251.5 277.0L258.0 276.2L259.5 277.4L265.6 274.8L269.6 274.5L274.7 277.6L277.3 276.5L281.3 278.1L287.5 279.6L291.9 278.8L294.3 278.5L299.6 279.9L303.5 283.2L306.7 285.6L311.8 288.0L316.5 290.6L318.0 292.2L322.4 293.3L325.9 295.1L330.0 296.0M232.0 283.0L229.7 288.3L228.6 290.4L223.3 296.2L223.5 299.9L220.6 304.0L215.4 306.6L212.5 311.6L209.3 312.3L208.3 315.8L205.0 318.9L202.5 323.8L201.4 328.9L201.2 333.9L204.0 333.0L209.9 330.9L216.5 330.4L219.6 331.6L221.5 329.7L227.6 330.6L230.0 330.8L235.8 333.5L239.9 333.6L241.9 336.2L245.2 336.7L251.2 340.3L254.7 339.7L256.8 340.4L262.2 337.7L267.0 339.2L268.5 338.1L273.9 338.9L276.6 337.1L283.1 334.8L286.4 336.6L290.5 335.0L295.1 334.4L298.1 334.0L300.7 330.4L307.2 329.4L311.5 330.6L313.2 325.8L317.7 322.4L321.7 322.3L325.0 318.0M235.0 332.0L236.7 335.3L235.2 339.9L237.1 345.5L236.3 346.4L237.3 351.4L238.1 355.3L240.2 358.9L238.4 364.7L235.5 367.6L234.1 373.2L232.1 376.9L231.6 379.9L232.3 382.5L235.4 389.2L236.8 393.5L237.6 397.6L236.9 399.3L240.7 403.8L242.6 408.2L244.2 411.0L246.0 416.0M419.0 101.0L418.9 107.3L419.0 109.4L422.7 116.3L422.9 119.1L422.8 125.6L422.0 128.8L424.8 131.9L424.2 138.1L425.9 140.9L423.8 146.8L427.0 151.2L425.7 154.9L420.8 154.8L417.3 157.5L412.6 157.8L408.8 159.5L402.9 157.8L400.6 159.8L394.6 162.4L393.2 165.4L388.8 165.1L382.3 166.5L380.2 170.0L376.2 170.7L370.0 174.7L365.8 175.1L363.1 177.9L360.4 179.2L355.3 179.7L352.2 183.6L348.0 185.8L342.2 189.9L340.0 193.0M426.0 155.0L428.8 156.9L431.8 160.5L434.1 163.1L437.3 165.6L442.0 168.1L446.5 169.7L449.4 171.3L452.8 175.0L455.8 179.2L457.1 180.3L461.8 183.3L465.9 184.6L469.5 187.3L471.8 187.3L476.1 187.0L482.8 189.0L485.0 189.4L490.3 189.0L493.0 189.7L498.5 189.7L503.5 192.0L506.0 191.0M20.0 440.0L23.9 441.1L27.5 442.0L32.5 442.1L35.5 443.8L40.5 443.0L42.9 444.2L48.0 443.7L50.4 444.4L56.5 443.9L60.6 447.3L63.6 445.4L66.8 445.6L72.0 449.4L74.7 449.1L81.1 448.8L85.5 450.6L87.8 450.3L91.4 451.0L94.6 452.0L99.9 451.1L105.5 451.0L106.9 452.8L113.6 453.8L114.5 451.9L119.5 453.8L124.5 454.5L129.3 455.2L131.7 454.1L135.3 455.0L139.4 456.5L144.8 454.5L149.2 455.4L151.5 455.5L157.4 456.9L160.0 457.0M520.0 434.0L522.6 435.5L526.9 437.8L531.2 440.4L537.4 442.4L539.5 446.4L544.4 444.9L547.2 447.4L550.7 446.5L555.6 450.0L559.1 450.0L563.6 450.5L569.5 449.5L573.7 448.3L576.3 447.6L580.3 447.8L586.1 446.0L589.7 447.6L594.8 445.2L598.2 445.9L603.2 445.2L605.9 443.2L610.7 443.3L617.3 440.4L620.6 438.8L625.2 441.8L628.9 442.2L632.9 443.5L638.6 442.4L641.2 444.1L645.8 443.5L651.1 444.6L655.1 445.9L658.7 443.4L663.6 442.8L668.2 444.3L670.4 441.6L674.5 442.8L680.3 442.1L683.3 440.1L687.8 440.7L692.5 439.6L697.4 440.5L698.6 438.7L703.7 438.7L707.2 440.0L713.6 438.6L716.0 439.1L719.3 439.8L725.8 438.9L729.8 438.0L732.3 437.4L738.5 437.8L741.6 438.7L745.0 436.8L750.0 437.0M560.0 434.0L562.2 437.1L564.8 440.5L568.8 447.1L571.2 449.7L572.6 453.9L575.0 457.0M650.0 434.0L653.1 437.7L653.4 441.9L656.6 446.0L658.0 448.5L658.9 452.8L660.0 457.0" stroke="#727272" stroke-width="1.4" fill="none" stroke-linejoin="round"/>
</svg>
<svg class="a" style="left:0;top:0" width="800" height="500" viewBox="0 0 800 500"><path d="M146 142L280 350M147.6 141.3L281.6 349.3" stroke="#b4b4b4" stroke-width=".7" fill="none"/>
<path d="M172 146L266 213L286 356" stroke="#0b5587" stroke-width="1.9" fill="none" stroke-linejoin="round"/>
<g font-family="Liberation Sans" fill="#f8f8f8" stroke="#f8f8f8" stroke-width="1.6" stroke-opacity=".8" stroke-linejoin="round"><text x="41" y="106.8" font-size="7.6">Cambridge</text><text x="20" y="124.4" font-size="7.6">xford</text><text x="40" y="134.8" font-size="7.6">London</text><text x="37" y="161.5" font-size="7.6">Brighton</text><text x="92.6" y="156.8" font-size="7.6">Calais</text><text x="124.6" y="148" font-size="7.6">Bruges</text><text x="125.6" y="169.2" font-size="7.6">Lille</text><text x="155" y="168.6" font-size="7.1" font-weight="bold">BELGIUM</text><text x="229.2" y="116" font-size="7.6">Münster</text><text x="236" y="103.4" font-size="7.6">Osnabrück</text><text x="205" y="145.6" font-size="7.6">Düsseldorf</text><text x="214" y="157.4" font-size="7.6">Cologne</text><text x="100" y="197" font-size="7.6">Amiens</text><text x="183.7" y="200.3" font-size="6.7" font-weight="bold">LUXEMBOURG</text><text x="247.8" y="184.4" font-size="7.6">Frankfurt am</text><text x="263" y="193.5" font-size="7.6">Main</text><text x="43" y="213" font-size="7.6">Le Havre</text><text x="37.5" y="225" font-size="7.6">Caen</text><text x="145.5" y="221.6" font-size="7.6">Reims</text><text x="200.6" y="226.6" font-size="7.6">Metz</text><text x="293" y="152.2" font-size="8.6" font-weight="bold">GERMANY</text><text x="351.8" y="141.7" font-size="7.4">Leipzig</text><text x="382.5" y="152.5" font-size="7.7">Dresden</text><text x="325" y="110" font-size="7.6">Magdeburg</text><text x="106" y="237.5" font-size="7.6">Paris</text><text x="198.3" y="244" font-size="7.6">Nancy</text><text x="229.3" y="247.2" font-size="7.6">Strasbourg</text><text x="268" y="240.2" font-size="7.6">Stuttgart</text><text x="297" y="254.5" font-size="7.6">Ulm</text><text x="144.8" y="257.6" font-size="7.6">Troyes</text><text x="46.4" y="269.3" font-size="7.6">Le Mans</text><text x="62.6" y="291.4" font-size="7.6">Tours</text><text x="20" y="296.4" font-size="7.6">tes</text><text x="20" y="269.3" font-size="7.6">es</text><text x="171" y="294.5" font-size="7.6">Dijon</text><text x="235" y="284.8" font-size="7.6">Basel</text><text x="268" y="300.3" font-size="6.3" font-weight="bold">LIECHTENSTEIN</text><text x="234.3" y="312.7" font-size="7.1" font-weight="bold">SWITZERLAND</text><text x="86" y="320.4" font-size="8.2" font-weight="bold">FRANCE</text><text x="196.4" y="334.4" font-size="7.6">Geneva</text><text x="324" y="322.8" font-size="7.6">Bo</text><text x="321" y="338.8" font-size="7.6">Tre</text><text x="182" y="370" font-size="7.6">Grenoble</text><text x="237" y="374" font-size="7.6">Turin</text><text x="315" y="361" font-size="7.6">Verona</text><text x="300" y="384" font-size="7.6">Parma</text><text x="324" y="394" font-size="7.6">Bol</text><text x="24" y="382" font-size="7.6">Bordeaux</text><text x="228.8" y="422" font-size="7.6">Nice</text><text x="298" y="426.8" font-size="7.6">Livorno</text><text x="184" y="436" font-size="7.6">Marseille</text><text x="20" y="450.8" font-size="7.6">ona</text><text x="165" y="348" font-size="7.6">Lyon</text><text x="112" y="422" font-size="7.6">Montpellier</text><text x="349.5" y="442.2" font-size="7.6">Perugia</text><text x="358.7" y="458" font-size="8" font-weight="bold">ITALY</text><text x="509.6" y="445" font-size="6.7" font-weight="bold">MONTENEGRO</text><text x="567.7" y="456" font-size="7.6">Pristina</text><text x="625.3" y="455.4" font-size="7.6">Sofia</text><text x="669.7" y="458.5" font-size="8" font-weight="bold">BULGARIA</text><text x="738.4" y="438.2" font-size="7.6">Varna</text><text x="428" y="196.5" font-size="7" font-weight="bold">CZECH</text><text x="422" y="204" font-size="7" font-weight="bold">REPUBLIC</text><text x="312" y="226" font-size="7.6">Nurnberg</text></g>
<g font-family="Liberation Sans" fill="#1e1e1e" stroke="#1e1e1e" stroke-width=".18"><text x="41" y="106.8" font-size="7.6">Cambridge</text><text x="20" y="124.4" font-size="7.6">xford</text><text x="40" y="134.8" font-size="7.6">London</text><text x="37" y="161.5" font-size="7.6">Brighton</text><text x="92.6" y="156.8" font-size="7.6">Calais</text><text x="124.6" y="148" font-size="7.6">Bruges</text><text x="125.6" y="169.2" font-size="7.6">Lille</text><text x="155" y="168.6" font-size="7.1" font-weight="bold">BELGIUM</text><text x="229.2" y="116" font-size="7.6">Münster</text><text x="236" y="103.4" font-size="7.6">Osnabrück</text><text x="205" y="145.6" font-size="7.6">Düsseldorf</text><text x="214" y="157.4" font-size="7.6">Cologne</text><text x="100" y="197" font-size="7.6">Amiens</text><text x="183.7" y="200.3" font-size="6.7" font-weight="bold">LUXEMBOURG</text><text x="247.8" y="184.4" font-size="7.6">Frankfurt am</text><text x="263" y="193.5" font-size="7.6">Main</text><text x="43" y="213" font-size="7.6">Le Havre</text><text x="37.5" y="225" font-size="7.6">Caen</text><text x="145.5" y="221.6" font-size="7.6">Reims</text><text x="200.6" y="226.6" font-size="7.6">Metz</text><text x="293" y="152.2" font-size="8.6" font-weight="bold">GERMANY</text><text x="351.8" y="141.7" font-size="7.4">Leipzig</text><text x="382.5" y="152.5" font-size="7.7">Dresden</text><text x="325" y="110" font-size="7.6">Magdeburg</text><text x="106" y="237.5" font-size="7.6">Paris</text><text x="198.3" y="244" font-size="7.6">Nancy</text><text x="229.3" y="247.2" font-size="7.6">Strasbourg</text><text x="268" y="240.2" font-size="7.6">Stuttgart</text><text x="297" y="254.5" font-size="7.6">Ulm</text><text x="144.8" y="257.6" font-size="7.6">Troyes</text><text x="46.4" y="269.3" font-size="7.6">Le Mans</text><text x="62.6" y="291.4" font-size="7.6">Tours</text><text x="20" y="296.4" font-size="7.6">tes</text><text x="20" y="269.3" font-size="7.6">es</text><text x="171" y="294.5" font-size="7.6">Dijon</text><text x="235" y="284.8" font-size="7.6">Basel</text><text x="268" y="300.3" font-size="6.3" font-weight="bold">LIECHTENSTEIN</text><text x="234.3" y="312.7" font-size="7.1" font-weight="bold">SWITZERLAND</text><text x="86" y="320.4" font-size="8.2" font-weight="bold">FRANCE</text><text x="196.4" y="334.4" font-size="7.6">Geneva</text><text x="324" y="322.8" font-size="7.6">Bo</text><text x="321" y="338.8" font-size="7.6">Tre</text><text x="182" y="370" font-size="7.6">Grenoble</text><text x="237" y="374" font-size="7.6">Turin</text><text x="315" y="361" font-size="7.6">Verona</text><text x="300" y="384" font-size="7.6">Parma</text><text x="324" y="394" font-size="7.6">Bol</text><text x="24" y="382" font-size="7.6">Bordeaux</text><text x="228.8" y="422" font-size="7.6">Nice</text><text x="298" y="426.8" font-size="7.6">Livorno</text><text x="184" y="436" font-size="7.6">Marseille</text><text x="20" y="450.8" font-size="7.6">ona</text><text x="165" y="348" font-size="7.6">Lyon</text><text x="112" y="422" font-size="7.6">Montpellier</text><text x="349.5" y="442.2" font-size="7.6">Perugia</text><text x="358.7" y="458" font-size="8" font-weight="bold">ITALY</text><text x="509.6" y="445" font-size="6.7" font-weight="bold">MONTENEGRO</text><text x="567.7" y="456" font-size="7.6">Pristina</text><text x="625.3" y="455.4" font-size="7.6">Sofia</text><text x="669.7" y="458.5" font-size="8" font-weight="bold">BULGARIA</text><text x="738.4" y="438.2" font-size="7.6">Varna</text><text x="428" y="196.5" font-size="7" font-weight="bold">CZECH</text><text x="422" y="204" font-size="7" font-weight="bold">REPUBLIC</text><text x="312" y="226" font-size="7.6">Nurnberg</text></g>
<g font-family="Liberation Sans" font-style="italic" fill="#5aaed6" font-size="5.6" letter-spacing=".6"><text x="262" y="401">Golfo di</text><text x="264" y="408.8">Genova</text><text x="264" y="424.8">Ligurian</text><text x="273" y="432">Sea</text></g>
<path d="M67.5 157H102.5M67.5 160.6H88M67.5 164.6H88M88 157V164.6" stroke="#13598c" stroke-width="1.1" fill="none"/>
<text x="40" y="180" font-family="Liberation Sans" font-size="14" letter-spacing=".45" fill="#15598a" stroke="#15598a" stroke-width=".35">railway.tools</text>
<rect x="140.4" y="111.5" width="41.0" height="10.400000000000006" rx="5.200000000000003" fill="#1a9ccb"/>
<rect x="115" y="133.7" width="45" height="10.100000000000023" rx="5.050000000000011" fill="#1a9ccb"/>
<g font-family="Liberation Sans" fill="#fff" font-size="5.5"><text x="143.7" y="118.8">ROTTERDAM</text><text x="118" y="140.8">ZEEBRUGGE</text></g>
<rect x="138.7" y="133.7" width="50.0" height="10.100000000000023" rx="5.050000000000011" fill="#178a37"/>
<g font-family="Liberation Sans" fill="#fff" font-size="5.5"><text x="140.5" y="140.8">Ar</text><text x="177" y="140.5">1</text><text x="182" y="140.5">×</text></g>
<rect x="148" y="137.6" width="27.80000000000001" height="8.400000000000006" rx="4.200000000000003" fill="#178a37"/>
<g font-family="Liberation Sans" fill="#fff" font-size="5.5"><text x="151" y="143.8">DOLL</text><text x="168.5" y="143.8">×</text></g>
<rect x="240" y="205.7" width="50.5" height="10.800000000000011" rx="5.400000000000006" fill="#1a9ccb"/>
<rect x="267" y="352.8" width="37" height="10.0" rx="5.0" fill="#d42b2b"/>
<g font-family="Liberation Sans" fill="#fff" font-size="5.5"><text x="243.3" y="213.3">LUDWIGSHAFEN</text><text x="270" y="359.8">MILANO</text><text x="295.5" y="359.8">×</text></g>
<rect x="697" y="445" width="83" height="12" fill="#fff" fill-opacity=".7"/>
<text x="700" y="452.6" font-family="Liberation Sans" font-size="5.6" fill="#2a3a9a" textLength="77" lengthAdjust="spacingAndGlyphs"><tspan fill="#333">© </tspan>OpenStreetMap contributors</text>
<text x="27" y="452" font-family="Liberation Sans" font-size="5.4" fill="#1c5f94" textLength="214" lengthAdjust="spacingAndGlyphs">© railway.tools © DB Netz AG Alle Angaben auf Richtigkeit und Vollständigkeit ohne Gewähr</text>
<rect x="20" y="456" width="760" height="1" fill="#555"/></svg>

<!-- nav -->
<div class="a" style="left:20px;top:79px;width:760px;height:21px;background:#03517d"></div>
<div class="a" style="left:20px;top:79px;width:22px;height:21px;background:#0878a6"></div>
<div class="nv" style="left:26px;font-size:9px"><span>EN</span></div>
<div class="a" style="left:42px;top:79px;width:47px;height:21px;background:#034a75"></div>
<div class="a" style="left:89px;top:79px;width:131px;height:21px;background:#0a7aa8"></div>
<div class="nv" style="left:94px"><span style="transform:scaleX(.85)">INTERMODAL CONNECTIONS</span></div>
<div class="nv" style="left:226.5px"><span style="transform:scaleX(.855)">INTERMODAL TERMINALS</span></div>
<div class="nv" style="left:344px"><span style="transform:scaleX(.83)">SINGLE WAGONLOAD TRANSPORT</span></div>
<div class="nv" style="left:497px"><span style="transform:scaleX(.855)">LOADING POINTS/IAV</span></div>
<div class="nv" style="left:598.5px"><span style="transform:scaleX(.82)">RAIL REFUELLING STATIONS</span></div>
<div class="a" style="left:0;top:0;width:800px;height:500px;background:#03567e;clip-path:polygon(494.5px 101px,780px 101px,780px 196px,521px 196px,518px 123.5px,495.5px 123.5px)"></div>
<div class="a" style="left:0;top:0;width:800px;height:500px;background:#03567e;clip-path:polygon(324px 194.5px,780px 194.5px,780px 435px,336px 435px)"></div>
<div class="a" style="left:20px;top:100px;width:760px;height:1px;background:rgba(255,255,255,.85)"></div>
<div class="a" style="left:347px;top:270px;width:241px;height:27px;background:linear-gradient(#0a6f9c,#0a80ab)"></div>
<div class="a" style="left:347px;top:297px;width:241px;height:31px;background:#08699a"></div>
<div class="a" style="left:590px;top:270px;width:182px;height:27px;background:linear-gradient(#0a6f9c,#0a80ab)"></div>
<div class="a" style="left:590px;top:297px;width:182px;height:31px;background:#08699a"></div>
<div class="a" style="left:347px;top:331px;width:241px;height:27px;background:linear-gradient(#0a6f9c,#0a80ab)"></div>
<div class="a" style="left:347px;top:358px;width:241px;height:31px;background:#08699a"></div>
<div class="a" style="left:590px;top:331px;width:182px;height:27px;background:linear-gradient(#0a6f9c,#0a80ab)"></div>
<div class="a" style="left:590px;top:358px;width:182px;height:31px;background:#08699a"></div>
<div class="a" style="left:468.3px;top:245px;width:1px;height:158px;background:#1a8fbd"></div>
<div class="a" style="left:712.2px;top:245px;width:1px;height:158px;background:#1a8fbd"></div>
<svg class="a" style="left:0;top:0" width="800" height="500" viewBox="0 0 800 500">
<path d="M498.8 112.8H511.5" stroke="#c9d3dc" stroke-width="1.2" fill="none"/>
<path d="M507.2 108.2L511.8 112.8L507.2 117.6" stroke="#fff" stroke-width="1.2" fill="none"/>
<path d="M546.3 121.5L550.3 125.5L554.3 121.5" stroke="#fff" stroke-width="1" fill="none"/>
<path d="M546.3 155.3L550.3 159.3L554.3 155.3" stroke="#fff" stroke-width="1" fill="none"/>
<rect x="541" y="138.8" width="231" height="1.3" fill="#fff"/>
<rect x="541" y="172.8" width="231" height="1.3" fill="#fff"/>
<circle cx="749" cy="157" r="3.8" stroke="#1a9cc8" stroke-width=".8" fill="none"/>
<path d="M747 155.5H751L749.7 157.5V159H748.3V157.5Z" stroke="#1a9cc8" stroke-width=".6" fill="none"/>
<rect x="347" y="237" width="425" height="1.4" fill="#fff"/>
<circle cx="349.7" cy="222.6" r="2.5" fill="#d9d9d9"/>
<rect x="628.5" y="205.8" width="4.6" height="4.6" rx=".8" stroke="#cfd5da" stroke-width=".9" fill="none"/>
<rect x="628.5" y="214.3" width="4.6" height="4.6" rx=".8" stroke="#cfd5da" stroke-width=".9" fill="none"/>
<rect x="628.5" y="222.8" width="4.6" height="4.6" rx=".8" stroke="#cfd5da" stroke-width=".9" fill="none"/>
<rect x="637.0" y="205.8" width="4.6" height="4.6" rx=".8" stroke="#cfd5da" stroke-width=".9" fill="none"/>
<rect x="637.0" y="214.3" width="4.6" height="4.6" rx=".8" stroke="#cfd5da" stroke-width=".9" fill="none"/>
<rect x="637.0" y="222.8" width="4.6" height="4.6" rx=".8" stroke="#cfd5da" stroke-width=".9" fill="none"/>
<rect x="645.5" y="205.8" width="4.6" height="4.6" rx=".8" stroke="#cfd5da" stroke-width=".9" fill="none"/>
<rect x="645.5" y="214.3" width="4.6" height="4.6" rx=".8" stroke="#cfd5da" stroke-width=".9" fill="none"/>
<rect x="645.5" y="222.8" width="4.6" height="4.6" rx=".8" stroke="#cfd5da" stroke-width=".9" fill="none"/>
<path d="M669.8 208.5Q674 204.5 677.5 205.5Q681 207 684.5 208Q689 207.5 693.6 205.3V223.5Q689 225.5 684.5 225.8Q681 225 677.5 223.8Q674 223 669.8 226.5Z" stroke="#1a9cc8" stroke-width=".9" fill="none"/>
<path d="M679 210L683.2 215.2L679 220.4" stroke="#1a9cc8" stroke-width=".9" fill="none"/>
<rect x="723.6" y="208.4" width="19" height="12.4" rx="1" stroke="#1a9cc8" stroke-width=".9" fill="none"/>
<path d="M723.2 210.2H716.5Q713.5 211 713.5 216.5V220.5H717" stroke="#1a9cc8" stroke-width=".9" fill="none"/>
<circle cx="719" cy="221.3" r="2.3" stroke="#1a9cc8" stroke-width=".9" fill="#03567e"/>
<circle cx="734.3" cy="221.3" r="2.3" stroke="#1a9cc8" stroke-width=".9" fill="#03567e"/>
<path d="M763.4 203.2L770 209.8M770 203.2L763.4 209.8" stroke="#fff" stroke-width="1.2"/>
</svg>
<svg class="a" style="left:0;top:0" width="800" height="500" viewBox="0 0 800 500">
<defs><radialGradient id="gg" cx=".4" cy=".35" r=".7"><stop offset="0" stop-color="#d8d8d8"/><stop offset="1" stop-color="#9a9a9a"/></radialGradient></defs>
<circle cx="361.4" cy="283.5" r="6.4" stroke="#fff" stroke-width=".9" fill="none"/>
<circle cx="361.4" cy="280.5" r="1" fill="#fff"/>
<rect x="358.79999999999995" y="282.0" width="5.2" height="4.8" fill="#fff"/>
<circle cx="604.5" cy="283.5" r="6.4" stroke="#fff" stroke-width=".9" fill="none"/>
<circle cx="604.5" cy="280.5" r="1" fill="#fff"/>
<rect x="601.9" y="282.0" width="5.2" height="4.8" fill="#fff"/>
<circle cx="487.7" cy="283.5" r="6.6" fill="url(#gg)"/>
<rect x="485.2" y="279.5" width="5" height="7" rx="1" stroke="#fff" stroke-width=".8" fill="none"/>
<path d="M485.2 283.5H490.2" stroke="#fff" stroke-width=".8"/>
<circle cx="508.7" cy="283.5" r="6.3" stroke="#56b6dc" stroke-width=".9" fill="none"/>
<path d="M512.2 283.5H505.2M507.9 280.7L505.09999999999997 283.5L507.9 286.3" stroke="#56b6dc" stroke-width=".9" fill="none"/>
<circle cx="560.7" cy="283.5" r="6.3" stroke="#fff" stroke-width=".9" fill="none"/>
<path d="M557.2 283.5H564.2M561.5 280.7L564.3000000000001 283.5L561.5 286.3" stroke="#fff" stroke-width="1.1" fill="none"/>
<circle cx="733.6" cy="283.5" r="6.6" fill="url(#gg)"/>
<rect x="731.1" y="279.5" width="5" height="7" rx="1" stroke="#fff" stroke-width=".8" fill="none"/>
<path d="M731.1 283.5H736.1" stroke="#fff" stroke-width=".8"/>
<circle cx="754.5" cy="283.5" r="6.3" stroke="#56b6dc" stroke-width=".9" fill="none"/>
<path d="M758.0 283.5H751.0M753.7 280.7L750.9 283.5L753.7 286.3" stroke="#56b6dc" stroke-width=".9" fill="none"/>
<path d="M358.5 313.3A5.2 5.2 0 1 1 358.5 321.7" stroke="#fff" stroke-width=".9" fill="none"/>
<path d="M355 317.5H365.5M363 315.0L365.6 317.5L363 320.0" stroke="#fff" stroke-width=".9" fill="none"/>
<path d="M489.5 314.5A5.2 5.2 0 1 0 489.5 320.5" stroke="#fff" stroke-width=".9" fill="none"/>
<path d="M483.5 317.5H494.0M491.5 315.0L494.1 317.5L491.5 320.0" stroke="#fff" stroke-width=".9" fill="none"/>
<path d="M602.0 313.3A5.2 5.2 0 1 1 602.0 321.7" stroke="#fff" stroke-width=".9" fill="none"/>
<path d="M598.5 317.5H609.0M606.5 315.0L609.1 317.5L606.5 320.0" stroke="#fff" stroke-width=".9" fill="none"/>
<path d="M726 314.5A5.2 5.2 0 1 0 726 320.5" stroke="#fff" stroke-width=".9" fill="none"/>
<path d="M720 317.5H730.5M728 315.0L730.6 317.5L728 320.0" stroke="#fff" stroke-width=".9" fill="none"/>
<circle cx="361.4" cy="344.5" r="6.4" stroke="#fff" stroke-width=".9" fill="none"/>
<circle cx="361.4" cy="341.5" r="1" fill="#fff"/>
<rect x="358.79999999999995" y="343.0" width="5.2" height="4.8" fill="#fff"/>
<circle cx="604.5" cy="344.5" r="6.4" stroke="#fff" stroke-width=".9" fill="none"/>
<circle cx="604.5" cy="341.5" r="1" fill="#fff"/>
<rect x="601.9" y="343.0" width="5.2" height="4.8" fill="#fff"/>
<circle cx="487.7" cy="344.5" r="6.6" fill="#8cc63f"/>
<rect x="485.2" y="340.5" width="5" height="7" rx="1" stroke="#fff" stroke-width=".8" fill="none"/>
<path d="M485.2 344.5H490.2" stroke="#fff" stroke-width=".8"/>
<circle cx="508.7" cy="344.5" r="6.3" stroke="#56b6dc" stroke-width=".9" fill="none"/>
<path d="M512.2 344.5H505.2M507.9 341.7L505.09999999999997 344.5L507.9 347.3" stroke="#56b6dc" stroke-width=".9" fill="none"/>
<circle cx="560.7" cy="344.5" r="6.3" stroke="#fff" stroke-width=".9" fill="none"/>
<path d="M557.2 344.5H564.2M561.5 341.7L564.3000000000001 344.5L561.5 347.3" stroke="#fff" stroke-width="1.1" fill="none"/>
<circle cx="733.6" cy="344.5" r="6.6" fill="url(#gg)"/>
<rect x="731.1" y="340.5" width="5" height="7" rx="1" stroke="#fff" stroke-width=".8" fill="none"/>
<path d="M731.1 344.5H736.1" stroke="#fff" stroke-width=".8"/>
<circle cx="754.5" cy="344.5" r="6.3" stroke="#56b6dc" stroke-width=".9" fill="none"/>
<path d="M758.0 344.5H751.0M753.7 341.7L750.9 344.5L753.7 347.3" stroke="#56b6dc" stroke-width=".9" fill="none"/>
<path d="M358.5 374.3A5.2 5.2 0 1 1 358.5 382.7" stroke="#fff" stroke-width=".9" fill="none"/>
<path d="M355 378.5H365.5M363 376.0L365.6 378.5L363 381.0" stroke="#fff" stroke-width=".9" fill="none"/>
<path d="M489.5 375.5A5.2 5.2 0 1 0 489.5 381.5" stroke="#fff" stroke-width=".9" fill="none"/>
<path d="M483.5 378.5H494.0M491.5 376.0L494.1 378.5L491.5 381.0" stroke="#fff" stroke-width=".9" fill="none"/>
<path d="M602.0 374.3A5.2 5.2 0 1 1 602.0 382.7" stroke="#fff" stroke-width=".9" fill="none"/>
<path d="M598.5 378.5H609.0M606.5 376.0L609.1 378.5L606.5 381.0" stroke="#fff" stroke-width=".9" fill="none"/>
<path d="M726 375.5A5.2 5.2 0 1 0 726 381.5" stroke="#fff" stroke-width=".9" fill="none"/>
<path d="M720 378.5H730.5M728 376.0L730.6 378.5L728 381.0" stroke="#fff" stroke-width=".9" fill="none"/>
</svg>
<div class="t" style="left:583.00px;top:114.73px;font-size:8px;color:#fff;font-weight:normal;">Belgium, Antwerp</div>
<div class="t" style="left:564.70px;top:117.27px;font-size:5px;color:#22a2d2;font-weight:normal;transform:scaleX(1.22);transform-origin:0 0;">Start</div>
<div class="t" style="left:562.00px;top:126.47px;font-size:5px;color:#22a2d2;font-weight:normal;transform:scaleX(1.24);transform-origin:0 0;">Destination</div>
<div class="t" style="left:597.50px;top:123.93px;font-size:8px;color:#fff;font-weight:normal;">Italy, Milano</div>
<div class="t" style="left:562.00px;top:153.03px;font-size:8px;color:#fff;font-weight:normal;transform:scaleX(0.99);transform-origin:0 0;">4 Connections</div>
<div class="t" style="left:753.70px;top:119.77px;font-size:7px;color:#1a9cc8;font-weight:normal;transform:scaleX(0.93);transform-origin:0 0;">Reset</div>
<div class="t" style="left:755.00px;top:154.07px;font-size:7px;color:#1a9cc8;font-weight:normal;transform:scaleX(1.03);transform-origin:0 0;">Filter</div>
<div class="t" style="left:347.50px;top:206.53px;font-size:10px;color:#fff;font-weight:normal;transform:scaleX(0.99);transform-origin:0 0;">Connection</div>
<div class="t" style="left:356.00px;top:221.34px;font-size:5.5px;color:#fff;font-weight:normal;transform:scaleX(1.1);transform-origin:0 0;">Antwerpen - Ludwigshafen - Milano</div>
<div class="t" style="left:375.00px;top:247.60px;font-size:13px;color:#fff;font-weight:normal;transform:scaleX(1.02);transform-origin:0 0;">Antwerpen</div>
<div class="t" style="left:550.70px;top:247.60px;font-size:13px;color:#fff;font-weight:normal;">Ludwigshafen</div>
<div class="a" style="left:0;top:0;width:800px;height:500px;clip-path:inset(0 28px 0 0)">
<div class="t" style="left:754.70px;top:247.60px;font-size:13px;color:#fff;font-weight:normal;">Milano</div>
<div class="t" style="left:373.80px;top:280.52px;font-size:6px;color:#fff;font-weight:normal;">Hupac Intermodal SA</div>
<div class="t" style="left:522.00px;top:280.52px;font-size:6px;color:#fff;font-weight:normal;">Train 1 / 5</div>
<div class="t" style="left:616.50px;top:280.52px;font-size:6px;color:#fff;font-weight:normal;">Lotras S.r.l.</div>
<div class="t" style="left:766.00px;top:280.52px;font-size:6px;color:#fff;font-weight:normal;">Train</div>
<div class="t" style="left:354.40px;top:302.42px;font-size:6px;color:#fff;font-weight:normal;">Antwerp Combinant</div>
<div class="t" style="left:480.80px;top:302.42px;font-size:6px;color:#fff;font-weight:normal;">Ludwigshafen KTL</div>
<div class="t" style="left:598.00px;top:302.42px;font-size:6px;color:#fff;font-weight:normal;">Ludwigshafen KTL</div>
<div class="t" style="left:715.50px;top:302.42px;font-size:6px;color:#fff;font-weight:normal;">Terminal Intermodale</div>
<div class="t" style="left:376.00px;top:313.94px;font-size:6.8px;color:#fff;font-weight:normal;">Mo 15:30</div>
<div class="t" style="left:502.00px;top:313.94px;font-size:6.8px;color:#fff;font-weight:normal;">Tu 07:45</div>
<div class="t" style="left:619.50px;top:313.94px;font-size:6.8px;color:#fff;font-weight:normal;">Mo 00:00</div>
<div class="t" style="left:737.50px;top:313.94px;font-size:6.8px;color:#fff;font-weight:normal;">Mo 00:00</div>
<div class="t" style="left:373.80px;top:341.52px;font-size:6px;color:#fff;font-weight:normal;">Lineas NV</div>
<div class="t" style="left:522.00px;top:341.52px;font-size:6px;color:#fff;font-weight:normal;">Train 1 / 4</div>
<div class="t" style="left:616.50px;top:341.52px;font-size:6px;color:#fff;font-weight:normal;">Trenitalia S.p.A.</div>
<div class="t" style="left:766.00px;top:341.52px;font-size:6px;color:#fff;font-weight:normal;">Train</div>
<div class="t" style="left:354.40px;top:363.42px;font-size:6px;color:#fff;font-weight:normal;">Antwerpen Mainhub</div>
<div class="t" style="left:480.80px;top:363.42px;font-size:6px;color:#fff;font-weight:normal;">Triport Ludwigshafen</div>
<div class="t" style="left:598.00px;top:363.42px;font-size:6px;color:#fff;font-weight:normal;">Ludwigshafen KTL</div>
<div class="t" style="left:715.50px;top:363.42px;font-size:6px;color:#fff;font-weight:normal;">Terminal Intermodale</div>
<div class="t" style="left:376.00px;top:374.94px;font-size:6.8px;color:#fff;font-weight:normal;">Mo 17:30</div>
<div class="t" style="left:502.00px;top:374.94px;font-size:6.8px;color:#fff;font-weight:normal;">Tu 14:00</div>
<div class="t" style="left:619.50px;top:374.94px;font-size:6.8px;color:#fff;font-weight:normal;">Tu 15:00</div>
<div class="t" style="left:737.50px;top:374.94px;font-size:6.8px;color:#fff;font-weight:normal;">We 11:40</div>
</div>
<div class="a" style="left:41px;top:291px;width:21.5px;height:22px;background:rgba(0,149,193,.95)"></div>
<div class="a" style="left:71.5px;top:291px;width:22.5px;height:22px;background:rgba(0,149,193,.95)"></div>
<svg class="a" style="left:0;top:0" width="800" height="500" viewBox="0 0 800 500"><path d="M51.8 295.5V308.5M45.3 302H58.3M76 302H89.5" stroke="#e6f4fa" stroke-width=".9"/></svg>
<div class="a" style="left:41px;top:316.6px;width:152px;height:65px;background:rgba(0,149,193,.95)"></div>
<div class="a" style="left:40.5px;top:386.4px;width:152.5px;height:51.2px;background:rgba(0,149,193,.95)"></div>
<svg class="a" style="left:0;top:0" width="800" height="500" viewBox="0 0 800 500">
<circle cx="50.6" cy="328.0" r="2.9" fill="#f28c28"/>
<circle cx="50.6" cy="338.75" r="2.9" fill="#dcdcdc"/>
<circle cx="50.6" cy="349.5" r="2.9" fill="#7cb82f"/>
<circle cx="50.6" cy="360.25" r="2.9" fill="#f28c28"/>
<circle cx="50.6" cy="371.0" r="2.9" fill="#e02424"/>
</svg>
<div class="t" style="left:59.00px;top:325.05px;font-size:6.2px;color:#fff;font-weight:normal;">Direct connection</div>
<div class="t" style="left:59.00px;top:335.80px;font-size:6.2px;color:#fff;font-weight:normal;">No data available</div>
<div class="t" style="left:59.00px;top:346.55px;font-size:6.2px;color:#fff;font-weight:normal;">Transport requirements met</div>
<div class="t" style="left:59.00px;top:357.30px;font-size:6.2px;color:#fff;font-weight:normal;">Transport requirements partially met</div>
<div class="t" style="left:59.00px;top:368.05px;font-size:6.2px;color:#fff;font-weight:normal;">Transport requirements not met</div>
<div class="t" style="left:47.60px;top:393.94px;font-size:10px;color:#fff;font-weight:normal;transform:scaleX(0.885);transform-origin:0 0;">Contact - Questions?</div>
<div class="t" style="left:47.60px;top:408.07px;font-size:7px;color:#fff;font-weight:normal;">dbnetz.vertrieb@deutschebahn.com</div>
<div class="t" style="left:47.60px;top:418.07px;font-size:7px;color:#fff;font-weight:normal;transform:scaleX(0.96);transform-origin:0 0;">Tel: +49 89 1308 - 721 48</div>
</div></div>
</body></html>
